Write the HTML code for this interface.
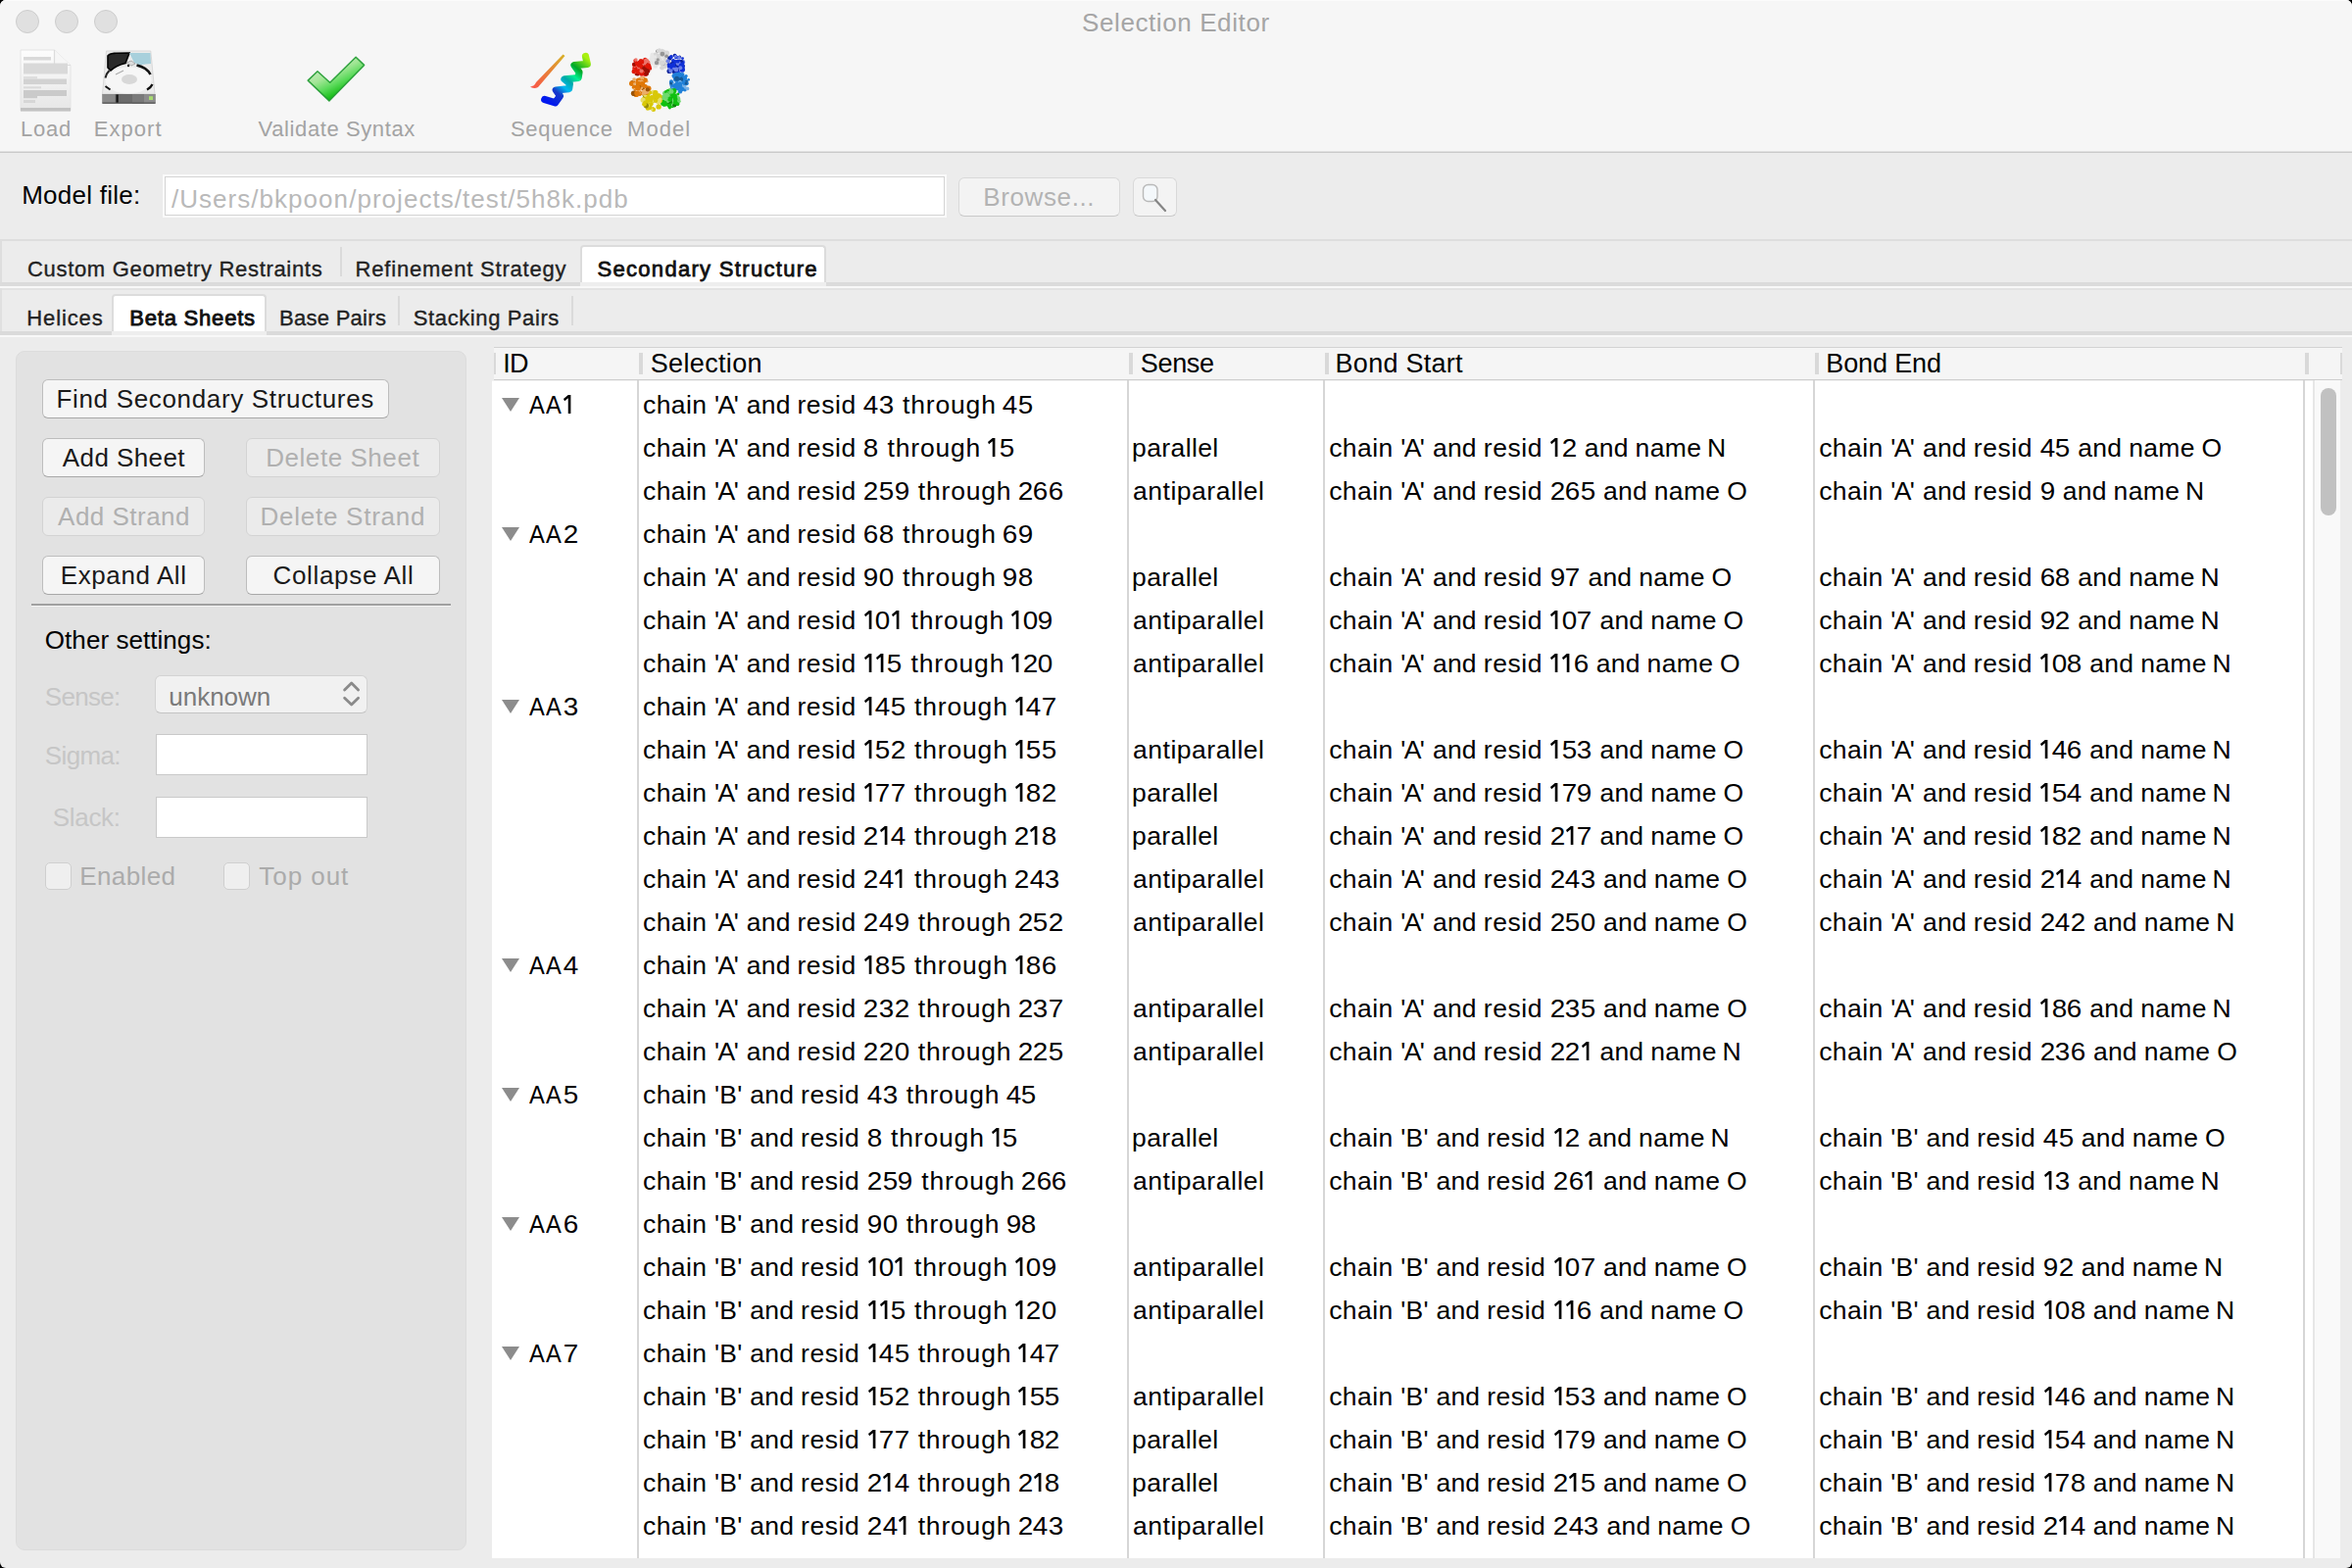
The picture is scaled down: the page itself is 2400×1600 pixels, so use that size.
<!DOCTYPE html><html><head><meta charset="utf-8"><style>
html,body{margin:0;padding:0;width:2400px;height:1600px;overflow:hidden;background:#000;}
body{font-family:"Liberation Sans",sans-serif;}
.win{position:absolute;left:0;top:0;width:2400px;height:1600px;background:#ececec;border-radius:6px 6px 6px 6px;overflow:hidden;}
.t{position:absolute;white-space:pre;line-height:1.1172;}
</style></head><body><div class="win">
<div style="position:absolute;left:0px;top:0px;width:2400px;height:154px;background:#f6f6f6;"></div>
<div style="position:absolute;left:0px;top:0px;width:2400px;height:1px;background:#fbfbfb;"></div>
<div style="position:absolute;left:0px;top:154px;width:2400px;height:1px;background:#e2e2e2;"></div>
<div style="position:absolute;left:0px;top:155px;width:2400px;height:1px;background:#c9c9c9;"></div>
<div style="position:absolute;left:16px;top:10px;width:24px;height:24px;box-sizing:border-box;border-radius:50%;background:#e0e0e0;border:1px solid #cdcdcd;"></div>
<div style="position:absolute;left:56px;top:10px;width:24px;height:24px;box-sizing:border-box;border-radius:50%;background:#e0e0e0;border:1px solid #cdcdcd;"></div>
<div style="position:absolute;left:96px;top:10px;width:24px;height:24px;box-sizing:border-box;border-radius:50%;background:#e0e0e0;border:1px solid #cdcdcd;"></div>
<div class="t" style="left:1104.0px;top:8.8px;font-size:26px;color:#a5a5a5;font-weight:400;letter-spacing:0.6px;">Selection Editor</div>
<div class="t" style="left:21.0px;top:120.1px;font-size:22px;color:#a3a3a3;font-weight:400;letter-spacing:0.8px;">Load</div>
<div class="t" style="left:95.8px;top:120.1px;font-size:22px;color:#a3a3a3;font-weight:400;letter-spacing:1.04px;">Export</div>
<div class="t" style="left:263.6px;top:120.1px;font-size:22px;color:#a3a3a3;font-weight:400;letter-spacing:0.6px;">Validate Syntax</div>
<div class="t" style="left:521.0px;top:120.1px;font-size:22px;color:#a3a3a3;font-weight:400;letter-spacing:0.686px;">Sequence</div>
<div class="t" style="left:640.0px;top:120.1px;font-size:22px;color:#a3a3a3;font-weight:400;letter-spacing:1.075px;">Model</div>
<svg style="position:absolute;left:14px;top:46px" width="66" height="72" viewBox="14 46 66 72">
<defs><linearGradient id="pg" x1="0" y1="0" x2="0" y2="1"><stop offset="0" stop-color="#fdfdfd"/><stop offset="1" stop-color="#e6e6e6"/></linearGradient></defs>
<path d="M21 51 H55.5 L72 66.5 V113 H21 Z" fill="url(#pg)" stroke="#e4e4e4" stroke-width="1"/>
<path d="M55.5 51 V66.5 H72" fill="#f6f6f6" stroke="#dcdcdc" stroke-width="1.2"/>
<g fill="#d9d9d9">
<rect x="24" y="58" width="28" height="3.5"/>
<rect x="24" y="64.5" width="45" height="11"/>
<rect x="24" y="78" width="14" height="2.5" fill="#dedede"/>
<rect x="24" y="80.5" width="44" height="5.5" fill="#d2d2d2"/>
<rect x="24" y="88.3" width="18" height="2" fill="#dadada"/>
<rect x="24" y="92" width="44" height="6" fill="#cacaca"/>
<rect x="24" y="98" width="14" height="2.2" fill="#cacaca"/>
<rect x="24" y="102" width="12" height="3" fill="#d6d6d6"/>
</g>
<rect x="21" y="110" width="51" height="3.5" fill="#c2c2c2"/>
</svg>
<svg style="position:absolute;left:98px;top:46px" width="66" height="68" viewBox="98 46 66 68">
<path d="M108.5 52 H153.8 L158 96 H104.5 Z" fill="#ebebeb" stroke="#d2d2d2" stroke-width="0.8"/>
<path d="M110 57 C112 54 118 54 132 54 L128 64.5 C122 66 116 69 113 72 L110 69 Z" fill="#2a2a2a" stroke="#000" stroke-width="1.6"/>
<path d="M132 54 H153.5 L154 65 C150 65 146 66 143 66.5 L137 64 Z" fill="#a8d0dc"/>
<ellipse cx="131" cy="82" rx="23.5" ry="13.5" fill="#f6f6f6"/>
<path d="M139.5 66.5 C146 68 151 71 153.5 76" fill="none" stroke="#111" stroke-width="2.6"/>
<path d="M111.5 72 C109.5 74 108 77 107.5 79.5" fill="none" stroke="#222" stroke-width="2"/>
<path d="M107.5 88 L112.5 91.5" fill="none" stroke="#111" stroke-width="2"/>
<path d="M150 91.5 C152.5 90 154.5 88.5 155.5 86" fill="none" stroke="#111" stroke-width="2.2"/>
<ellipse cx="132" cy="81" rx="8" ry="5" fill="#d8d8d8"/>
<path d="M129 64 L134 62 L138 65 L134 67 Z" fill="#ddd" stroke="#888" stroke-width="0.6"/>
<circle cx="131" cy="67" r="1.2" fill="#111"/>
<path d="M118 76 L126 72" stroke="#aaa" stroke-width="1.2"/>
<rect x="104.5" y="96" width="54" height="9.5" fill="#6c6c6c"/>
<rect x="104.5" y="96" width="13" height="9.5" fill="#8a8a8a"/>
<rect x="135" y="96" width="12" height="9.5" fill="#7a7a7a"/>
<rect x="147" y="96" width="11.5" height="9.5" fill="#8c8c8c"/>
<rect x="118.5" y="96.5" width="2.2" height="8.5" fill="#111"/>
<rect x="152" y="98.2" width="4" height="3.8" fill="#a8dc70"/>
<rect x="104.5" y="104.5" width="54" height="1.2" fill="#555"/>
</svg>
<svg style="position:absolute;left:311px;top:55px" width="64" height="52" viewBox="0 0 64 52">
<defs><linearGradient id="cg" x1="0.22" y1="0.12" x2="0.72" y2="0.88"><stop offset="0" stop-color="#d4eccc"/><stop offset="0.38" stop-color="#a2e696"/><stop offset="0.62" stop-color="#5ada5a"/><stop offset="0.82" stop-color="#22c222"/><stop offset="1" stop-color="#069806"/></linearGradient></defs>
<path d="M3.2 27.1 L13 17.7 L25.7 29.2 L52.1 3.3 L60.6 11.4 L24.9 47.9 Z" fill="url(#cg)" stroke="#1f9a30" stroke-opacity="0.9" stroke-width="1.5" stroke-linejoin="round"/>
</svg>
<svg style="position:absolute;left:536px;top:50px" width="70" height="64" viewBox="536 50 70 64">
<defs><linearGradient id="og" gradientUnits="userSpaceOnUse" x1="545" y1="90" x2="576" y2="57"><stop offset="0" stop-color="#f85848"/><stop offset="0.5" stop-color="#e88038"/><stop offset="1" stop-color="#d8b028"/></linearGradient>
<linearGradient id="hg" gradientUnits="userSpaceOnUse" x1="560" y1="104" x2="597" y2="58"><stop offset="0" stop-color="#0018f0"/><stop offset="0.22" stop-color="#1838c8"/><stop offset="0.36" stop-color="#00b8f0"/><stop offset="0.5" stop-color="#00a8a8"/><stop offset="0.62" stop-color="#00f090"/><stop offset="0.76" stop-color="#00a828"/><stop offset="1" stop-color="#a8f010"/></linearGradient></defs>
<path d="M541 88.5 C543 90 546 90.5 549 89 L576.5 57 L574.5 55.5 L547 84 C546 86 545 88 541 88.5 Z" fill="url(#og)"/>
<path d="M555.7 101.5 L566.5 104.8 L571.5 97.8 L567.3 92 L580.6 90.7 L581.4 85.3 L576 80.8 L590.1 79.5 L591 73.7 L586 66.7 L599.3 65.4 L597.5 57.5" stroke="url(#hg)" stroke-width="7.2" fill="none" stroke-linecap="round" stroke-linejoin="round"/>
</svg>
<svg style="position:absolute;left:638px;top:46px" width="72" height="70" viewBox="638 46 72 70"><circle cx="653.5" cy="70.9" r="1.4" fill="rgb(236, 116, 106)"/><circle cx="650.0" cy="67.6" r="2.1" fill="rgb(224, 24, 8)"/><circle cx="659.7" cy="69.8" r="1.4" fill="rgb(224, 24, 8)"/><circle cx="647.2" cy="72.4" r="1.7" fill="rgb(224, 24, 8)"/><circle cx="648.2" cy="62.0" r="1.9" fill="rgb(224, 24, 8)"/><circle cx="655.7" cy="68.4" r="1.8" fill="rgb(236, 116, 106)"/><circle cx="655.9" cy="70.3" r="2.6" fill="rgb(224, 24, 8)"/><circle cx="657.3" cy="74.5" r="1.9" fill="rgb(236, 116, 106)"/><circle cx="653.3" cy="68.2" r="1.6" fill="rgb(224, 24, 8)"/><circle cx="652.4" cy="63.9" r="2.2" fill="rgb(224, 24, 8)"/><circle cx="650.7" cy="69.8" r="2.4" fill="rgb(236, 116, 106)"/><circle cx="654.8" cy="75.0" r="2.7" fill="rgb(224, 24, 8)"/><circle cx="654.1" cy="64.7" r="1.5" fill="rgb(156, 16, 5)"/><circle cx="647.8" cy="72.4" r="2.1" fill="rgb(224, 24, 8)"/><circle cx="661.5" cy="70.3" r="2.2" fill="rgb(236, 116, 106)"/><circle cx="657.6" cy="65.6" r="2.3" fill="rgb(236, 116, 106)"/><circle cx="649.8" cy="66.0" r="2.8" fill="rgb(236, 116, 106)"/><circle cx="647.6" cy="69.8" r="2.4" fill="rgb(224, 24, 8)"/><circle cx="648.9" cy="61.1" r="1.8" fill="rgb(236, 116, 106)"/><circle cx="649.2" cy="73.3" r="2.0" fill="rgb(224, 24, 8)"/><circle cx="655.6" cy="70.4" r="2.5" fill="rgb(224, 24, 8)"/><circle cx="657.1" cy="71.2" r="2.7" fill="rgb(224, 24, 8)"/><circle cx="659.3" cy="71.2" r="2.7" fill="rgb(224, 24, 8)"/><circle cx="658.2" cy="60.8" r="2.0" fill="rgb(224, 24, 8)"/><circle cx="649.1" cy="75.4" r="1.5" fill="rgb(156, 16, 5)"/><circle cx="656.1" cy="71.7" r="2.1" fill="rgb(224, 24, 8)"/><circle cx="651.4" cy="66.6" r="2.0" fill="rgb(224, 24, 8)"/><circle cx="650.3" cy="73.3" r="2.4" fill="rgb(156, 16, 5)"/><circle cx="647.9" cy="67.9" r="1.4" fill="rgb(236, 116, 106)"/><circle cx="661.0" cy="63.9" r="2.6" fill="rgb(236, 116, 106)"/><circle cx="650.7" cy="71.7" r="2.3" fill="rgb(224, 24, 8)"/><circle cx="655.9" cy="69.1" r="1.6" fill="rgb(224, 24, 8)"/><circle cx="654.0" cy="69.6" r="1.5" fill="rgb(224, 24, 8)"/><circle cx="658.4" cy="71.4" r="2.7" fill="rgb(224, 24, 8)"/><circle cx="652.7" cy="67.0" r="1.9" fill="rgb(224, 24, 8)"/><circle cx="653.2" cy="70.2" r="2.9" fill="rgb(236, 116, 106)"/><circle cx="649.0" cy="69.8" r="1.5" fill="rgb(224, 24, 8)"/><circle cx="652.5" cy="71.7" r="1.6" fill="rgb(236, 116, 106)"/><circle cx="663.7" cy="69.9" r="1.5" fill="rgb(224, 24, 8)"/><circle cx="653.9" cy="68.4" r="2.9" fill="rgb(224, 24, 8)"/><circle cx="659.4" cy="63.0" r="1.9" fill="rgb(224, 24, 8)"/><circle cx="658.5" cy="75.5" r="2.5" fill="rgb(224, 24, 8)"/><circle cx="653.0" cy="71.5" r="2.9" fill="rgb(236, 116, 106)"/><circle cx="659.5" cy="62.1" r="2.5" fill="rgb(236, 116, 106)"/><circle cx="655.5" cy="74.5" r="1.3" fill="rgb(224, 24, 8)"/><circle cx="658.4" cy="69.3" r="2.4" fill="rgb(224, 24, 8)"/><circle cx="659.8" cy="67.1" r="2.9" fill="rgb(156, 16, 5)"/><circle cx="659.1" cy="67.3" r="1.7" fill="rgb(224, 24, 8)"/><circle cx="655.6" cy="71.6" r="2.7" fill="rgb(236, 116, 106)"/><circle cx="657.7" cy="63.8" r="2.6" fill="rgb(236, 116, 106)"/><circle cx="660.7" cy="72.2" r="2.6" fill="rgb(156, 16, 5)"/><circle cx="654.6" cy="62.9" r="2.6" fill="rgb(224, 24, 8)"/><circle cx="650.6" cy="75.7" r="1.9" fill="rgb(156, 16, 5)"/><circle cx="647.2" cy="73.9" r="1.6" fill="rgb(236, 116, 106)"/><circle cx="656.4" cy="70.4" r="2.6" fill="rgb(156, 16, 5)"/><circle cx="659.6" cy="75.2" r="2.4" fill="rgb(156, 16, 5)"/><circle cx="650.9" cy="73.6" r="1.3" fill="rgb(224, 24, 8)"/><circle cx="661.5" cy="67.3" r="2.8" fill="rgb(224, 24, 8)"/><circle cx="646.7" cy="72.1" r="1.6" fill="rgb(236, 116, 106)"/><circle cx="654.6" cy="72.6" r="2.2" fill="rgb(224, 24, 8)"/><circle cx="654.3" cy="73.8" r="2.8" fill="rgb(224, 24, 8)"/><circle cx="651.3" cy="73.0" r="2.7" fill="rgb(224, 24, 8)"/><circle cx="646.7" cy="72.9" r="2.2" fill="rgb(224, 24, 8)"/><circle cx="654.0" cy="68.5" r="1.6" fill="rgb(224, 24, 8)"/><circle cx="662.7" cy="68.8" r="2.1" fill="rgb(224, 24, 8)"/><circle cx="653.6" cy="62.4" r="2.1" fill="rgb(224, 24, 8)"/><circle cx="647.1" cy="65.9" r="2.2" fill="rgb(224, 24, 8)"/><circle cx="654.6" cy="72.5" r="2.1" fill="rgb(236, 116, 106)"/><circle cx="647.3" cy="65.6" r="2.0" fill="rgb(156, 16, 5)"/><circle cx="650.1" cy="64.8" r="2.4" fill="rgb(224, 24, 8)"/><circle cx="667.6" cy="62.3" r="2.8" fill="rgb(215, 215, 215)"/><circle cx="670.7" cy="52.3" r="1.7" fill="rgb(150, 150, 150)"/><circle cx="664.9" cy="57.2" r="1.5" fill="rgb(231, 231, 231)"/><circle cx="677.3" cy="64.2" r="1.7" fill="rgb(215, 215, 215)"/><circle cx="679.8" cy="63.7" r="2.7" fill="rgb(231, 231, 231)"/><circle cx="677.6" cy="66.7" r="1.5" fill="rgb(231, 231, 231)"/><circle cx="680.3" cy="54.3" r="2.8" fill="rgb(215, 215, 215)"/><circle cx="668.8" cy="63.9" r="2.6" fill="rgb(150, 150, 150)"/><circle cx="676.2" cy="65.0" r="1.8" fill="rgb(215, 215, 215)"/><circle cx="674.8" cy="64.5" r="1.3" fill="rgb(231, 231, 231)"/><circle cx="668.4" cy="58.7" r="1.8" fill="rgb(215, 215, 215)"/><circle cx="669.2" cy="56.3" r="2.9" fill="rgb(215, 215, 215)"/><circle cx="675.6" cy="51.5" r="1.7" fill="rgb(215, 215, 215)"/><circle cx="681.1" cy="62.5" r="1.5" fill="rgb(215, 215, 215)"/><circle cx="665.5" cy="64.7" r="1.7" fill="rgb(231, 231, 231)"/><circle cx="678.7" cy="67.7" r="2.4" fill="rgb(215, 215, 215)"/><circle cx="674.5" cy="61.2" r="2.0" fill="rgb(231, 231, 231)"/><circle cx="681.6" cy="64.5" r="2.6" fill="rgb(231, 231, 231)"/><circle cx="680.8" cy="64.8" r="2.7" fill="rgb(215, 215, 215)"/><circle cx="669.1" cy="61.8" r="2.8" fill="rgb(215, 215, 215)"/><circle cx="673.1" cy="62.8" r="1.7" fill="rgb(215, 215, 215)"/><circle cx="675.4" cy="62.2" r="1.6" fill="rgb(215, 215, 215)"/><circle cx="671.8" cy="64.3" r="1.8" fill="rgb(231, 231, 231)"/><circle cx="670.6" cy="60.5" r="1.3" fill="rgb(215, 215, 215)"/><circle cx="673.4" cy="61.0" r="2.2" fill="rgb(231, 231, 231)"/><circle cx="675.5" cy="65.7" r="1.5" fill="rgb(150, 150, 150)"/><circle cx="675.6" cy="55.7" r="2.6" fill="rgb(215, 215, 215)"/><circle cx="668.8" cy="64.2" r="2.9" fill="rgb(231, 231, 231)"/><circle cx="668.8" cy="67.5" r="2.3" fill="rgb(231, 231, 231)"/><circle cx="669.7" cy="63.1" r="1.5" fill="rgb(215, 215, 215)"/><circle cx="680.4" cy="63.8" r="1.6" fill="rgb(215, 215, 215)"/><circle cx="680.7" cy="64.8" r="2.4" fill="rgb(231, 231, 231)"/><circle cx="672.7" cy="64.0" r="2.0" fill="rgb(215, 215, 215)"/><circle cx="676.4" cy="65.0" r="2.8" fill="rgb(215, 215, 215)"/><circle cx="679.5" cy="59.4" r="2.8" fill="rgb(215, 215, 215)"/><circle cx="671.7" cy="64.8" r="1.9" fill="rgb(215, 215, 215)"/><circle cx="667.6" cy="61.4" r="2.1" fill="rgb(215, 215, 215)"/><circle cx="677.1" cy="60.6" r="1.9" fill="rgb(215, 215, 215)"/><circle cx="674.0" cy="60.7" r="1.7" fill="rgb(215, 215, 215)"/><circle cx="668.2" cy="57.4" r="2.4" fill="rgb(231, 231, 231)"/><circle cx="671.6" cy="52.0" r="1.8" fill="rgb(215, 215, 215)"/><circle cx="675.9" cy="60.3" r="2.3" fill="rgb(231, 231, 231)"/><circle cx="681.5" cy="62.8" r="2.3" fill="rgb(150, 150, 150)"/><circle cx="672.6" cy="52.3" r="2.1" fill="rgb(215, 215, 215)"/><circle cx="665.0" cy="60.3" r="2.6" fill="rgb(231, 231, 231)"/><circle cx="665.8" cy="56.1" r="2.4" fill="rgb(231, 231, 231)"/><circle cx="673.5" cy="61.3" r="1.9" fill="rgb(215, 215, 215)"/><circle cx="680.0" cy="65.6" r="2.3" fill="rgb(215, 215, 215)"/><circle cx="668.3" cy="55.3" r="1.3" fill="rgb(215, 215, 215)"/><circle cx="675.7" cy="53.1" r="2.2" fill="rgb(215, 215, 215)"/><circle cx="672.6" cy="59.3" r="1.7" fill="rgb(231, 231, 231)"/><circle cx="676.8" cy="62.2" r="1.6" fill="rgb(231, 231, 231)"/><circle cx="672.8" cy="51.2" r="1.9" fill="rgb(215, 215, 215)"/><circle cx="666.2" cy="61.5" r="2.3" fill="rgb(231, 231, 231)"/><circle cx="672.4" cy="59.3" r="1.7" fill="rgb(215, 215, 215)"/><circle cx="673.2" cy="56.4" r="1.3" fill="rgb(215, 215, 215)"/><circle cx="676.9" cy="61.9" r="2.4" fill="rgb(231, 231, 231)"/><circle cx="671.6" cy="56.9" r="2.0" fill="rgb(215, 215, 215)"/><circle cx="671.3" cy="60.9" r="1.6" fill="rgb(150, 150, 150)"/><circle cx="682.4" cy="59.3" r="2.0" fill="rgb(215, 215, 215)"/><circle cx="677.3" cy="52.1" r="1.7" fill="rgb(215, 215, 215)"/><circle cx="675.7" cy="69.3" r="2.2" fill="rgb(215, 215, 215)"/><circle cx="677.2" cy="65.2" r="1.5" fill="rgb(150, 150, 150)"/><circle cx="675.9" cy="55.1" r="2.4" fill="rgb(150, 150, 150)"/><circle cx="674.4" cy="69.2" r="1.3" fill="rgb(215, 215, 215)"/><circle cx="679.2" cy="60.6" r="1.8" fill="rgb(215, 215, 215)"/><circle cx="676.3" cy="64.0" r="2.6" fill="rgb(215, 215, 215)"/><circle cx="681.2" cy="60.6" r="1.5" fill="rgb(231, 231, 231)"/><circle cx="680.1" cy="57.2" r="1.8" fill="rgb(150, 150, 150)"/><circle cx="670.0" cy="64.1" r="2.2" fill="rgb(150, 150, 150)"/><circle cx="686.1" cy="69.9" r="1.4" fill="rgb(16, 48, 216)"/><circle cx="696.2" cy="70.9" r="2.8" fill="rgb(16, 48, 216)"/><circle cx="689.5" cy="69.7" r="1.6" fill="rgb(16, 48, 216)"/><circle cx="683.1" cy="72.5" r="2.6" fill="rgb(11, 33, 151)"/><circle cx="683.4" cy="59.4" r="2.2" fill="rgb(11, 33, 151)"/><circle cx="689.3" cy="64.8" r="2.0" fill="rgb(111, 130, 231)"/><circle cx="689.6" cy="58.9" r="1.4" fill="rgb(16, 48, 216)"/><circle cx="691.5" cy="64.9" r="1.8" fill="rgb(16, 48, 216)"/><circle cx="687.2" cy="73.2" r="1.7" fill="rgb(11, 33, 151)"/><circle cx="687.2" cy="62.5" r="1.9" fill="rgb(16, 48, 216)"/><circle cx="690.8" cy="68.2" r="2.7" fill="rgb(16, 48, 216)"/><circle cx="686.2" cy="66.0" r="2.9" fill="rgb(11, 33, 151)"/><circle cx="687.2" cy="66.6" r="1.4" fill="rgb(16, 48, 216)"/><circle cx="688.5" cy="67.4" r="1.7" fill="rgb(16, 48, 216)"/><circle cx="681.6" cy="62.2" r="2.0" fill="rgb(111, 130, 231)"/><circle cx="684.3" cy="69.0" r="1.8" fill="rgb(16, 48, 216)"/><circle cx="693.1" cy="67.4" r="1.5" fill="rgb(11, 33, 151)"/><circle cx="682.6" cy="65.8" r="1.6" fill="rgb(111, 130, 231)"/><circle cx="689.0" cy="69.5" r="2.0" fill="rgb(16, 48, 216)"/><circle cx="697.6" cy="63.5" r="1.3" fill="rgb(111, 130, 231)"/><circle cx="696.8" cy="67.4" r="2.1" fill="rgb(11, 33, 151)"/><circle cx="689.5" cy="65.9" r="2.8" fill="rgb(16, 48, 216)"/><circle cx="693.4" cy="58.3" r="1.7" fill="rgb(11, 33, 151)"/><circle cx="691.5" cy="67.5" r="2.4" fill="rgb(16, 48, 216)"/><circle cx="696.6" cy="63.2" r="2.5" fill="rgb(111, 130, 231)"/><circle cx="683.5" cy="67.6" r="2.6" fill="rgb(16, 48, 216)"/><circle cx="690.5" cy="74.8" r="1.8" fill="rgb(111, 130, 231)"/><circle cx="692.0" cy="68.5" r="2.4" fill="rgb(111, 130, 231)"/><circle cx="690.6" cy="66.9" r="2.2" fill="rgb(16, 48, 216)"/><circle cx="687.0" cy="68.1" r="1.3" fill="rgb(111, 130, 231)"/><circle cx="687.7" cy="71.1" r="2.3" fill="rgb(11, 33, 151)"/><circle cx="693.7" cy="62.1" r="1.7" fill="rgb(16, 48, 216)"/><circle cx="696.7" cy="64.1" r="1.3" fill="rgb(16, 48, 216)"/><circle cx="682.3" cy="66.0" r="1.7" fill="rgb(16, 48, 216)"/><circle cx="685.0" cy="58.1" r="1.4" fill="rgb(16, 48, 216)"/><circle cx="686.8" cy="70.3" r="1.6" fill="rgb(111, 130, 231)"/><circle cx="691.7" cy="58.5" r="1.6" fill="rgb(16, 48, 216)"/><circle cx="693.6" cy="65.1" r="1.7" fill="rgb(111, 130, 231)"/><circle cx="690.9" cy="73.6" r="2.8" fill="rgb(16, 48, 216)"/><circle cx="686.6" cy="66.0" r="2.0" fill="rgb(16, 48, 216)"/><circle cx="684.9" cy="58.0" r="1.9" fill="rgb(16, 48, 216)"/><circle cx="691.7" cy="75.0" r="1.4" fill="rgb(16, 48, 216)"/><circle cx="694.1" cy="67.7" r="2.7" fill="rgb(11, 33, 151)"/><circle cx="688.5" cy="56.5" r="1.8" fill="rgb(11, 33, 151)"/><circle cx="693.1" cy="74.2" r="1.4" fill="rgb(111, 130, 231)"/><circle cx="687.0" cy="61.8" r="1.8" fill="rgb(16, 48, 216)"/><circle cx="689.6" cy="66.0" r="1.9" fill="rgb(16, 48, 216)"/><circle cx="691.6" cy="65.3" r="1.6" fill="rgb(11, 33, 151)"/><circle cx="684.4" cy="72.4" r="2.0" fill="rgb(111, 130, 231)"/><circle cx="694.9" cy="67.6" r="2.8" fill="rgb(16, 48, 216)"/><circle cx="691.1" cy="70.3" r="1.3" fill="rgb(11, 33, 151)"/><circle cx="682.5" cy="70.3" r="1.4" fill="rgb(111, 130, 231)"/><circle cx="690.8" cy="66.2" r="1.7" fill="rgb(11, 33, 151)"/><circle cx="689.3" cy="57.1" r="1.7" fill="rgb(16, 48, 216)"/><circle cx="696.0" cy="64.1" r="2.4" fill="rgb(16, 48, 216)"/><circle cx="687.9" cy="69.4" r="2.5" fill="rgb(16, 48, 216)"/><circle cx="695.5" cy="62.4" r="1.3" fill="rgb(11, 33, 151)"/><circle cx="690.1" cy="71.5" r="2.8" fill="rgb(11, 33, 151)"/><circle cx="686.8" cy="68.3" r="2.1" fill="rgb(16, 48, 216)"/><circle cx="692.1" cy="64.6" r="2.5" fill="rgb(111, 130, 231)"/><circle cx="693.0" cy="58.8" r="1.8" fill="rgb(111, 130, 231)"/><circle cx="687.5" cy="70.1" r="1.4" fill="rgb(111, 130, 231)"/><circle cx="692.0" cy="73.3" r="1.4" fill="rgb(16, 48, 216)"/><circle cx="695.6" cy="67.2" r="2.9" fill="rgb(16, 48, 216)"/><circle cx="696.5" cy="59.6" r="1.4" fill="rgb(16, 48, 216)"/><circle cx="694.3" cy="69.2" r="2.0" fill="rgb(111, 130, 231)"/><circle cx="690.0" cy="71.0" r="2.4" fill="rgb(111, 130, 231)"/><circle cx="689.4" cy="57.4" r="1.5" fill="rgb(111, 130, 231)"/><circle cx="691.7" cy="62.5" r="1.9" fill="rgb(16, 48, 216)"/><circle cx="689.3" cy="62.8" r="1.7" fill="rgb(16, 48, 216)"/><circle cx="698.9" cy="91.8" r="1.8" fill="rgb(32, 128, 216)"/><circle cx="686.4" cy="90.3" r="1.7" fill="rgb(32, 128, 216)"/><circle cx="696.4" cy="78.0" r="1.5" fill="rgb(22, 89, 151)"/><circle cx="685.7" cy="85.9" r="2.8" fill="rgb(121, 178, 231)"/><circle cx="697.8" cy="85.6" r="1.6" fill="rgb(32, 128, 216)"/><circle cx="700.3" cy="83.5" r="1.9" fill="rgb(22, 89, 151)"/><circle cx="697.5" cy="80.6" r="2.5" fill="rgb(32, 128, 216)"/><circle cx="695.8" cy="83.9" r="2.3" fill="rgb(32, 128, 216)"/><circle cx="694.9" cy="89.2" r="1.6" fill="rgb(32, 128, 216)"/><circle cx="693.7" cy="91.2" r="1.6" fill="rgb(121, 178, 231)"/><circle cx="698.2" cy="84.9" r="1.6" fill="rgb(121, 178, 231)"/><circle cx="692.7" cy="87.5" r="2.2" fill="rgb(121, 178, 231)"/><circle cx="695.7" cy="85.3" r="2.2" fill="rgb(32, 128, 216)"/><circle cx="692.8" cy="83.2" r="2.4" fill="rgb(32, 128, 216)"/><circle cx="690.6" cy="86.7" r="2.8" fill="rgb(32, 128, 216)"/><circle cx="691.5" cy="90.5" r="2.0" fill="rgb(32, 128, 216)"/><circle cx="700.1" cy="77.5" r="1.6" fill="rgb(32, 128, 216)"/><circle cx="693.5" cy="81.5" r="2.7" fill="rgb(32, 128, 216)"/><circle cx="686.6" cy="88.4" r="2.7" fill="rgb(32, 128, 216)"/><circle cx="691.3" cy="85.2" r="2.2" fill="rgb(32, 128, 216)"/><circle cx="688.3" cy="77.7" r="2.3" fill="rgb(32, 128, 216)"/><circle cx="689.8" cy="88.9" r="1.8" fill="rgb(32, 128, 216)"/><circle cx="685.0" cy="83.4" r="2.1" fill="rgb(32, 128, 216)"/><circle cx="697.0" cy="75.9" r="1.5" fill="rgb(32, 128, 216)"/><circle cx="702.6" cy="81.3" r="1.4" fill="rgb(32, 128, 216)"/><circle cx="698.3" cy="82.4" r="2.3" fill="rgb(22, 89, 151)"/><circle cx="695.1" cy="82.2" r="1.7" fill="rgb(121, 178, 231)"/><circle cx="686.9" cy="89.4" r="1.6" fill="rgb(121, 178, 231)"/><circle cx="694.9" cy="89.5" r="1.9" fill="rgb(32, 128, 216)"/><circle cx="696.5" cy="87.1" r="2.7" fill="rgb(121, 178, 231)"/><circle cx="700.0" cy="86.2" r="1.4" fill="rgb(121, 178, 231)"/><circle cx="695.0" cy="82.8" r="2.2" fill="rgb(32, 128, 216)"/><circle cx="691.0" cy="81.6" r="2.2" fill="rgb(32, 128, 216)"/><circle cx="687.6" cy="87.8" r="2.0" fill="rgb(32, 128, 216)"/><circle cx="700.6" cy="85.6" r="1.7" fill="rgb(32, 128, 216)"/><circle cx="694.6" cy="76.6" r="1.6" fill="rgb(32, 128, 216)"/><circle cx="691.9" cy="84.9" r="2.0" fill="rgb(32, 128, 216)"/><circle cx="698.4" cy="87.5" r="1.4" fill="rgb(32, 128, 216)"/><circle cx="692.8" cy="83.4" r="2.5" fill="rgb(121, 178, 231)"/><circle cx="692.7" cy="84.5" r="1.9" fill="rgb(32, 128, 216)"/><circle cx="696.1" cy="83.9" r="2.9" fill="rgb(121, 178, 231)"/><circle cx="693.0" cy="76.4" r="2.9" fill="rgb(32, 128, 216)"/><circle cx="684.7" cy="85.1" r="1.6" fill="rgb(22, 89, 151)"/><circle cx="696.1" cy="75.8" r="1.9" fill="rgb(32, 128, 216)"/><circle cx="694.0" cy="82.0" r="1.7" fill="rgb(22, 89, 151)"/><circle cx="694.9" cy="82.4" r="2.8" fill="rgb(32, 128, 216)"/><circle cx="694.9" cy="88.2" r="1.8" fill="rgb(32, 128, 216)"/><circle cx="696.7" cy="85.3" r="2.8" fill="rgb(32, 128, 216)"/><circle cx="690.1" cy="76.7" r="2.6" fill="rgb(32, 128, 216)"/><circle cx="698.5" cy="88.6" r="1.9" fill="rgb(121, 178, 231)"/><circle cx="698.3" cy="80.1" r="2.7" fill="rgb(32, 128, 216)"/><circle cx="701.4" cy="90.4" r="1.9" fill="rgb(121, 178, 231)"/><circle cx="695.0" cy="81.0" r="2.2" fill="rgb(22, 89, 151)"/><circle cx="688.9" cy="90.7" r="1.6" fill="rgb(32, 128, 216)"/><circle cx="693.9" cy="83.5" r="1.7" fill="rgb(121, 178, 231)"/><circle cx="687.9" cy="77.4" r="2.4" fill="rgb(32, 128, 216)"/><circle cx="693.9" cy="84.7" r="1.5" fill="rgb(32, 128, 216)"/><circle cx="690.0" cy="81.1" r="2.7" fill="rgb(32, 128, 216)"/><circle cx="696.2" cy="87.1" r="1.3" fill="rgb(121, 178, 231)"/><circle cx="698.5" cy="84.7" r="1.9" fill="rgb(32, 128, 216)"/><circle cx="694.9" cy="91.0" r="1.6" fill="rgb(32, 128, 216)"/><circle cx="689.9" cy="80.6" r="2.8" fill="rgb(32, 128, 216)"/><circle cx="694.0" cy="87.1" r="2.3" fill="rgb(32, 128, 216)"/><circle cx="699.4" cy="78.8" r="1.7" fill="rgb(32, 128, 216)"/><circle cx="700.9" cy="85.1" r="1.9" fill="rgb(32, 128, 216)"/><circle cx="690.6" cy="80.3" r="2.5" fill="rgb(22, 89, 151)"/><circle cx="694.0" cy="93.4" r="2.2" fill="rgb(32, 128, 216)"/><circle cx="691.0" cy="86.5" r="2.5" fill="rgb(32, 128, 216)"/><circle cx="700.1" cy="85.1" r="1.5" fill="rgb(22, 89, 151)"/><circle cx="696.0" cy="91.0" r="2.3" fill="rgb(32, 128, 216)"/><circle cx="685.1" cy="98.1" r="1.8" fill="rgb(16, 192, 16)"/><circle cx="692.3" cy="103.3" r="2.4" fill="rgb(111, 217, 111)"/><circle cx="692.4" cy="101.0" r="2.0" fill="rgb(111, 217, 111)"/><circle cx="683.7" cy="95.3" r="1.5" fill="rgb(16, 192, 16)"/><circle cx="684.1" cy="101.7" r="2.5" fill="rgb(16, 192, 16)"/><circle cx="681.1" cy="92.8" r="1.7" fill="rgb(111, 217, 111)"/><circle cx="679.0" cy="98.9" r="2.1" fill="rgb(111, 217, 111)"/><circle cx="683.3" cy="107.6" r="1.6" fill="rgb(11, 134, 11)"/><circle cx="684.4" cy="100.4" r="1.7" fill="rgb(16, 192, 16)"/><circle cx="683.6" cy="91.6" r="1.8" fill="rgb(111, 217, 111)"/><circle cx="687.2" cy="97.7" r="2.8" fill="rgb(16, 192, 16)"/><circle cx="679.0" cy="95.3" r="2.9" fill="rgb(111, 217, 111)"/><circle cx="675.7" cy="102.3" r="2.7" fill="rgb(111, 217, 111)"/><circle cx="677.0" cy="103.6" r="1.8" fill="rgb(16, 192, 16)"/><circle cx="685.6" cy="107.3" r="2.8" fill="rgb(16, 192, 16)"/><circle cx="684.5" cy="101.3" r="2.8" fill="rgb(16, 192, 16)"/><circle cx="682.6" cy="102.7" r="1.4" fill="rgb(16, 192, 16)"/><circle cx="681.6" cy="94.2" r="2.5" fill="rgb(111, 217, 111)"/><circle cx="690.0" cy="103.3" r="2.6" fill="rgb(16, 192, 16)"/><circle cx="687.7" cy="92.8" r="2.7" fill="rgb(16, 192, 16)"/><circle cx="691.8" cy="96.0" r="1.6" fill="rgb(16, 192, 16)"/><circle cx="684.7" cy="101.3" r="2.6" fill="rgb(111, 217, 111)"/><circle cx="678.5" cy="94.5" r="1.8" fill="rgb(111, 217, 111)"/><circle cx="685.5" cy="101.8" r="1.6" fill="rgb(111, 217, 111)"/><circle cx="681.8" cy="105.4" r="1.7" fill="rgb(16, 192, 16)"/><circle cx="682.5" cy="108.1" r="1.8" fill="rgb(16, 192, 16)"/><circle cx="689.7" cy="99.4" r="2.3" fill="rgb(111, 217, 111)"/><circle cx="689.0" cy="101.7" r="2.5" fill="rgb(16, 192, 16)"/><circle cx="679.8" cy="106.8" r="1.6" fill="rgb(16, 192, 16)"/><circle cx="685.1" cy="99.3" r="1.6" fill="rgb(111, 217, 111)"/><circle cx="687.1" cy="100.7" r="2.9" fill="rgb(111, 217, 111)"/><circle cx="689.8" cy="100.9" r="2.6" fill="rgb(16, 192, 16)"/><circle cx="686.3" cy="106.0" r="2.6" fill="rgb(16, 192, 16)"/><circle cx="683.4" cy="109.8" r="1.6" fill="rgb(16, 192, 16)"/><circle cx="682.2" cy="95.2" r="2.3" fill="rgb(16, 192, 16)"/><circle cx="691.0" cy="104.6" r="2.6" fill="rgb(111, 217, 111)"/><circle cx="680.8" cy="97.4" r="1.9" fill="rgb(16, 192, 16)"/><circle cx="685.3" cy="99.6" r="1.3" fill="rgb(11, 134, 11)"/><circle cx="685.0" cy="104.3" r="2.1" fill="rgb(11, 134, 11)"/><circle cx="677.7" cy="106.7" r="2.0" fill="rgb(16, 192, 16)"/><circle cx="676.4" cy="99.2" r="2.3" fill="rgb(111, 217, 111)"/><circle cx="681.5" cy="104.2" r="2.6" fill="rgb(16, 192, 16)"/><circle cx="680.0" cy="94.1" r="2.0" fill="rgb(16, 192, 16)"/><circle cx="685.0" cy="94.3" r="2.0" fill="rgb(16, 192, 16)"/><circle cx="686.6" cy="98.4" r="1.8" fill="rgb(16, 192, 16)"/><circle cx="681.6" cy="92.6" r="1.5" fill="rgb(16, 192, 16)"/><circle cx="684.1" cy="105.0" r="1.6" fill="rgb(16, 192, 16)"/><circle cx="682.6" cy="103.3" r="2.5" fill="rgb(11, 134, 11)"/><circle cx="691.4" cy="106.2" r="1.9" fill="rgb(16, 192, 16)"/><circle cx="692.0" cy="99.9" r="2.0" fill="rgb(111, 217, 111)"/><circle cx="686.3" cy="107.2" r="1.6" fill="rgb(16, 192, 16)"/><circle cx="683.3" cy="101.3" r="2.6" fill="rgb(16, 192, 16)"/><circle cx="682.0" cy="95.2" r="2.0" fill="rgb(111, 217, 111)"/><circle cx="688.2" cy="105.9" r="2.5" fill="rgb(16, 192, 16)"/><circle cx="688.4" cy="97.8" r="2.5" fill="rgb(16, 192, 16)"/><circle cx="681.0" cy="102.3" r="2.7" fill="rgb(111, 217, 111)"/><circle cx="685.1" cy="93.4" r="2.4" fill="rgb(111, 217, 111)"/><circle cx="680.6" cy="96.5" r="2.3" fill="rgb(16, 192, 16)"/><circle cx="688.2" cy="103.7" r="2.4" fill="rgb(111, 217, 111)"/><circle cx="681.5" cy="98.1" r="2.0" fill="rgb(16, 192, 16)"/><circle cx="680.3" cy="97.2" r="2.8" fill="rgb(111, 217, 111)"/><circle cx="686.9" cy="107.1" r="1.9" fill="rgb(111, 217, 111)"/><circle cx="674.7" cy="101.3" r="2.2" fill="rgb(16, 192, 16)"/><circle cx="688.2" cy="107.5" r="2.1" fill="rgb(11, 134, 11)"/><circle cx="689.2" cy="104.5" r="2.4" fill="rgb(16, 192, 16)"/><circle cx="677.1" cy="100.2" r="2.1" fill="rgb(111, 217, 111)"/><circle cx="676.3" cy="105.6" r="2.4" fill="rgb(16, 192, 16)"/><circle cx="677.9" cy="105.6" r="2.9" fill="rgb(16, 192, 16)"/><circle cx="683.2" cy="101.7" r="1.9" fill="rgb(16, 192, 16)"/><circle cx="689.1" cy="101.1" r="2.4" fill="rgb(16, 192, 16)"/><circle cx="663.2" cy="105.5" r="2.5" fill="rgb(216, 200, 8)"/><circle cx="671.0" cy="100.3" r="2.6" fill="rgb(216, 200, 8)"/><circle cx="662.9" cy="104.5" r="2.5" fill="rgb(216, 200, 8)"/><circle cx="667.9" cy="96.1" r="2.2" fill="rgb(216, 200, 8)"/><circle cx="666.8" cy="111.7" r="2.3" fill="rgb(216, 200, 8)"/><circle cx="668.8" cy="95.0" r="1.8" fill="rgb(216, 200, 8)"/><circle cx="663.3" cy="101.8" r="1.9" fill="rgb(231, 222, 106)"/><circle cx="667.6" cy="99.5" r="1.7" fill="rgb(216, 200, 8)"/><circle cx="662.8" cy="103.8" r="2.5" fill="rgb(216, 200, 8)"/><circle cx="664.7" cy="106.0" r="2.1" fill="rgb(216, 200, 8)"/><circle cx="659.2" cy="105.5" r="1.9" fill="rgb(231, 222, 106)"/><circle cx="673.1" cy="98.8" r="2.6" fill="rgb(216, 200, 8)"/><circle cx="672.0" cy="98.0" r="2.6" fill="rgb(216, 200, 8)"/><circle cx="665.1" cy="102.1" r="2.8" fill="rgb(216, 200, 8)"/><circle cx="663.4" cy="99.5" r="1.5" fill="rgb(216, 200, 8)"/><circle cx="666.2" cy="110.4" r="1.5" fill="rgb(216, 200, 8)"/><circle cx="672.0" cy="97.9" r="2.7" fill="rgb(216, 200, 8)"/><circle cx="659.2" cy="97.5" r="2.7" fill="rgb(231, 222, 106)"/><circle cx="667.4" cy="94.3" r="2.4" fill="rgb(216, 200, 8)"/><circle cx="657.8" cy="101.0" r="2.7" fill="rgb(216, 200, 8)"/><circle cx="661.9" cy="101.2" r="1.5" fill="rgb(216, 200, 8)"/><circle cx="664.1" cy="102.6" r="1.5" fill="rgb(216, 200, 8)"/><circle cx="659.6" cy="102.8" r="2.7" fill="rgb(216, 200, 8)"/><circle cx="673.8" cy="102.8" r="2.2" fill="rgb(216, 200, 8)"/><circle cx="661.1" cy="95.3" r="2.0" fill="rgb(216, 200, 8)"/><circle cx="666.9" cy="102.1" r="2.3" fill="rgb(231, 222, 106)"/><circle cx="672.0" cy="103.7" r="2.8" fill="rgb(231, 222, 106)"/><circle cx="660.9" cy="110.7" r="2.1" fill="rgb(216, 200, 8)"/><circle cx="666.1" cy="102.0" r="2.3" fill="rgb(231, 222, 106)"/><circle cx="660.9" cy="109.8" r="2.1" fill="rgb(216, 200, 8)"/><circle cx="657.6" cy="101.2" r="2.0" fill="rgb(216, 200, 8)"/><circle cx="659.8" cy="105.4" r="1.8" fill="rgb(231, 222, 106)"/><circle cx="667.8" cy="98.1" r="1.7" fill="rgb(216, 200, 8)"/><circle cx="656.1" cy="102.1" r="2.6" fill="rgb(231, 222, 106)"/><circle cx="663.3" cy="106.2" r="2.2" fill="rgb(216, 200, 8)"/><circle cx="660.1" cy="96.5" r="2.5" fill="rgb(216, 200, 8)"/><circle cx="670.1" cy="98.4" r="1.8" fill="rgb(216, 200, 8)"/><circle cx="668.4" cy="102.6" r="2.3" fill="rgb(151, 140, 5)"/><circle cx="661.0" cy="95.8" r="2.3" fill="rgb(151, 140, 5)"/><circle cx="660.3" cy="97.9" r="2.3" fill="rgb(231, 222, 106)"/><circle cx="664.0" cy="99.6" r="2.0" fill="rgb(231, 222, 106)"/><circle cx="665.6" cy="100.6" r="1.4" fill="rgb(216, 200, 8)"/><circle cx="666.8" cy="93.7" r="1.9" fill="rgb(231, 222, 106)"/><circle cx="668.9" cy="95.3" r="1.7" fill="rgb(216, 200, 8)"/><circle cx="663.7" cy="107.4" r="2.0" fill="rgb(216, 200, 8)"/><circle cx="659.7" cy="95.5" r="2.2" fill="rgb(216, 200, 8)"/><circle cx="667.5" cy="103.0" r="2.2" fill="rgb(231, 222, 106)"/><circle cx="670.1" cy="99.9" r="1.9" fill="rgb(216, 200, 8)"/><circle cx="657.8" cy="97.5" r="2.1" fill="rgb(151, 140, 5)"/><circle cx="663.8" cy="103.5" r="1.6" fill="rgb(231, 222, 106)"/><circle cx="665.7" cy="102.9" r="2.4" fill="rgb(216, 200, 8)"/><circle cx="672.1" cy="108.9" r="2.7" fill="rgb(216, 200, 8)"/><circle cx="665.8" cy="102.9" r="1.7" fill="rgb(231, 222, 106)"/><circle cx="665.1" cy="99.6" r="2.5" fill="rgb(216, 200, 8)"/><circle cx="663.5" cy="94.2" r="1.4" fill="rgb(231, 222, 106)"/><circle cx="660.2" cy="97.1" r="2.8" fill="rgb(216, 200, 8)"/><circle cx="665.2" cy="111.8" r="1.3" fill="rgb(231, 222, 106)"/><circle cx="672.4" cy="103.1" r="1.4" fill="rgb(231, 222, 106)"/><circle cx="662.5" cy="109.6" r="2.7" fill="rgb(216, 200, 8)"/><circle cx="664.1" cy="102.6" r="2.2" fill="rgb(216, 200, 8)"/><circle cx="658.7" cy="105.2" r="2.6" fill="rgb(216, 200, 8)"/><circle cx="660.8" cy="107.8" r="2.0" fill="rgb(231, 222, 106)"/><circle cx="659.4" cy="107.8" r="2.6" fill="rgb(151, 140, 5)"/><circle cx="661.7" cy="100.9" r="2.9" fill="rgb(216, 200, 8)"/><circle cx="663.0" cy="94.5" r="2.3" fill="rgb(216, 200, 8)"/><circle cx="673.7" cy="101.3" r="1.8" fill="rgb(231, 222, 106)"/><circle cx="657.5" cy="106.3" r="2.4" fill="rgb(216, 200, 8)"/><circle cx="658.3" cy="97.3" r="1.8" fill="rgb(231, 222, 106)"/><circle cx="669.1" cy="102.5" r="2.2" fill="rgb(216, 200, 8)"/><circle cx="668.9" cy="94.5" r="2.6" fill="rgb(216, 200, 8)"/><circle cx="656.2" cy="80.2" r="1.7" fill="rgb(224, 120, 8)"/><circle cx="657.8" cy="81.6" r="2.8" fill="rgb(236, 174, 106)"/><circle cx="651.9" cy="89.6" r="2.6" fill="rgb(224, 120, 8)"/><circle cx="655.3" cy="95.6" r="1.7" fill="rgb(156, 84, 5)"/><circle cx="647.2" cy="83.7" r="1.6" fill="rgb(224, 120, 8)"/><circle cx="652.7" cy="96.0" r="2.0" fill="rgb(236, 174, 106)"/><circle cx="659.9" cy="92.5" r="1.7" fill="rgb(236, 174, 106)"/><circle cx="645.2" cy="84.0" r="2.1" fill="rgb(156, 84, 5)"/><circle cx="646.4" cy="89.2" r="1.6" fill="rgb(224, 120, 8)"/><circle cx="656.0" cy="94.9" r="2.2" fill="rgb(224, 120, 8)"/><circle cx="648.0" cy="91.6" r="1.4" fill="rgb(224, 120, 8)"/><circle cx="657.7" cy="88.1" r="2.3" fill="rgb(224, 120, 8)"/><circle cx="653.5" cy="85.7" r="1.9" fill="rgb(224, 120, 8)"/><circle cx="652.3" cy="88.1" r="2.9" fill="rgb(224, 120, 8)"/><circle cx="656.7" cy="83.9" r="1.7" fill="rgb(224, 120, 8)"/><circle cx="653.9" cy="83.1" r="2.5" fill="rgb(156, 84, 5)"/><circle cx="656.8" cy="79.8" r="1.4" fill="rgb(224, 120, 8)"/><circle cx="653.8" cy="90.9" r="1.4" fill="rgb(224, 120, 8)"/><circle cx="644.8" cy="85.2" r="2.8" fill="rgb(224, 120, 8)"/><circle cx="654.1" cy="87.5" r="1.9" fill="rgb(224, 120, 8)"/><circle cx="659.6" cy="94.5" r="2.2" fill="rgb(224, 120, 8)"/><circle cx="647.1" cy="81.1" r="1.9" fill="rgb(236, 174, 106)"/><circle cx="650.4" cy="89.0" r="2.9" fill="rgb(156, 84, 5)"/><circle cx="653.1" cy="89.2" r="1.9" fill="rgb(224, 120, 8)"/><circle cx="660.2" cy="83.1" r="1.4" fill="rgb(236, 174, 106)"/><circle cx="654.6" cy="80.9" r="2.9" fill="rgb(236, 174, 106)"/><circle cx="655.2" cy="89.0" r="2.8" fill="rgb(236, 174, 106)"/><circle cx="651.1" cy="84.5" r="2.5" fill="rgb(224, 120, 8)"/><circle cx="656.3" cy="90.9" r="1.5" fill="rgb(224, 120, 8)"/><circle cx="650.2" cy="88.5" r="1.5" fill="rgb(224, 120, 8)"/><circle cx="652.7" cy="87.8" r="1.6" fill="rgb(236, 174, 106)"/><circle cx="661.7" cy="90.2" r="2.8" fill="rgb(224, 120, 8)"/><circle cx="658.8" cy="81.7" r="2.0" fill="rgb(224, 120, 8)"/><circle cx="660.3" cy="93.4" r="2.3" fill="rgb(236, 174, 106)"/><circle cx="648.6" cy="89.5" r="2.1" fill="rgb(236, 174, 106)"/><circle cx="651.2" cy="86.4" r="1.4" fill="rgb(224, 120, 8)"/><circle cx="651.5" cy="82.1" r="2.7" fill="rgb(224, 120, 8)"/><circle cx="652.4" cy="93.3" r="1.7" fill="rgb(224, 120, 8)"/><circle cx="655.3" cy="84.5" r="2.1" fill="rgb(224, 120, 8)"/><circle cx="649.2" cy="96.2" r="2.9" fill="rgb(224, 120, 8)"/><circle cx="661.1" cy="91.3" r="1.6" fill="rgb(236, 174, 106)"/><circle cx="649.0" cy="88.8" r="1.6" fill="rgb(224, 120, 8)"/><circle cx="646.7" cy="95.3" r="2.8" fill="rgb(156, 84, 5)"/><circle cx="656.2" cy="90.5" r="1.4" fill="rgb(156, 84, 5)"/><circle cx="652.3" cy="84.2" r="1.3" fill="rgb(156, 84, 5)"/><circle cx="654.5" cy="84.0" r="1.3" fill="rgb(224, 120, 8)"/><circle cx="655.9" cy="82.9" r="2.0" fill="rgb(224, 120, 8)"/><circle cx="655.7" cy="86.5" r="1.5" fill="rgb(224, 120, 8)"/><circle cx="656.3" cy="95.4" r="1.6" fill="rgb(236, 174, 106)"/><circle cx="654.4" cy="89.0" r="2.1" fill="rgb(236, 174, 106)"/><circle cx="652.4" cy="91.3" r="2.4" fill="rgb(236, 174, 106)"/><circle cx="655.4" cy="82.2" r="1.4" fill="rgb(224, 120, 8)"/><circle cx="652.3" cy="83.2" r="1.4" fill="rgb(236, 174, 106)"/><circle cx="654.5" cy="84.1" r="2.7" fill="rgb(236, 174, 106)"/><circle cx="652.4" cy="88.2" r="2.1" fill="rgb(156, 84, 5)"/><circle cx="655.5" cy="85.5" r="2.6" fill="rgb(224, 120, 8)"/><circle cx="651.1" cy="90.2" r="2.3" fill="rgb(224, 120, 8)"/><circle cx="658.9" cy="88.4" r="2.1" fill="rgb(224, 120, 8)"/><circle cx="658.3" cy="93.4" r="2.7" fill="rgb(236, 174, 106)"/><circle cx="649.7" cy="95.0" r="2.5" fill="rgb(224, 120, 8)"/><circle cx="660.9" cy="91.4" r="2.1" fill="rgb(156, 84, 5)"/><circle cx="646.8" cy="87.7" r="1.3" fill="rgb(224, 120, 8)"/><circle cx="656.2" cy="87.5" r="1.5" fill="rgb(224, 120, 8)"/><circle cx="652.9" cy="96.4" r="1.5" fill="rgb(224, 120, 8)"/><circle cx="651.9" cy="85.3" r="2.3" fill="rgb(224, 120, 8)"/><circle cx="647.5" cy="85.4" r="1.5" fill="rgb(236, 174, 106)"/><circle cx="658.0" cy="82.7" r="1.5" fill="rgb(224, 120, 8)"/><circle cx="647.1" cy="88.4" r="1.5" fill="rgb(224, 120, 8)"/><circle cx="650.9" cy="89.5" r="2.7" fill="rgb(224, 120, 8)"/><circle cx="656.8" cy="93.3" r="1.6" fill="rgb(236, 174, 106)"/></svg>
<div class="t" style="left:22.2px;top:184.5px;font-size:26px;color:#000;font-weight:400;letter-spacing:0.26px;">Model file:</div>
<div style="position:absolute;left:166px;top:178px;width:800px;height:44px;box-sizing:border-box;background:#fff;border:2px solid #fafafa;box-shadow:inset 0 0 0 1px #d4d4d4;"></div>
<div class="t" style="left:174.9px;top:188.6px;font-size:26px;color:#b9b9b9;font-weight:400;letter-spacing:1.046px;">/Users/bkpoon/projects/test/5h8k.pdb</div>
<div style="position:absolute;left:977.5px;top:181px;width:165px;height:39.5px;box-sizing:border-box;background:#f3f3f3;border:1px solid #d9d9d9;border-bottom-color:#c9c9c9;border-radius:6px;"></div>
<div class="t" style="left:1003.3px;top:186.5px;font-size:26px;color:#b3b3b3;font-weight:400;letter-spacing:0.613px;">Browse...</div>
<div style="position:absolute;left:1155.5px;top:181px;width:45px;height:39.5px;box-sizing:border-box;background:#f3f3f3;border:1px solid #d9d9d9;border-bottom-color:#c9c9c9;border-radius:6px;"></div>
<svg style="position:absolute;left:1155px;top:181px" width="46" height="40" viewBox="1155 181 46 40">
<rect x="1166.5" y="188.5" width="14.5" height="17" rx="5" ry="5" fill="#f4f8fb" stroke="#b9b9b9" stroke-width="1.4"/>
<path d="M1179 204 L1189 215" stroke="#858585" stroke-width="2.2" stroke-linecap="round"/>
</svg>
<div style="position:absolute;left:0px;top:244px;width:2400px;height:2px;background:#dedede;"></div>
<div style="position:absolute;left:0px;top:244px;width:2px;height:46px;background:#dedede;"></div>
<div style="position:absolute;left:0px;top:288px;width:2400px;height:4px;background:#dbdbdb;"></div>
<div style="position:absolute;left:0px;top:292px;width:2400px;height:2px;background:#f8f8f8;"></div>
<div style="position:absolute;left:0px;top:294px;width:2400px;height:2px;background:#e3e3e3;"></div>
<div style="position:absolute;left:0px;top:294px;width:2px;height:44px;background:#e0e0e0;"></div>
<div style="position:absolute;left:592px;top:250px;width:251px;height:38px;box-sizing:border-box;background:#fff;border:2px solid #dcdcdc;border-bottom:none;border-radius:4px 4px 0 0;"></div>
<div style="position:absolute;left:592px;top:288px;width:251px;height:4px;background:#eeeeee;"></div>
<div class="t" style="left:28.0px;top:262.8px;font-size:22px;color:#222;font-weight:400;letter-spacing:0.68px;-webkit-text-stroke:0.35px #222;">Custom Geometry Restraints</div>
<div style="position:absolute;left:347px;top:252px;width:2px;height:30px;background:#dadada;"></div>
<div class="t" style="left:362.6px;top:262.8px;font-size:22px;color:#222;font-weight:400;letter-spacing:0.8px;-webkit-text-stroke:0.35px #222;">Refinement Strategy</div>
<div class="t" style="left:609.5px;top:262.8px;font-size:22px;color:#111;font-weight:400;letter-spacing:1.306px;-webkit-text-stroke:0.8px #111;">Secondary Structure</div>
<div style="position:absolute;left:0px;top:338px;width:2400px;height:4px;background:#dadada;"></div>
<div style="position:absolute;left:0px;top:342px;width:2400px;height:2px;background:#f8f8f8;"></div>
<div style="position:absolute;left:114px;top:300px;width:158px;height:38px;box-sizing:border-box;background:#fff;border:2px solid #dcdcdc;border-bottom:none;border-radius:4px 4px 0 0;"></div>
<div style="position:absolute;left:114px;top:338px;width:158px;height:4px;background:#eeeeee;"></div>
<div class="t" style="left:27.3px;top:312.8px;font-size:22px;color:#222;font-weight:400;letter-spacing:0.883px;-webkit-text-stroke:0.35px #222;">Helices</div>
<div class="t" style="left:132.3px;top:312.8px;font-size:22px;color:#111;font-weight:400;letter-spacing:0.79px;-webkit-text-stroke:0.9px #111;">Beta Sheets</div>
<div class="t" style="left:285.0px;top:312.8px;font-size:22px;color:#222;font-weight:400;letter-spacing:0.278px;-webkit-text-stroke:0.35px #222;">Base Pairs</div>
<div style="position:absolute;left:406px;top:302px;width:2px;height:30px;background:#dadada;"></div>
<div class="t" style="left:421.8px;top:312.8px;font-size:22px;color:#222;font-weight:400;letter-spacing:0.608px;-webkit-text-stroke:0.35px #222;">Stacking Pairs</div>
<div style="position:absolute;left:583px;top:302px;width:2px;height:30px;background:#dadada;"></div>
<div style="position:absolute;left:16px;top:358px;width:460px;height:1224px;box-sizing:border-box;background:#e2e2e2;border:1px solid #dcdcdc;border-radius:9px;"></div>
<div style="position:absolute;left:43px;top:387px;width:354px;height:40px;box-sizing:border-box;background:#f5f5f5;border:1px solid #bdbdbd;border-bottom-color:#a8a8a8;border-radius:6px;"></div>
<div class="t" style="left:57.5px;top:392.5px;font-size:26px;color:#1a1a1a;font-weight:400;letter-spacing:0.667px;">Find Secondary Structures</div>
<div style="position:absolute;left:43px;top:447px;width:166px;height:40px;box-sizing:border-box;background:#f5f5f5;border:1px solid #bdbdbd;border-bottom-color:#a8a8a8;border-radius:6px;"></div>
<div class="t" style="left:63.8px;top:452.5px;font-size:26px;color:#1a1a1a;font-weight:400;letter-spacing:0.412px;">Add Sheet</div>
<div style="position:absolute;left:251px;top:447px;width:198px;height:40px;box-sizing:border-box;background:#ebebeb;border:1px solid #d3d3d3;border-radius:6px;"></div>
<div class="t" style="left:271.2px;top:452.5px;font-size:26px;color:#b0b0b0;font-weight:400;letter-spacing:0.555px;">Delete Sheet</div>
<div style="position:absolute;left:43px;top:507px;width:166px;height:40px;box-sizing:border-box;background:#ebebeb;border:1px solid #d3d3d3;border-radius:6px;"></div>
<div class="t" style="left:59.1px;top:512.5px;font-size:26px;color:#b0b0b0;font-weight:400;letter-spacing:0.478px;">Add Strand</div>
<div style="position:absolute;left:251px;top:507px;width:198px;height:40px;box-sizing:border-box;background:#ebebeb;border:1px solid #d3d3d3;border-radius:6px;"></div>
<div class="t" style="left:265.4px;top:512.5px;font-size:26px;color:#b0b0b0;font-weight:400;letter-spacing:0.758px;">Delete Strand</div>
<div style="position:absolute;left:43px;top:567px;width:166px;height:40px;box-sizing:border-box;background:#f5f5f5;border:1px solid #bdbdbd;border-bottom-color:#a8a8a8;border-radius:6px;"></div>
<div class="t" style="left:61.8px;top:572.5px;font-size:26px;color:#1a1a1a;font-weight:400;letter-spacing:0.589px;">Expand All</div>
<div style="position:absolute;left:251px;top:567px;width:198px;height:40px;box-sizing:border-box;background:#f5f5f5;border:1px solid #bdbdbd;border-bottom-color:#a8a8a8;border-radius:6px;"></div>
<div class="t" style="left:278.5px;top:572.5px;font-size:26px;color:#1a1a1a;font-weight:400;letter-spacing:0.673px;">Collapse All</div>
<div style="position:absolute;left:32px;top:616px;width:428px;height:2px;background:#a0a0a0;"></div>
<div style="position:absolute;left:32px;top:618px;width:428px;height:1px;background:#f4f4f4;"></div>
<div class="t" style="left:45.8px;top:639.0px;font-size:26px;color:#000;font-weight:400;letter-spacing:0.057px;">Other settings:</div>
<div class="t" style="left:45.8px;top:696.8px;font-size:26px;color:#c6c6c6;font-weight:400;letter-spacing:-0.72px;">Sense:</div>
<div style="position:absolute;left:157.5px;top:688.5px;width:217px;height:39px;box-sizing:border-box;background:#f1f1f1;border:1px solid #d3d3d3;border-bottom-color:#c4c4c4;border-radius:6px;"></div>
<div class="t" style="left:172.3px;top:696.8px;font-size:26px;color:#7a7a7a;font-weight:400;letter-spacing:-0.017px;">unknown</div>
<svg style="position:absolute;left:340px;top:690px" width="34" height="36" viewBox="340 690 34 36">
<path d="M351.6 704 L358.7 697 L365.6 704" fill="none" stroke="#8a8a8a" stroke-width="2.8" stroke-linecap="round" stroke-linejoin="round"/>
<path d="M351.6 712.3 L358.7 719 L365.6 712.3" fill="none" stroke="#8a8a8a" stroke-width="2.8" stroke-linecap="round" stroke-linejoin="round"/>
</svg>
<div class="t" style="left:45.8px;top:756.8px;font-size:26px;color:#c6c6c6;font-weight:400;letter-spacing:-0.64px;">Sigma:</div>
<div style="position:absolute;left:159px;top:749px;width:216px;height:42px;box-sizing:border-box;background:#fff;border:1px solid #c9c9c9;"></div>
<div class="t" style="left:53.8px;top:820.3px;font-size:26px;color:#c6c6c6;font-weight:400;letter-spacing:-0.32px;">Slack:</div>
<div style="position:absolute;left:159px;top:813px;width:216px;height:42px;box-sizing:border-box;background:#fff;border:1px solid #c9c9c9;"></div>
<div style="position:absolute;left:46px;top:880px;width:27px;height:28px;box-sizing:border-box;background:#efefef;border:1px solid #cfcfcf;border-radius:5px;"></div>
<div class="t" style="left:81.3px;top:880.3px;font-size:26px;color:#ababab;font-weight:400;letter-spacing:0.367px;">Enabled</div>
<div style="position:absolute;left:228px;top:880px;width:27px;height:28px;box-sizing:border-box;background:#efefef;border:1px solid #cfcfcf;border-radius:5px;"></div>
<div class="t" style="left:264.3px;top:880.3px;font-size:26px;color:#ababab;font-weight:400;letter-spacing:0.95px;">Top out</div>
<div style="position:absolute;left:504px;top:353.5px;width:1886px;height:1.5px;background:#d3d3d3;"></div>
<div style="position:absolute;left:504px;top:355px;width:1886px;height:32px;background:#f5f5f5;"></div>
<div style="position:absolute;left:504px;top:386.5px;width:1886px;height:1.5px;background:#cdcdcd;"></div>
<div style="position:absolute;left:502px;top:388px;width:1859px;height:1202px;background:#fff;"></div>
<div style="position:absolute;left:502px;top:388px;width:1859px;height:1px;background:#f2f2f2;"></div>
<div style="position:absolute;left:2361px;top:388px;width:27px;height:1202px;background:#f9f9f9;"></div>
<div style="position:absolute;left:504px;top:360px;width:2px;height:22px;background:#d9d9d9;"></div>
<div style="position:absolute;left:652px;top:360px;width:4px;height:22px;background:#d9d9d9;"></div>
<div style="position:absolute;left:1152px;top:360px;width:4px;height:22px;background:#d9d9d9;"></div>
<div style="position:absolute;left:1352px;top:360px;width:4px;height:22px;background:#d9d9d9;"></div>
<div style="position:absolute;left:1852px;top:360px;width:4px;height:22px;background:#d9d9d9;"></div>
<div style="position:absolute;left:2352px;top:360px;width:4px;height:22px;background:#d9d9d9;"></div>
<div style="position:absolute;left:2388px;top:360px;width:2px;height:22px;background:#d9d9d9;"></div>
<div style="position:absolute;left:649.5px;top:388px;width:2px;height:1202px;background:#d6d6d6;"></div>
<div style="position:absolute;left:1149.5px;top:388px;width:2px;height:1202px;background:#d6d6d6;"></div>
<div style="position:absolute;left:1349.5px;top:388px;width:2px;height:1202px;background:#d6d6d6;"></div>
<div style="position:absolute;left:1849.5px;top:388px;width:2px;height:1202px;background:#d6d6d6;"></div>
<div style="position:absolute;left:2349.5px;top:388px;width:2px;height:1202px;background:#d6d6d6;"></div>
<div style="position:absolute;left:2360px;top:388px;width:2px;height:1202px;background:#e6e6e6;"></div>
<div style="position:absolute;left:2368px;top:396px;width:16px;height:130px;background:#c1c1c1;border-radius:8px;"></div>
<div class="t" style="left:513.3px;top:355.6px;font-size:27px;color:#000;font-weight:400;letter-spacing:-0.9px;">ID</div>
<div class="t" style="left:663.7px;top:355.6px;font-size:27px;color:#000;font-weight:400;letter-spacing:0.35px;">Selection</div>
<div class="t" style="left:1163.8px;top:355.6px;font-size:27px;color:#000;font-weight:400;letter-spacing:-0.325px;">Sense</div>
<div class="t" style="left:1362.6px;top:355.6px;font-size:27px;color:#000;font-weight:400;letter-spacing:0.267px;">Bond Start</div>
<div class="t" style="left:1863.3px;top:355.6px;font-size:27px;color:#000;font-weight:400;letter-spacing:-0.143px;">Bond End</div>
<svg style="position:absolute;left:511px;top:405.0px" width="20" height="16"><path d="M1 1 L19 1 L10 15 Z" fill="#8c8c8c"/></svg>
<div class="t" style="left:540.3px;top:399.1px;font-size:26px;color:#000;font-weight:400;letter-spacing:0px;transform:scaleX(0.91);transform-origin:0.5px 0;">A</div>
<div class="t" style="left:557.3px;top:399.1px;font-size:26px;color:#000;font-weight:400;letter-spacing:0px;transform:scaleX(0.91);transform-origin:0.5px 0;">A</div>
<svg style="position:absolute;left:573.80px;top:401.60px" width="11" height="21" viewBox="-1 -20 11 21"><path d="M4.75 -19.1 H7.4 V0 H4.75 V-15.7 L1.1 -12.8 L0 -14.9 Z" fill="#000"/></svg><div class="t" style="left:656.0px;top:399.1px;font-size:26.5px;color:#000;font-weight:400;letter-spacing:0.425px;">chain</div>
<div class="t" style="left:729.0px;top:399.1px;font-size:26.5px;color:#000;font-weight:400;letter-spacing:-1.55px;">'A'</div>
<div class="t" style="left:761.7px;top:399.1px;font-size:26.5px;color:#000;font-weight:400;letter-spacing:0.25px;">and</div>
<div class="t" style="left:813.5px;top:399.1px;font-size:26.5px;color:#000;font-weight:400;letter-spacing:0.55px;">resid</div>
<div class="t" style="left:881.4px;top:399.1px;font-size:26.5px;color:#000;font-weight:400;letter-spacing:0px;transform:scaleX(1.05);transform-origin:7.4px 0;">4</div>
<div class="t" style="left:897.0px;top:399.1px;font-size:26.5px;color:#000;font-weight:400;letter-spacing:0px;transform:scaleX(1.05);transform-origin:7.4px 0;">3</div>
<div class="t" style="left:921.1px;top:399.1px;font-size:26.5px;color:#000;font-weight:400;letter-spacing:0.817px;">through</div>
<div class="t" style="left:1023.1px;top:399.1px;font-size:26.5px;color:#000;font-weight:400;letter-spacing:0px;transform:scaleX(1.05);transform-origin:7.4px 0;">4</div>
<div class="t" style="left:1038.8px;top:399.1px;font-size:26.5px;color:#000;font-weight:400;letter-spacing:0px;transform:scaleX(1.05);transform-origin:7.4px 0;">5</div>
<div class="t" style="left:656.0px;top:443.1px;font-size:26.5px;color:#000;font-weight:400;letter-spacing:0.425px;">chain</div>
<div class="t" style="left:729.0px;top:443.1px;font-size:26.5px;color:#000;font-weight:400;letter-spacing:-1.55px;">'A'</div>
<div class="t" style="left:761.7px;top:443.1px;font-size:26.5px;color:#000;font-weight:400;letter-spacing:0.25px;">and</div>
<div class="t" style="left:813.5px;top:443.1px;font-size:26.5px;color:#000;font-weight:400;letter-spacing:0.55px;">resid</div>
<div class="t" style="left:881.4px;top:443.1px;font-size:26.5px;color:#000;font-weight:400;letter-spacing:0px;transform:scaleX(1.05);transform-origin:7.4px 0;">8</div>
<div class="t" style="left:905.5px;top:443.1px;font-size:26.5px;color:#000;font-weight:400;letter-spacing:0.817px;">through</div>
<svg style="position:absolute;left:1007.25px;top:446.10px" width="11" height="21" viewBox="-1 -20 11 21"><path d="M4.75 -19.1 H7.4 V0 H4.75 V-15.7 L1.1 -12.8 L0 -14.9 Z" fill="#000"/></svg><div class="t" style="left:1019.5px;top:443.1px;font-size:26.5px;color:#000;font-weight:400;letter-spacing:0px;transform:scaleX(1.05);transform-origin:7.4px 0;">5</div>
<div class="t" style="left:1155.0px;top:443.1px;font-size:26.5px;color:#000;font-weight:400;letter-spacing:0.4px;">parallel</div>
<div class="t" style="left:1356.2px;top:443.1px;font-size:26.5px;color:#000;font-weight:400;letter-spacing:0.425px;">chain</div>
<div class="t" style="left:1429.2px;top:443.1px;font-size:26.5px;color:#000;font-weight:400;letter-spacing:-1.55px;">'A'</div>
<div class="t" style="left:1461.9px;top:443.1px;font-size:26.5px;color:#000;font-weight:400;letter-spacing:0.25px;">and</div>
<div class="t" style="left:1513.8px;top:443.1px;font-size:26.5px;color:#000;font-weight:400;letter-spacing:0.55px;">resid</div>
<svg style="position:absolute;left:1581.35px;top:446.10px" width="11" height="21" viewBox="-1 -20 11 21"><path d="M4.75 -19.1 H7.4 V0 H4.75 V-15.7 L1.1 -12.8 L0 -14.9 Z" fill="#000"/></svg><div class="t" style="left:1593.7px;top:443.1px;font-size:26.5px;color:#000;font-weight:400;letter-spacing:0px;transform:scaleX(1.05);transform-origin:7.4px 0;">2</div>
<div class="t" style="left:1616.8px;top:443.1px;font-size:26.5px;color:#000;font-weight:400;letter-spacing:0.25px;">and</div>
<div class="t" style="left:1668.6px;top:443.1px;font-size:26.5px;color:#000;font-weight:400;letter-spacing:0.333px;">name</div>
<div class="t" style="left:1742.0px;top:443.1px;font-size:26.5px;color:#000;font-weight:400;letter-spacing:0px;">N</div>
<div class="t" style="left:1856.2px;top:443.1px;font-size:26.5px;color:#000;font-weight:400;letter-spacing:0.425px;">chain</div>
<div class="t" style="left:1929.2px;top:443.1px;font-size:26.5px;color:#000;font-weight:400;letter-spacing:-1.55px;">'A'</div>
<div class="t" style="left:1961.9px;top:443.1px;font-size:26.5px;color:#000;font-weight:400;letter-spacing:0.25px;">and</div>
<div class="t" style="left:2013.8px;top:443.1px;font-size:26.5px;color:#000;font-weight:400;letter-spacing:0.55px;">resid</div>
<div class="t" style="left:2081.7px;top:443.1px;font-size:26.5px;color:#000;font-weight:400;letter-spacing:0px;transform:scaleX(1.05);transform-origin:7.4px 0;">4</div>
<div class="t" style="left:2097.2px;top:443.1px;font-size:26.5px;color:#000;font-weight:400;letter-spacing:0px;transform:scaleX(1.05);transform-origin:7.4px 0;">5</div>
<div class="t" style="left:2120.3px;top:443.1px;font-size:26.5px;color:#000;font-weight:400;letter-spacing:0.25px;">and</div>
<div class="t" style="left:2172.2px;top:443.1px;font-size:26.5px;color:#000;font-weight:400;letter-spacing:0.333px;">name</div>
<div class="t" style="left:2246.6px;top:443.1px;font-size:26.5px;color:#000;font-weight:400;letter-spacing:0px;">O</div>
<div class="t" style="left:656.0px;top:487.1px;font-size:26.5px;color:#000;font-weight:400;letter-spacing:0.425px;">chain</div>
<div class="t" style="left:729.0px;top:487.1px;font-size:26.5px;color:#000;font-weight:400;letter-spacing:-1.55px;">'A'</div>
<div class="t" style="left:761.7px;top:487.1px;font-size:26.5px;color:#000;font-weight:400;letter-spacing:0.25px;">and</div>
<div class="t" style="left:813.5px;top:487.1px;font-size:26.5px;color:#000;font-weight:400;letter-spacing:0.55px;">resid</div>
<div class="t" style="left:881.4px;top:487.1px;font-size:26.5px;color:#000;font-weight:400;letter-spacing:0px;transform:scaleX(1.05);transform-origin:7.4px 0;">2</div>
<div class="t" style="left:897.0px;top:487.1px;font-size:26.5px;color:#000;font-weight:400;letter-spacing:0px;transform:scaleX(1.05);transform-origin:7.4px 0;">5</div>
<div class="t" style="left:912.6px;top:487.1px;font-size:26.5px;color:#000;font-weight:400;letter-spacing:0px;transform:scaleX(1.05);transform-origin:7.4px 0;">9</div>
<div class="t" style="left:936.8px;top:487.1px;font-size:26.5px;color:#000;font-weight:400;letter-spacing:0.817px;">through</div>
<div class="t" style="left:1038.8px;top:487.1px;font-size:26.5px;color:#000;font-weight:400;letter-spacing:0px;transform:scaleX(1.05);transform-origin:7.4px 0;">2</div>
<div class="t" style="left:1054.3px;top:487.1px;font-size:26.5px;color:#000;font-weight:400;letter-spacing:0px;transform:scaleX(1.05);transform-origin:7.4px 0;">6</div>
<div class="t" style="left:1069.9px;top:487.1px;font-size:26.5px;color:#000;font-weight:400;letter-spacing:0px;transform:scaleX(1.05);transform-origin:7.4px 0;">6</div>
<div class="t" style="left:1156.0px;top:487.1px;font-size:26.5px;color:#000;font-weight:400;letter-spacing:0.527px;">antiparallel</div>
<div class="t" style="left:1356.2px;top:487.1px;font-size:26.5px;color:#000;font-weight:400;letter-spacing:0.425px;">chain</div>
<div class="t" style="left:1429.2px;top:487.1px;font-size:26.5px;color:#000;font-weight:400;letter-spacing:-1.55px;">'A'</div>
<div class="t" style="left:1461.9px;top:487.1px;font-size:26.5px;color:#000;font-weight:400;letter-spacing:0.25px;">and</div>
<div class="t" style="left:1513.8px;top:487.1px;font-size:26.5px;color:#000;font-weight:400;letter-spacing:0.55px;">resid</div>
<div class="t" style="left:1581.6px;top:487.1px;font-size:26.5px;color:#000;font-weight:400;letter-spacing:0px;transform:scaleX(1.05);transform-origin:7.4px 0;">2</div>
<div class="t" style="left:1597.2px;top:487.1px;font-size:26.5px;color:#000;font-weight:400;letter-spacing:0px;transform:scaleX(1.05);transform-origin:7.4px 0;">6</div>
<div class="t" style="left:1612.8px;top:487.1px;font-size:26.5px;color:#000;font-weight:400;letter-spacing:0px;transform:scaleX(1.05);transform-origin:7.4px 0;">5</div>
<div class="t" style="left:1636.0px;top:487.1px;font-size:26.5px;color:#000;font-weight:400;letter-spacing:0.25px;">and</div>
<div class="t" style="left:1687.8px;top:487.1px;font-size:26.5px;color:#000;font-weight:400;letter-spacing:0.333px;">name</div>
<div class="t" style="left:1762.2px;top:487.1px;font-size:26.5px;color:#000;font-weight:400;letter-spacing:0px;">O</div>
<div class="t" style="left:1856.2px;top:487.1px;font-size:26.5px;color:#000;font-weight:400;letter-spacing:0.425px;">chain</div>
<div class="t" style="left:1929.2px;top:487.1px;font-size:26.5px;color:#000;font-weight:400;letter-spacing:-1.55px;">'A'</div>
<div class="t" style="left:1961.9px;top:487.1px;font-size:26.5px;color:#000;font-weight:400;letter-spacing:0.25px;">and</div>
<div class="t" style="left:2013.8px;top:487.1px;font-size:26.5px;color:#000;font-weight:400;letter-spacing:0.55px;">resid</div>
<div class="t" style="left:2081.7px;top:487.1px;font-size:26.5px;color:#000;font-weight:400;letter-spacing:0px;transform:scaleX(1.05);transform-origin:7.4px 0;">9</div>
<div class="t" style="left:2104.8px;top:487.1px;font-size:26.5px;color:#000;font-weight:400;letter-spacing:0.25px;">and</div>
<div class="t" style="left:2156.6px;top:487.1px;font-size:26.5px;color:#000;font-weight:400;letter-spacing:0.333px;">name</div>
<div class="t" style="left:2230.0px;top:487.1px;font-size:26.5px;color:#000;font-weight:400;letter-spacing:0px;">N</div>
<svg style="position:absolute;left:511px;top:537.0px" width="20" height="16"><path d="M1 1 L19 1 L10 15 Z" fill="#8c8c8c"/></svg>
<div class="t" style="left:540.3px;top:531.1px;font-size:26px;color:#000;font-weight:400;letter-spacing:0px;transform:scaleX(0.91);transform-origin:0.5px 0;">A</div>
<div class="t" style="left:557.3px;top:531.1px;font-size:26px;color:#000;font-weight:400;letter-spacing:0px;transform:scaleX(0.91);transform-origin:0.5px 0;">A</div>
<div class="t" style="left:575.1px;top:530.6px;font-size:26.5px;color:#000;font-weight:400;letter-spacing:0px;transform:scaleX(1.05);transform-origin:7.4px 0;">2</div>
<div class="t" style="left:656.0px;top:531.1px;font-size:26.5px;color:#000;font-weight:400;letter-spacing:0.425px;">chain</div>
<div class="t" style="left:729.0px;top:531.1px;font-size:26.5px;color:#000;font-weight:400;letter-spacing:-1.55px;">'A'</div>
<div class="t" style="left:761.7px;top:531.1px;font-size:26.5px;color:#000;font-weight:400;letter-spacing:0.25px;">and</div>
<div class="t" style="left:813.5px;top:531.1px;font-size:26.5px;color:#000;font-weight:400;letter-spacing:0.55px;">resid</div>
<div class="t" style="left:881.4px;top:531.1px;font-size:26.5px;color:#000;font-weight:400;letter-spacing:0px;transform:scaleX(1.05);transform-origin:7.4px 0;">6</div>
<div class="t" style="left:897.0px;top:531.1px;font-size:26.5px;color:#000;font-weight:400;letter-spacing:0px;transform:scaleX(1.05);transform-origin:7.4px 0;">8</div>
<div class="t" style="left:921.1px;top:531.1px;font-size:26.5px;color:#000;font-weight:400;letter-spacing:0.817px;">through</div>
<div class="t" style="left:1023.1px;top:531.1px;font-size:26.5px;color:#000;font-weight:400;letter-spacing:0px;transform:scaleX(1.05);transform-origin:7.4px 0;">6</div>
<div class="t" style="left:1038.8px;top:531.1px;font-size:26.5px;color:#000;font-weight:400;letter-spacing:0px;transform:scaleX(1.05);transform-origin:7.4px 0;">9</div>
<div class="t" style="left:656.0px;top:575.1px;font-size:26.5px;color:#000;font-weight:400;letter-spacing:0.425px;">chain</div>
<div class="t" style="left:729.0px;top:575.1px;font-size:26.5px;color:#000;font-weight:400;letter-spacing:-1.55px;">'A'</div>
<div class="t" style="left:761.7px;top:575.1px;font-size:26.5px;color:#000;font-weight:400;letter-spacing:0.25px;">and</div>
<div class="t" style="left:813.5px;top:575.1px;font-size:26.5px;color:#000;font-weight:400;letter-spacing:0.55px;">resid</div>
<div class="t" style="left:881.4px;top:575.1px;font-size:26.5px;color:#000;font-weight:400;letter-spacing:0px;transform:scaleX(1.05);transform-origin:7.4px 0;">9</div>
<div class="t" style="left:897.0px;top:575.1px;font-size:26.5px;color:#000;font-weight:400;letter-spacing:0px;transform:scaleX(1.05);transform-origin:7.4px 0;">0</div>
<div class="t" style="left:921.1px;top:575.1px;font-size:26.5px;color:#000;font-weight:400;letter-spacing:0.817px;">through</div>
<div class="t" style="left:1023.1px;top:575.1px;font-size:26.5px;color:#000;font-weight:400;letter-spacing:0px;transform:scaleX(1.05);transform-origin:7.4px 0;">9</div>
<div class="t" style="left:1038.8px;top:575.1px;font-size:26.5px;color:#000;font-weight:400;letter-spacing:0px;transform:scaleX(1.05);transform-origin:7.4px 0;">8</div>
<div class="t" style="left:1155.0px;top:575.1px;font-size:26.5px;color:#000;font-weight:400;letter-spacing:0.4px;">parallel</div>
<div class="t" style="left:1356.2px;top:575.1px;font-size:26.5px;color:#000;font-weight:400;letter-spacing:0.425px;">chain</div>
<div class="t" style="left:1429.2px;top:575.1px;font-size:26.5px;color:#000;font-weight:400;letter-spacing:-1.55px;">'A'</div>
<div class="t" style="left:1461.9px;top:575.1px;font-size:26.5px;color:#000;font-weight:400;letter-spacing:0.25px;">and</div>
<div class="t" style="left:1513.8px;top:575.1px;font-size:26.5px;color:#000;font-weight:400;letter-spacing:0.55px;">resid</div>
<div class="t" style="left:1581.6px;top:575.1px;font-size:26.5px;color:#000;font-weight:400;letter-spacing:0px;transform:scaleX(1.05);transform-origin:7.4px 0;">9</div>
<div class="t" style="left:1597.2px;top:575.1px;font-size:26.5px;color:#000;font-weight:400;letter-spacing:0px;transform:scaleX(1.05);transform-origin:7.4px 0;">7</div>
<div class="t" style="left:1620.4px;top:575.1px;font-size:26.5px;color:#000;font-weight:400;letter-spacing:0.25px;">and</div>
<div class="t" style="left:1672.2px;top:575.1px;font-size:26.5px;color:#000;font-weight:400;letter-spacing:0.333px;">name</div>
<div class="t" style="left:1746.6px;top:575.1px;font-size:26.5px;color:#000;font-weight:400;letter-spacing:0px;">O</div>
<div class="t" style="left:1856.2px;top:575.1px;font-size:26.5px;color:#000;font-weight:400;letter-spacing:0.425px;">chain</div>
<div class="t" style="left:1929.2px;top:575.1px;font-size:26.5px;color:#000;font-weight:400;letter-spacing:-1.55px;">'A'</div>
<div class="t" style="left:1961.9px;top:575.1px;font-size:26.5px;color:#000;font-weight:400;letter-spacing:0.25px;">and</div>
<div class="t" style="left:2013.8px;top:575.1px;font-size:26.5px;color:#000;font-weight:400;letter-spacing:0.55px;">resid</div>
<div class="t" style="left:2081.7px;top:575.1px;font-size:26.5px;color:#000;font-weight:400;letter-spacing:0px;transform:scaleX(1.05);transform-origin:7.4px 0;">6</div>
<div class="t" style="left:2097.2px;top:575.1px;font-size:26.5px;color:#000;font-weight:400;letter-spacing:0px;transform:scaleX(1.05);transform-origin:7.4px 0;">8</div>
<div class="t" style="left:2120.3px;top:575.1px;font-size:26.5px;color:#000;font-weight:400;letter-spacing:0.25px;">and</div>
<div class="t" style="left:2172.2px;top:575.1px;font-size:26.5px;color:#000;font-weight:400;letter-spacing:0.333px;">name</div>
<div class="t" style="left:2245.6px;top:575.1px;font-size:26.5px;color:#000;font-weight:400;letter-spacing:0px;">N</div>
<div class="t" style="left:656.0px;top:619.1px;font-size:26.5px;color:#000;font-weight:400;letter-spacing:0.425px;">chain</div>
<div class="t" style="left:729.0px;top:619.1px;font-size:26.5px;color:#000;font-weight:400;letter-spacing:-1.55px;">'A'</div>
<div class="t" style="left:761.7px;top:619.1px;font-size:26.5px;color:#000;font-weight:400;letter-spacing:0.25px;">and</div>
<div class="t" style="left:813.5px;top:619.1px;font-size:26.5px;color:#000;font-weight:400;letter-spacing:0.55px;">resid</div>
<svg style="position:absolute;left:881.15px;top:622.10px" width="11" height="21" viewBox="-1 -20 11 21"><path d="M4.75 -19.1 H7.4 V0 H4.75 V-15.7 L1.1 -12.8 L0 -14.9 Z" fill="#000"/></svg><div class="t" style="left:893.4px;top:619.1px;font-size:26.5px;color:#000;font-weight:400;letter-spacing:0px;transform:scaleX(1.05);transform-origin:7.4px 0;">0</div>
<svg style="position:absolute;left:908.75px;top:622.10px" width="11" height="21" viewBox="-1 -20 11 21"><path d="M4.75 -19.1 H7.4 V0 H4.75 V-15.7 L1.1 -12.8 L0 -14.9 Z" fill="#000"/></svg><div class="t" style="left:929.5px;top:619.1px;font-size:26.5px;color:#000;font-weight:400;letter-spacing:0.817px;">through</div>
<svg style="position:absolute;left:1031.25px;top:622.10px" width="11" height="21" viewBox="-1 -20 11 21"><path d="M4.75 -19.1 H7.4 V0 H4.75 V-15.7 L1.1 -12.8 L0 -14.9 Z" fill="#000"/></svg><div class="t" style="left:1043.5px;top:619.1px;font-size:26.5px;color:#000;font-weight:400;letter-spacing:0px;transform:scaleX(1.05);transform-origin:7.4px 0;">0</div>
<div class="t" style="left:1059.1px;top:619.1px;font-size:26.5px;color:#000;font-weight:400;letter-spacing:0px;transform:scaleX(1.05);transform-origin:7.4px 0;">9</div>
<div class="t" style="left:1156.0px;top:619.1px;font-size:26.5px;color:#000;font-weight:400;letter-spacing:0.527px;">antiparallel</div>
<div class="t" style="left:1356.2px;top:619.1px;font-size:26.5px;color:#000;font-weight:400;letter-spacing:0.425px;">chain</div>
<div class="t" style="left:1429.2px;top:619.1px;font-size:26.5px;color:#000;font-weight:400;letter-spacing:-1.55px;">'A'</div>
<div class="t" style="left:1461.9px;top:619.1px;font-size:26.5px;color:#000;font-weight:400;letter-spacing:0.25px;">and</div>
<div class="t" style="left:1513.8px;top:619.1px;font-size:26.5px;color:#000;font-weight:400;letter-spacing:0.55px;">resid</div>
<svg style="position:absolute;left:1581.35px;top:622.10px" width="11" height="21" viewBox="-1 -20 11 21"><path d="M4.75 -19.1 H7.4 V0 H4.75 V-15.7 L1.1 -12.8 L0 -14.9 Z" fill="#000"/></svg><div class="t" style="left:1593.7px;top:619.1px;font-size:26.5px;color:#000;font-weight:400;letter-spacing:0px;transform:scaleX(1.05);transform-origin:7.4px 0;">0</div>
<div class="t" style="left:1609.2px;top:619.1px;font-size:26.5px;color:#000;font-weight:400;letter-spacing:0px;transform:scaleX(1.05);transform-origin:7.4px 0;">7</div>
<div class="t" style="left:1632.4px;top:619.1px;font-size:26.5px;color:#000;font-weight:400;letter-spacing:0.25px;">and</div>
<div class="t" style="left:1684.2px;top:619.1px;font-size:26.5px;color:#000;font-weight:400;letter-spacing:0.333px;">name</div>
<div class="t" style="left:1758.6px;top:619.1px;font-size:26.5px;color:#000;font-weight:400;letter-spacing:0px;">O</div>
<div class="t" style="left:1856.2px;top:619.1px;font-size:26.5px;color:#000;font-weight:400;letter-spacing:0.425px;">chain</div>
<div class="t" style="left:1929.2px;top:619.1px;font-size:26.5px;color:#000;font-weight:400;letter-spacing:-1.55px;">'A'</div>
<div class="t" style="left:1961.9px;top:619.1px;font-size:26.5px;color:#000;font-weight:400;letter-spacing:0.25px;">and</div>
<div class="t" style="left:2013.8px;top:619.1px;font-size:26.5px;color:#000;font-weight:400;letter-spacing:0.55px;">resid</div>
<div class="t" style="left:2081.7px;top:619.1px;font-size:26.5px;color:#000;font-weight:400;letter-spacing:0px;transform:scaleX(1.05);transform-origin:7.4px 0;">9</div>
<div class="t" style="left:2097.2px;top:619.1px;font-size:26.5px;color:#000;font-weight:400;letter-spacing:0px;transform:scaleX(1.05);transform-origin:7.4px 0;">2</div>
<div class="t" style="left:2120.3px;top:619.1px;font-size:26.5px;color:#000;font-weight:400;letter-spacing:0.25px;">and</div>
<div class="t" style="left:2172.2px;top:619.1px;font-size:26.5px;color:#000;font-weight:400;letter-spacing:0.333px;">name</div>
<div class="t" style="left:2245.6px;top:619.1px;font-size:26.5px;color:#000;font-weight:400;letter-spacing:0px;">N</div>
<div class="t" style="left:656.0px;top:663.1px;font-size:26.5px;color:#000;font-weight:400;letter-spacing:0.425px;">chain</div>
<div class="t" style="left:729.0px;top:663.1px;font-size:26.5px;color:#000;font-weight:400;letter-spacing:-1.55px;">'A'</div>
<div class="t" style="left:761.7px;top:663.1px;font-size:26.5px;color:#000;font-weight:400;letter-spacing:0.25px;">and</div>
<div class="t" style="left:813.5px;top:663.1px;font-size:26.5px;color:#000;font-weight:400;letter-spacing:0.55px;">resid</div>
<svg style="position:absolute;left:881.15px;top:666.10px" width="11" height="21" viewBox="-1 -20 11 21"><path d="M4.75 -19.1 H7.4 V0 H4.75 V-15.7 L1.1 -12.8 L0 -14.9 Z" fill="#000"/></svg><svg style="position:absolute;left:893.15px;top:666.10px" width="11" height="21" viewBox="-1 -20 11 21"><path d="M4.75 -19.1 H7.4 V0 H4.75 V-15.7 L1.1 -12.8 L0 -14.9 Z" fill="#000"/></svg><div class="t" style="left:905.4px;top:663.1px;font-size:26.5px;color:#000;font-weight:400;letter-spacing:0px;transform:scaleX(1.05);transform-origin:7.4px 0;">5</div>
<div class="t" style="left:929.6px;top:663.1px;font-size:26.5px;color:#000;font-weight:400;letter-spacing:0.817px;">through</div>
<svg style="position:absolute;left:1031.25px;top:666.10px" width="11" height="21" viewBox="-1 -20 11 21"><path d="M4.75 -19.1 H7.4 V0 H4.75 V-15.7 L1.1 -12.8 L0 -14.9 Z" fill="#000"/></svg><div class="t" style="left:1043.5px;top:663.1px;font-size:26.5px;color:#000;font-weight:400;letter-spacing:0px;transform:scaleX(1.05);transform-origin:7.4px 0;">2</div>
<div class="t" style="left:1059.1px;top:663.1px;font-size:26.5px;color:#000;font-weight:400;letter-spacing:0px;transform:scaleX(1.05);transform-origin:7.4px 0;">0</div>
<div class="t" style="left:1156.0px;top:663.1px;font-size:26.5px;color:#000;font-weight:400;letter-spacing:0.527px;">antiparallel</div>
<div class="t" style="left:1356.2px;top:663.1px;font-size:26.5px;color:#000;font-weight:400;letter-spacing:0.425px;">chain</div>
<div class="t" style="left:1429.2px;top:663.1px;font-size:26.5px;color:#000;font-weight:400;letter-spacing:-1.55px;">'A'</div>
<div class="t" style="left:1461.9px;top:663.1px;font-size:26.5px;color:#000;font-weight:400;letter-spacing:0.25px;">and</div>
<div class="t" style="left:1513.8px;top:663.1px;font-size:26.5px;color:#000;font-weight:400;letter-spacing:0.55px;">resid</div>
<svg style="position:absolute;left:1581.35px;top:666.10px" width="11" height="21" viewBox="-1 -20 11 21"><path d="M4.75 -19.1 H7.4 V0 H4.75 V-15.7 L1.1 -12.8 L0 -14.9 Z" fill="#000"/></svg><svg style="position:absolute;left:1593.35px;top:666.10px" width="11" height="21" viewBox="-1 -20 11 21"><path d="M4.75 -19.1 H7.4 V0 H4.75 V-15.7 L1.1 -12.8 L0 -14.9 Z" fill="#000"/></svg><div class="t" style="left:1605.7px;top:663.1px;font-size:26.5px;color:#000;font-weight:400;letter-spacing:0px;transform:scaleX(1.05);transform-origin:7.4px 0;">6</div>
<div class="t" style="left:1628.8px;top:663.1px;font-size:26.5px;color:#000;font-weight:400;letter-spacing:0.25px;">and</div>
<div class="t" style="left:1680.6px;top:663.1px;font-size:26.5px;color:#000;font-weight:400;letter-spacing:0.333px;">name</div>
<div class="t" style="left:1755.0px;top:663.1px;font-size:26.5px;color:#000;font-weight:400;letter-spacing:0px;">O</div>
<div class="t" style="left:1856.2px;top:663.1px;font-size:26.5px;color:#000;font-weight:400;letter-spacing:0.425px;">chain</div>
<div class="t" style="left:1929.2px;top:663.1px;font-size:26.5px;color:#000;font-weight:400;letter-spacing:-1.55px;">'A'</div>
<div class="t" style="left:1961.9px;top:663.1px;font-size:26.5px;color:#000;font-weight:400;letter-spacing:0.25px;">and</div>
<div class="t" style="left:2013.8px;top:663.1px;font-size:26.5px;color:#000;font-weight:400;letter-spacing:0.55px;">resid</div>
<svg style="position:absolute;left:2081.35px;top:666.10px" width="11" height="21" viewBox="-1 -20 11 21"><path d="M4.75 -19.1 H7.4 V0 H4.75 V-15.7 L1.1 -12.8 L0 -14.9 Z" fill="#000"/></svg><div class="t" style="left:2093.7px;top:663.1px;font-size:26.5px;color:#000;font-weight:400;letter-spacing:0px;transform:scaleX(1.05);transform-origin:7.4px 0;">0</div>
<div class="t" style="left:2109.2px;top:663.1px;font-size:26.5px;color:#000;font-weight:400;letter-spacing:0px;transform:scaleX(1.05);transform-origin:7.4px 0;">8</div>
<div class="t" style="left:2132.3px;top:663.1px;font-size:26.5px;color:#000;font-weight:400;letter-spacing:0.25px;">and</div>
<div class="t" style="left:2184.2px;top:663.1px;font-size:26.5px;color:#000;font-weight:400;letter-spacing:0.333px;">name</div>
<div class="t" style="left:2257.6px;top:663.1px;font-size:26.5px;color:#000;font-weight:400;letter-spacing:0px;">N</div>
<svg style="position:absolute;left:511px;top:713.0px" width="20" height="16"><path d="M1 1 L19 1 L10 15 Z" fill="#8c8c8c"/></svg>
<div class="t" style="left:540.3px;top:707.1px;font-size:26px;color:#000;font-weight:400;letter-spacing:0px;transform:scaleX(0.91);transform-origin:0.5px 0;">A</div>
<div class="t" style="left:557.3px;top:707.1px;font-size:26px;color:#000;font-weight:400;letter-spacing:0px;transform:scaleX(0.91);transform-origin:0.5px 0;">A</div>
<div class="t" style="left:575.1px;top:706.6px;font-size:26.5px;color:#000;font-weight:400;letter-spacing:0px;transform:scaleX(1.05);transform-origin:7.4px 0;">3</div>
<div class="t" style="left:656.0px;top:707.1px;font-size:26.5px;color:#000;font-weight:400;letter-spacing:0.425px;">chain</div>
<div class="t" style="left:729.0px;top:707.1px;font-size:26.5px;color:#000;font-weight:400;letter-spacing:-1.55px;">'A'</div>
<div class="t" style="left:761.7px;top:707.1px;font-size:26.5px;color:#000;font-weight:400;letter-spacing:0.25px;">and</div>
<div class="t" style="left:813.5px;top:707.1px;font-size:26.5px;color:#000;font-weight:400;letter-spacing:0.55px;">resid</div>
<svg style="position:absolute;left:881.15px;top:710.10px" width="11" height="21" viewBox="-1 -20 11 21"><path d="M4.75 -19.1 H7.4 V0 H4.75 V-15.7 L1.1 -12.8 L0 -14.9 Z" fill="#000"/></svg><div class="t" style="left:893.4px;top:707.1px;font-size:26.5px;color:#000;font-weight:400;letter-spacing:0px;transform:scaleX(1.05);transform-origin:7.4px 0;">4</div>
<div class="t" style="left:909.0px;top:707.1px;font-size:26.5px;color:#000;font-weight:400;letter-spacing:0px;transform:scaleX(1.05);transform-origin:7.4px 0;">5</div>
<div class="t" style="left:933.1px;top:707.1px;font-size:26.5px;color:#000;font-weight:400;letter-spacing:0.817px;">through</div>
<svg style="position:absolute;left:1034.85px;top:710.10px" width="11" height="21" viewBox="-1 -20 11 21"><path d="M4.75 -19.1 H7.4 V0 H4.75 V-15.7 L1.1 -12.8 L0 -14.9 Z" fill="#000"/></svg><div class="t" style="left:1047.1px;top:707.1px;font-size:26.5px;color:#000;font-weight:400;letter-spacing:0px;transform:scaleX(1.05);transform-origin:7.4px 0;">4</div>
<div class="t" style="left:1062.7px;top:707.1px;font-size:26.5px;color:#000;font-weight:400;letter-spacing:0px;transform:scaleX(1.05);transform-origin:7.4px 0;">7</div>
<div class="t" style="left:656.0px;top:751.1px;font-size:26.5px;color:#000;font-weight:400;letter-spacing:0.425px;">chain</div>
<div class="t" style="left:729.0px;top:751.1px;font-size:26.5px;color:#000;font-weight:400;letter-spacing:-1.55px;">'A'</div>
<div class="t" style="left:761.7px;top:751.1px;font-size:26.5px;color:#000;font-weight:400;letter-spacing:0.25px;">and</div>
<div class="t" style="left:813.5px;top:751.1px;font-size:26.5px;color:#000;font-weight:400;letter-spacing:0.55px;">resid</div>
<svg style="position:absolute;left:881.15px;top:754.10px" width="11" height="21" viewBox="-1 -20 11 21"><path d="M4.75 -19.1 H7.4 V0 H4.75 V-15.7 L1.1 -12.8 L0 -14.9 Z" fill="#000"/></svg><div class="t" style="left:893.4px;top:751.1px;font-size:26.5px;color:#000;font-weight:400;letter-spacing:0px;transform:scaleX(1.05);transform-origin:7.4px 0;">5</div>
<div class="t" style="left:909.0px;top:751.1px;font-size:26.5px;color:#000;font-weight:400;letter-spacing:0px;transform:scaleX(1.05);transform-origin:7.4px 0;">2</div>
<div class="t" style="left:933.1px;top:751.1px;font-size:26.5px;color:#000;font-weight:400;letter-spacing:0.817px;">through</div>
<svg style="position:absolute;left:1034.85px;top:754.10px" width="11" height="21" viewBox="-1 -20 11 21"><path d="M4.75 -19.1 H7.4 V0 H4.75 V-15.7 L1.1 -12.8 L0 -14.9 Z" fill="#000"/></svg><div class="t" style="left:1047.1px;top:751.1px;font-size:26.5px;color:#000;font-weight:400;letter-spacing:0px;transform:scaleX(1.05);transform-origin:7.4px 0;">5</div>
<div class="t" style="left:1062.7px;top:751.1px;font-size:26.5px;color:#000;font-weight:400;letter-spacing:0px;transform:scaleX(1.05);transform-origin:7.4px 0;">5</div>
<div class="t" style="left:1156.0px;top:751.1px;font-size:26.5px;color:#000;font-weight:400;letter-spacing:0.527px;">antiparallel</div>
<div class="t" style="left:1356.2px;top:751.1px;font-size:26.5px;color:#000;font-weight:400;letter-spacing:0.425px;">chain</div>
<div class="t" style="left:1429.2px;top:751.1px;font-size:26.5px;color:#000;font-weight:400;letter-spacing:-1.55px;">'A'</div>
<div class="t" style="left:1461.9px;top:751.1px;font-size:26.5px;color:#000;font-weight:400;letter-spacing:0.25px;">and</div>
<div class="t" style="left:1513.8px;top:751.1px;font-size:26.5px;color:#000;font-weight:400;letter-spacing:0.55px;">resid</div>
<svg style="position:absolute;left:1581.35px;top:754.10px" width="11" height="21" viewBox="-1 -20 11 21"><path d="M4.75 -19.1 H7.4 V0 H4.75 V-15.7 L1.1 -12.8 L0 -14.9 Z" fill="#000"/></svg><div class="t" style="left:1593.7px;top:751.1px;font-size:26.5px;color:#000;font-weight:400;letter-spacing:0px;transform:scaleX(1.05);transform-origin:7.4px 0;">5</div>
<div class="t" style="left:1609.2px;top:751.1px;font-size:26.5px;color:#000;font-weight:400;letter-spacing:0px;transform:scaleX(1.05);transform-origin:7.4px 0;">3</div>
<div class="t" style="left:1632.4px;top:751.1px;font-size:26.5px;color:#000;font-weight:400;letter-spacing:0.25px;">and</div>
<div class="t" style="left:1684.2px;top:751.1px;font-size:26.5px;color:#000;font-weight:400;letter-spacing:0.333px;">name</div>
<div class="t" style="left:1758.6px;top:751.1px;font-size:26.5px;color:#000;font-weight:400;letter-spacing:0px;">O</div>
<div class="t" style="left:1856.2px;top:751.1px;font-size:26.5px;color:#000;font-weight:400;letter-spacing:0.425px;">chain</div>
<div class="t" style="left:1929.2px;top:751.1px;font-size:26.5px;color:#000;font-weight:400;letter-spacing:-1.55px;">'A'</div>
<div class="t" style="left:1961.9px;top:751.1px;font-size:26.5px;color:#000;font-weight:400;letter-spacing:0.25px;">and</div>
<div class="t" style="left:2013.8px;top:751.1px;font-size:26.5px;color:#000;font-weight:400;letter-spacing:0.55px;">resid</div>
<svg style="position:absolute;left:2081.35px;top:754.10px" width="11" height="21" viewBox="-1 -20 11 21"><path d="M4.75 -19.1 H7.4 V0 H4.75 V-15.7 L1.1 -12.8 L0 -14.9 Z" fill="#000"/></svg><div class="t" style="left:2093.7px;top:751.1px;font-size:26.5px;color:#000;font-weight:400;letter-spacing:0px;transform:scaleX(1.05);transform-origin:7.4px 0;">4</div>
<div class="t" style="left:2109.2px;top:751.1px;font-size:26.5px;color:#000;font-weight:400;letter-spacing:0px;transform:scaleX(1.05);transform-origin:7.4px 0;">6</div>
<div class="t" style="left:2132.3px;top:751.1px;font-size:26.5px;color:#000;font-weight:400;letter-spacing:0.25px;">and</div>
<div class="t" style="left:2184.2px;top:751.1px;font-size:26.5px;color:#000;font-weight:400;letter-spacing:0.333px;">name</div>
<div class="t" style="left:2257.6px;top:751.1px;font-size:26.5px;color:#000;font-weight:400;letter-spacing:0px;">N</div>
<div class="t" style="left:656.0px;top:795.1px;font-size:26.5px;color:#000;font-weight:400;letter-spacing:0.425px;">chain</div>
<div class="t" style="left:729.0px;top:795.1px;font-size:26.5px;color:#000;font-weight:400;letter-spacing:-1.55px;">'A'</div>
<div class="t" style="left:761.7px;top:795.1px;font-size:26.5px;color:#000;font-weight:400;letter-spacing:0.25px;">and</div>
<div class="t" style="left:813.5px;top:795.1px;font-size:26.5px;color:#000;font-weight:400;letter-spacing:0.55px;">resid</div>
<svg style="position:absolute;left:881.15px;top:798.10px" width="11" height="21" viewBox="-1 -20 11 21"><path d="M4.75 -19.1 H7.4 V0 H4.75 V-15.7 L1.1 -12.8 L0 -14.9 Z" fill="#000"/></svg><div class="t" style="left:893.4px;top:795.1px;font-size:26.5px;color:#000;font-weight:400;letter-spacing:0px;transform:scaleX(1.05);transform-origin:7.4px 0;">7</div>
<div class="t" style="left:909.0px;top:795.1px;font-size:26.5px;color:#000;font-weight:400;letter-spacing:0px;transform:scaleX(1.05);transform-origin:7.4px 0;">7</div>
<div class="t" style="left:933.1px;top:795.1px;font-size:26.5px;color:#000;font-weight:400;letter-spacing:0.817px;">through</div>
<svg style="position:absolute;left:1034.85px;top:798.10px" width="11" height="21" viewBox="-1 -20 11 21"><path d="M4.75 -19.1 H7.4 V0 H4.75 V-15.7 L1.1 -12.8 L0 -14.9 Z" fill="#000"/></svg><div class="t" style="left:1047.1px;top:795.1px;font-size:26.5px;color:#000;font-weight:400;letter-spacing:0px;transform:scaleX(1.05);transform-origin:7.4px 0;">8</div>
<div class="t" style="left:1062.7px;top:795.1px;font-size:26.5px;color:#000;font-weight:400;letter-spacing:0px;transform:scaleX(1.05);transform-origin:7.4px 0;">2</div>
<div class="t" style="left:1155.0px;top:795.1px;font-size:26.5px;color:#000;font-weight:400;letter-spacing:0.4px;">parallel</div>
<div class="t" style="left:1356.2px;top:795.1px;font-size:26.5px;color:#000;font-weight:400;letter-spacing:0.425px;">chain</div>
<div class="t" style="left:1429.2px;top:795.1px;font-size:26.5px;color:#000;font-weight:400;letter-spacing:-1.55px;">'A'</div>
<div class="t" style="left:1461.9px;top:795.1px;font-size:26.5px;color:#000;font-weight:400;letter-spacing:0.25px;">and</div>
<div class="t" style="left:1513.8px;top:795.1px;font-size:26.5px;color:#000;font-weight:400;letter-spacing:0.55px;">resid</div>
<svg style="position:absolute;left:1581.35px;top:798.10px" width="11" height="21" viewBox="-1 -20 11 21"><path d="M4.75 -19.1 H7.4 V0 H4.75 V-15.7 L1.1 -12.8 L0 -14.9 Z" fill="#000"/></svg><div class="t" style="left:1593.7px;top:795.1px;font-size:26.5px;color:#000;font-weight:400;letter-spacing:0px;transform:scaleX(1.05);transform-origin:7.4px 0;">7</div>
<div class="t" style="left:1609.2px;top:795.1px;font-size:26.5px;color:#000;font-weight:400;letter-spacing:0px;transform:scaleX(1.05);transform-origin:7.4px 0;">9</div>
<div class="t" style="left:1632.4px;top:795.1px;font-size:26.5px;color:#000;font-weight:400;letter-spacing:0.25px;">and</div>
<div class="t" style="left:1684.2px;top:795.1px;font-size:26.5px;color:#000;font-weight:400;letter-spacing:0.333px;">name</div>
<div class="t" style="left:1758.6px;top:795.1px;font-size:26.5px;color:#000;font-weight:400;letter-spacing:0px;">O</div>
<div class="t" style="left:1856.2px;top:795.1px;font-size:26.5px;color:#000;font-weight:400;letter-spacing:0.425px;">chain</div>
<div class="t" style="left:1929.2px;top:795.1px;font-size:26.5px;color:#000;font-weight:400;letter-spacing:-1.55px;">'A'</div>
<div class="t" style="left:1961.9px;top:795.1px;font-size:26.5px;color:#000;font-weight:400;letter-spacing:0.25px;">and</div>
<div class="t" style="left:2013.8px;top:795.1px;font-size:26.5px;color:#000;font-weight:400;letter-spacing:0.55px;">resid</div>
<svg style="position:absolute;left:2081.35px;top:798.10px" width="11" height="21" viewBox="-1 -20 11 21"><path d="M4.75 -19.1 H7.4 V0 H4.75 V-15.7 L1.1 -12.8 L0 -14.9 Z" fill="#000"/></svg><div class="t" style="left:2093.7px;top:795.1px;font-size:26.5px;color:#000;font-weight:400;letter-spacing:0px;transform:scaleX(1.05);transform-origin:7.4px 0;">5</div>
<div class="t" style="left:2109.2px;top:795.1px;font-size:26.5px;color:#000;font-weight:400;letter-spacing:0px;transform:scaleX(1.05);transform-origin:7.4px 0;">4</div>
<div class="t" style="left:2132.3px;top:795.1px;font-size:26.5px;color:#000;font-weight:400;letter-spacing:0.25px;">and</div>
<div class="t" style="left:2184.2px;top:795.1px;font-size:26.5px;color:#000;font-weight:400;letter-spacing:0.333px;">name</div>
<div class="t" style="left:2257.6px;top:795.1px;font-size:26.5px;color:#000;font-weight:400;letter-spacing:0px;">N</div>
<div class="t" style="left:656.0px;top:839.1px;font-size:26.5px;color:#000;font-weight:400;letter-spacing:0.425px;">chain</div>
<div class="t" style="left:729.0px;top:839.1px;font-size:26.5px;color:#000;font-weight:400;letter-spacing:-1.55px;">'A'</div>
<div class="t" style="left:761.7px;top:839.1px;font-size:26.5px;color:#000;font-weight:400;letter-spacing:0.25px;">and</div>
<div class="t" style="left:813.5px;top:839.1px;font-size:26.5px;color:#000;font-weight:400;letter-spacing:0.55px;">resid</div>
<div class="t" style="left:881.4px;top:839.1px;font-size:26.5px;color:#000;font-weight:400;letter-spacing:0px;transform:scaleX(1.05);transform-origin:7.4px 0;">2</div>
<svg style="position:absolute;left:896.75px;top:842.10px" width="11" height="21" viewBox="-1 -20 11 21"><path d="M4.75 -19.1 H7.4 V0 H4.75 V-15.7 L1.1 -12.8 L0 -14.9 Z" fill="#000"/></svg><div class="t" style="left:909.0px;top:839.1px;font-size:26.5px;color:#000;font-weight:400;letter-spacing:0px;transform:scaleX(1.05);transform-origin:7.4px 0;">4</div>
<div class="t" style="left:933.1px;top:839.1px;font-size:26.5px;color:#000;font-weight:400;letter-spacing:0.817px;">through</div>
<div class="t" style="left:1035.1px;top:839.1px;font-size:26.5px;color:#000;font-weight:400;letter-spacing:0px;transform:scaleX(1.05);transform-origin:7.4px 0;">2</div>
<svg style="position:absolute;left:1050.45px;top:842.10px" width="11" height="21" viewBox="-1 -20 11 21"><path d="M4.75 -19.1 H7.4 V0 H4.75 V-15.7 L1.1 -12.8 L0 -14.9 Z" fill="#000"/></svg><div class="t" style="left:1062.7px;top:839.1px;font-size:26.5px;color:#000;font-weight:400;letter-spacing:0px;transform:scaleX(1.05);transform-origin:7.4px 0;">8</div>
<div class="t" style="left:1155.0px;top:839.1px;font-size:26.5px;color:#000;font-weight:400;letter-spacing:0.4px;">parallel</div>
<div class="t" style="left:1356.2px;top:839.1px;font-size:26.5px;color:#000;font-weight:400;letter-spacing:0.425px;">chain</div>
<div class="t" style="left:1429.2px;top:839.1px;font-size:26.5px;color:#000;font-weight:400;letter-spacing:-1.55px;">'A'</div>
<div class="t" style="left:1461.9px;top:839.1px;font-size:26.5px;color:#000;font-weight:400;letter-spacing:0.25px;">and</div>
<div class="t" style="left:1513.8px;top:839.1px;font-size:26.5px;color:#000;font-weight:400;letter-spacing:0.55px;">resid</div>
<div class="t" style="left:1581.6px;top:839.1px;font-size:26.5px;color:#000;font-weight:400;letter-spacing:0px;transform:scaleX(1.05);transform-origin:7.4px 0;">2</div>
<svg style="position:absolute;left:1596.95px;top:842.10px" width="11" height="21" viewBox="-1 -20 11 21"><path d="M4.75 -19.1 H7.4 V0 H4.75 V-15.7 L1.1 -12.8 L0 -14.9 Z" fill="#000"/></svg><div class="t" style="left:1609.2px;top:839.1px;font-size:26.5px;color:#000;font-weight:400;letter-spacing:0px;transform:scaleX(1.05);transform-origin:7.4px 0;">7</div>
<div class="t" style="left:1632.4px;top:839.1px;font-size:26.5px;color:#000;font-weight:400;letter-spacing:0.25px;">and</div>
<div class="t" style="left:1684.2px;top:839.1px;font-size:26.5px;color:#000;font-weight:400;letter-spacing:0.333px;">name</div>
<div class="t" style="left:1758.6px;top:839.1px;font-size:26.5px;color:#000;font-weight:400;letter-spacing:0px;">O</div>
<div class="t" style="left:1856.2px;top:839.1px;font-size:26.5px;color:#000;font-weight:400;letter-spacing:0.425px;">chain</div>
<div class="t" style="left:1929.2px;top:839.1px;font-size:26.5px;color:#000;font-weight:400;letter-spacing:-1.55px;">'A'</div>
<div class="t" style="left:1961.9px;top:839.1px;font-size:26.5px;color:#000;font-weight:400;letter-spacing:0.25px;">and</div>
<div class="t" style="left:2013.8px;top:839.1px;font-size:26.5px;color:#000;font-weight:400;letter-spacing:0.55px;">resid</div>
<svg style="position:absolute;left:2081.35px;top:842.10px" width="11" height="21" viewBox="-1 -20 11 21"><path d="M4.75 -19.1 H7.4 V0 H4.75 V-15.7 L1.1 -12.8 L0 -14.9 Z" fill="#000"/></svg><div class="t" style="left:2093.7px;top:839.1px;font-size:26.5px;color:#000;font-weight:400;letter-spacing:0px;transform:scaleX(1.05);transform-origin:7.4px 0;">8</div>
<div class="t" style="left:2109.2px;top:839.1px;font-size:26.5px;color:#000;font-weight:400;letter-spacing:0px;transform:scaleX(1.05);transform-origin:7.4px 0;">2</div>
<div class="t" style="left:2132.3px;top:839.1px;font-size:26.5px;color:#000;font-weight:400;letter-spacing:0.25px;">and</div>
<div class="t" style="left:2184.2px;top:839.1px;font-size:26.5px;color:#000;font-weight:400;letter-spacing:0.333px;">name</div>
<div class="t" style="left:2257.6px;top:839.1px;font-size:26.5px;color:#000;font-weight:400;letter-spacing:0px;">N</div>
<div class="t" style="left:656.0px;top:883.1px;font-size:26.5px;color:#000;font-weight:400;letter-spacing:0.425px;">chain</div>
<div class="t" style="left:729.0px;top:883.1px;font-size:26.5px;color:#000;font-weight:400;letter-spacing:-1.55px;">'A'</div>
<div class="t" style="left:761.7px;top:883.1px;font-size:26.5px;color:#000;font-weight:400;letter-spacing:0.25px;">and</div>
<div class="t" style="left:813.5px;top:883.1px;font-size:26.5px;color:#000;font-weight:400;letter-spacing:0.55px;">resid</div>
<div class="t" style="left:881.4px;top:883.1px;font-size:26.5px;color:#000;font-weight:400;letter-spacing:0px;transform:scaleX(1.05);transform-origin:7.4px 0;">2</div>
<div class="t" style="left:897.0px;top:883.1px;font-size:26.5px;color:#000;font-weight:400;letter-spacing:0px;transform:scaleX(1.05);transform-origin:7.4px 0;">4</div>
<svg style="position:absolute;left:912.35px;top:886.10px" width="11" height="21" viewBox="-1 -20 11 21"><path d="M4.75 -19.1 H7.4 V0 H4.75 V-15.7 L1.1 -12.8 L0 -14.9 Z" fill="#000"/></svg><div class="t" style="left:933.1px;top:883.1px;font-size:26.5px;color:#000;font-weight:400;letter-spacing:0.817px;">through</div>
<div class="t" style="left:1035.1px;top:883.1px;font-size:26.5px;color:#000;font-weight:400;letter-spacing:0px;transform:scaleX(1.05);transform-origin:7.4px 0;">2</div>
<div class="t" style="left:1050.7px;top:883.1px;font-size:26.5px;color:#000;font-weight:400;letter-spacing:0px;transform:scaleX(1.05);transform-origin:7.4px 0;">4</div>
<div class="t" style="left:1066.3px;top:883.1px;font-size:26.5px;color:#000;font-weight:400;letter-spacing:0px;transform:scaleX(1.05);transform-origin:7.4px 0;">3</div>
<div class="t" style="left:1156.0px;top:883.1px;font-size:26.5px;color:#000;font-weight:400;letter-spacing:0.527px;">antiparallel</div>
<div class="t" style="left:1356.2px;top:883.1px;font-size:26.5px;color:#000;font-weight:400;letter-spacing:0.425px;">chain</div>
<div class="t" style="left:1429.2px;top:883.1px;font-size:26.5px;color:#000;font-weight:400;letter-spacing:-1.55px;">'A'</div>
<div class="t" style="left:1461.9px;top:883.1px;font-size:26.5px;color:#000;font-weight:400;letter-spacing:0.25px;">and</div>
<div class="t" style="left:1513.8px;top:883.1px;font-size:26.5px;color:#000;font-weight:400;letter-spacing:0.55px;">resid</div>
<div class="t" style="left:1581.6px;top:883.1px;font-size:26.5px;color:#000;font-weight:400;letter-spacing:0px;transform:scaleX(1.05);transform-origin:7.4px 0;">2</div>
<div class="t" style="left:1597.2px;top:883.1px;font-size:26.5px;color:#000;font-weight:400;letter-spacing:0px;transform:scaleX(1.05);transform-origin:7.4px 0;">4</div>
<div class="t" style="left:1612.8px;top:883.1px;font-size:26.5px;color:#000;font-weight:400;letter-spacing:0px;transform:scaleX(1.05);transform-origin:7.4px 0;">3</div>
<div class="t" style="left:1636.0px;top:883.1px;font-size:26.5px;color:#000;font-weight:400;letter-spacing:0.25px;">and</div>
<div class="t" style="left:1687.8px;top:883.1px;font-size:26.5px;color:#000;font-weight:400;letter-spacing:0.333px;">name</div>
<div class="t" style="left:1762.2px;top:883.1px;font-size:26.5px;color:#000;font-weight:400;letter-spacing:0px;">O</div>
<div class="t" style="left:1856.2px;top:883.1px;font-size:26.5px;color:#000;font-weight:400;letter-spacing:0.425px;">chain</div>
<div class="t" style="left:1929.2px;top:883.1px;font-size:26.5px;color:#000;font-weight:400;letter-spacing:-1.55px;">'A'</div>
<div class="t" style="left:1961.9px;top:883.1px;font-size:26.5px;color:#000;font-weight:400;letter-spacing:0.25px;">and</div>
<div class="t" style="left:2013.8px;top:883.1px;font-size:26.5px;color:#000;font-weight:400;letter-spacing:0.55px;">resid</div>
<div class="t" style="left:2081.7px;top:883.1px;font-size:26.5px;color:#000;font-weight:400;letter-spacing:0px;transform:scaleX(1.05);transform-origin:7.4px 0;">2</div>
<svg style="position:absolute;left:2096.95px;top:886.10px" width="11" height="21" viewBox="-1 -20 11 21"><path d="M4.75 -19.1 H7.4 V0 H4.75 V-15.7 L1.1 -12.8 L0 -14.9 Z" fill="#000"/></svg><div class="t" style="left:2109.2px;top:883.1px;font-size:26.5px;color:#000;font-weight:400;letter-spacing:0px;transform:scaleX(1.05);transform-origin:7.4px 0;">4</div>
<div class="t" style="left:2132.3px;top:883.1px;font-size:26.5px;color:#000;font-weight:400;letter-spacing:0.25px;">and</div>
<div class="t" style="left:2184.2px;top:883.1px;font-size:26.5px;color:#000;font-weight:400;letter-spacing:0.333px;">name</div>
<div class="t" style="left:2257.6px;top:883.1px;font-size:26.5px;color:#000;font-weight:400;letter-spacing:0px;">N</div>
<div class="t" style="left:656.0px;top:927.1px;font-size:26.5px;color:#000;font-weight:400;letter-spacing:0.425px;">chain</div>
<div class="t" style="left:729.0px;top:927.1px;font-size:26.5px;color:#000;font-weight:400;letter-spacing:-1.55px;">'A'</div>
<div class="t" style="left:761.7px;top:927.1px;font-size:26.5px;color:#000;font-weight:400;letter-spacing:0.25px;">and</div>
<div class="t" style="left:813.5px;top:927.1px;font-size:26.5px;color:#000;font-weight:400;letter-spacing:0.55px;">resid</div>
<div class="t" style="left:881.4px;top:927.1px;font-size:26.5px;color:#000;font-weight:400;letter-spacing:0px;transform:scaleX(1.05);transform-origin:7.4px 0;">2</div>
<div class="t" style="left:897.0px;top:927.1px;font-size:26.5px;color:#000;font-weight:400;letter-spacing:0px;transform:scaleX(1.05);transform-origin:7.4px 0;">4</div>
<div class="t" style="left:912.6px;top:927.1px;font-size:26.5px;color:#000;font-weight:400;letter-spacing:0px;transform:scaleX(1.05);transform-origin:7.4px 0;">9</div>
<div class="t" style="left:936.8px;top:927.1px;font-size:26.5px;color:#000;font-weight:400;letter-spacing:0.817px;">through</div>
<div class="t" style="left:1038.8px;top:927.1px;font-size:26.5px;color:#000;font-weight:400;letter-spacing:0px;transform:scaleX(1.05);transform-origin:7.4px 0;">2</div>
<div class="t" style="left:1054.3px;top:927.1px;font-size:26.5px;color:#000;font-weight:400;letter-spacing:0px;transform:scaleX(1.05);transform-origin:7.4px 0;">5</div>
<div class="t" style="left:1069.9px;top:927.1px;font-size:26.5px;color:#000;font-weight:400;letter-spacing:0px;transform:scaleX(1.05);transform-origin:7.4px 0;">2</div>
<div class="t" style="left:1156.0px;top:927.1px;font-size:26.5px;color:#000;font-weight:400;letter-spacing:0.527px;">antiparallel</div>
<div class="t" style="left:1356.2px;top:927.1px;font-size:26.5px;color:#000;font-weight:400;letter-spacing:0.425px;">chain</div>
<div class="t" style="left:1429.2px;top:927.1px;font-size:26.5px;color:#000;font-weight:400;letter-spacing:-1.55px;">'A'</div>
<div class="t" style="left:1461.9px;top:927.1px;font-size:26.5px;color:#000;font-weight:400;letter-spacing:0.25px;">and</div>
<div class="t" style="left:1513.8px;top:927.1px;font-size:26.5px;color:#000;font-weight:400;letter-spacing:0.55px;">resid</div>
<div class="t" style="left:1581.6px;top:927.1px;font-size:26.5px;color:#000;font-weight:400;letter-spacing:0px;transform:scaleX(1.05);transform-origin:7.4px 0;">2</div>
<div class="t" style="left:1597.2px;top:927.1px;font-size:26.5px;color:#000;font-weight:400;letter-spacing:0px;transform:scaleX(1.05);transform-origin:7.4px 0;">5</div>
<div class="t" style="left:1612.8px;top:927.1px;font-size:26.5px;color:#000;font-weight:400;letter-spacing:0px;transform:scaleX(1.05);transform-origin:7.4px 0;">0</div>
<div class="t" style="left:1636.0px;top:927.1px;font-size:26.5px;color:#000;font-weight:400;letter-spacing:0.25px;">and</div>
<div class="t" style="left:1687.8px;top:927.1px;font-size:26.5px;color:#000;font-weight:400;letter-spacing:0.333px;">name</div>
<div class="t" style="left:1762.2px;top:927.1px;font-size:26.5px;color:#000;font-weight:400;letter-spacing:0px;">O</div>
<div class="t" style="left:1856.2px;top:927.1px;font-size:26.5px;color:#000;font-weight:400;letter-spacing:0.425px;">chain</div>
<div class="t" style="left:1929.2px;top:927.1px;font-size:26.5px;color:#000;font-weight:400;letter-spacing:-1.55px;">'A'</div>
<div class="t" style="left:1961.9px;top:927.1px;font-size:26.5px;color:#000;font-weight:400;letter-spacing:0.25px;">and</div>
<div class="t" style="left:2013.8px;top:927.1px;font-size:26.5px;color:#000;font-weight:400;letter-spacing:0.55px;">resid</div>
<div class="t" style="left:2081.7px;top:927.1px;font-size:26.5px;color:#000;font-weight:400;letter-spacing:0px;transform:scaleX(1.05);transform-origin:7.4px 0;">2</div>
<div class="t" style="left:2097.2px;top:927.1px;font-size:26.5px;color:#000;font-weight:400;letter-spacing:0px;transform:scaleX(1.05);transform-origin:7.4px 0;">4</div>
<div class="t" style="left:2112.8px;top:927.1px;font-size:26.5px;color:#000;font-weight:400;letter-spacing:0px;transform:scaleX(1.05);transform-origin:7.4px 0;">2</div>
<div class="t" style="left:2135.9px;top:927.1px;font-size:26.5px;color:#000;font-weight:400;letter-spacing:0.25px;">and</div>
<div class="t" style="left:2187.8px;top:927.1px;font-size:26.5px;color:#000;font-weight:400;letter-spacing:0.333px;">name</div>
<div class="t" style="left:2261.2px;top:927.1px;font-size:26.5px;color:#000;font-weight:400;letter-spacing:0px;">N</div>
<svg style="position:absolute;left:511px;top:977.0px" width="20" height="16"><path d="M1 1 L19 1 L10 15 Z" fill="#8c8c8c"/></svg>
<div class="t" style="left:540.3px;top:971.1px;font-size:26px;color:#000;font-weight:400;letter-spacing:0px;transform:scaleX(0.91);transform-origin:0.5px 0;">A</div>
<div class="t" style="left:557.3px;top:971.1px;font-size:26px;color:#000;font-weight:400;letter-spacing:0px;transform:scaleX(0.91);transform-origin:0.5px 0;">A</div>
<div class="t" style="left:575.1px;top:970.6px;font-size:26.5px;color:#000;font-weight:400;letter-spacing:0px;transform:scaleX(1.05);transform-origin:7.4px 0;">4</div>
<div class="t" style="left:656.0px;top:971.1px;font-size:26.5px;color:#000;font-weight:400;letter-spacing:0.425px;">chain</div>
<div class="t" style="left:729.0px;top:971.1px;font-size:26.5px;color:#000;font-weight:400;letter-spacing:-1.55px;">'A'</div>
<div class="t" style="left:761.7px;top:971.1px;font-size:26.5px;color:#000;font-weight:400;letter-spacing:0.25px;">and</div>
<div class="t" style="left:813.5px;top:971.1px;font-size:26.5px;color:#000;font-weight:400;letter-spacing:0.55px;">resid</div>
<svg style="position:absolute;left:881.15px;top:974.10px" width="11" height="21" viewBox="-1 -20 11 21"><path d="M4.75 -19.1 H7.4 V0 H4.75 V-15.7 L1.1 -12.8 L0 -14.9 Z" fill="#000"/></svg><div class="t" style="left:893.4px;top:971.1px;font-size:26.5px;color:#000;font-weight:400;letter-spacing:0px;transform:scaleX(1.05);transform-origin:7.4px 0;">8</div>
<div class="t" style="left:909.0px;top:971.1px;font-size:26.5px;color:#000;font-weight:400;letter-spacing:0px;transform:scaleX(1.05);transform-origin:7.4px 0;">5</div>
<div class="t" style="left:933.1px;top:971.1px;font-size:26.5px;color:#000;font-weight:400;letter-spacing:0.817px;">through</div>
<svg style="position:absolute;left:1034.85px;top:974.10px" width="11" height="21" viewBox="-1 -20 11 21"><path d="M4.75 -19.1 H7.4 V0 H4.75 V-15.7 L1.1 -12.8 L0 -14.9 Z" fill="#000"/></svg><div class="t" style="left:1047.1px;top:971.1px;font-size:26.5px;color:#000;font-weight:400;letter-spacing:0px;transform:scaleX(1.05);transform-origin:7.4px 0;">8</div>
<div class="t" style="left:1062.7px;top:971.1px;font-size:26.5px;color:#000;font-weight:400;letter-spacing:0px;transform:scaleX(1.05);transform-origin:7.4px 0;">6</div>
<div class="t" style="left:656.0px;top:1015.1px;font-size:26.5px;color:#000;font-weight:400;letter-spacing:0.425px;">chain</div>
<div class="t" style="left:729.0px;top:1015.1px;font-size:26.5px;color:#000;font-weight:400;letter-spacing:-1.55px;">'A'</div>
<div class="t" style="left:761.7px;top:1015.1px;font-size:26.5px;color:#000;font-weight:400;letter-spacing:0.25px;">and</div>
<div class="t" style="left:813.5px;top:1015.1px;font-size:26.5px;color:#000;font-weight:400;letter-spacing:0.55px;">resid</div>
<div class="t" style="left:881.4px;top:1015.1px;font-size:26.5px;color:#000;font-weight:400;letter-spacing:0px;transform:scaleX(1.05);transform-origin:7.4px 0;">2</div>
<div class="t" style="left:897.0px;top:1015.1px;font-size:26.5px;color:#000;font-weight:400;letter-spacing:0px;transform:scaleX(1.05);transform-origin:7.4px 0;">3</div>
<div class="t" style="left:912.6px;top:1015.1px;font-size:26.5px;color:#000;font-weight:400;letter-spacing:0px;transform:scaleX(1.05);transform-origin:7.4px 0;">2</div>
<div class="t" style="left:936.8px;top:1015.1px;font-size:26.5px;color:#000;font-weight:400;letter-spacing:0.817px;">through</div>
<div class="t" style="left:1038.8px;top:1015.1px;font-size:26.5px;color:#000;font-weight:400;letter-spacing:0px;transform:scaleX(1.05);transform-origin:7.4px 0;">2</div>
<div class="t" style="left:1054.3px;top:1015.1px;font-size:26.5px;color:#000;font-weight:400;letter-spacing:0px;transform:scaleX(1.05);transform-origin:7.4px 0;">3</div>
<div class="t" style="left:1069.9px;top:1015.1px;font-size:26.5px;color:#000;font-weight:400;letter-spacing:0px;transform:scaleX(1.05);transform-origin:7.4px 0;">7</div>
<div class="t" style="left:1156.0px;top:1015.1px;font-size:26.5px;color:#000;font-weight:400;letter-spacing:0.527px;">antiparallel</div>
<div class="t" style="left:1356.2px;top:1015.1px;font-size:26.5px;color:#000;font-weight:400;letter-spacing:0.425px;">chain</div>
<div class="t" style="left:1429.2px;top:1015.1px;font-size:26.5px;color:#000;font-weight:400;letter-spacing:-1.55px;">'A'</div>
<div class="t" style="left:1461.9px;top:1015.1px;font-size:26.5px;color:#000;font-weight:400;letter-spacing:0.25px;">and</div>
<div class="t" style="left:1513.8px;top:1015.1px;font-size:26.5px;color:#000;font-weight:400;letter-spacing:0.55px;">resid</div>
<div class="t" style="left:1581.6px;top:1015.1px;font-size:26.5px;color:#000;font-weight:400;letter-spacing:0px;transform:scaleX(1.05);transform-origin:7.4px 0;">2</div>
<div class="t" style="left:1597.2px;top:1015.1px;font-size:26.5px;color:#000;font-weight:400;letter-spacing:0px;transform:scaleX(1.05);transform-origin:7.4px 0;">3</div>
<div class="t" style="left:1612.8px;top:1015.1px;font-size:26.5px;color:#000;font-weight:400;letter-spacing:0px;transform:scaleX(1.05);transform-origin:7.4px 0;">5</div>
<div class="t" style="left:1636.0px;top:1015.1px;font-size:26.5px;color:#000;font-weight:400;letter-spacing:0.25px;">and</div>
<div class="t" style="left:1687.8px;top:1015.1px;font-size:26.5px;color:#000;font-weight:400;letter-spacing:0.333px;">name</div>
<div class="t" style="left:1762.2px;top:1015.1px;font-size:26.5px;color:#000;font-weight:400;letter-spacing:0px;">O</div>
<div class="t" style="left:1856.2px;top:1015.1px;font-size:26.5px;color:#000;font-weight:400;letter-spacing:0.425px;">chain</div>
<div class="t" style="left:1929.2px;top:1015.1px;font-size:26.5px;color:#000;font-weight:400;letter-spacing:-1.55px;">'A'</div>
<div class="t" style="left:1961.9px;top:1015.1px;font-size:26.5px;color:#000;font-weight:400;letter-spacing:0.25px;">and</div>
<div class="t" style="left:2013.8px;top:1015.1px;font-size:26.5px;color:#000;font-weight:400;letter-spacing:0.55px;">resid</div>
<svg style="position:absolute;left:2081.35px;top:1018.10px" width="11" height="21" viewBox="-1 -20 11 21"><path d="M4.75 -19.1 H7.4 V0 H4.75 V-15.7 L1.1 -12.8 L0 -14.9 Z" fill="#000"/></svg><div class="t" style="left:2093.7px;top:1015.1px;font-size:26.5px;color:#000;font-weight:400;letter-spacing:0px;transform:scaleX(1.05);transform-origin:7.4px 0;">8</div>
<div class="t" style="left:2109.2px;top:1015.1px;font-size:26.5px;color:#000;font-weight:400;letter-spacing:0px;transform:scaleX(1.05);transform-origin:7.4px 0;">6</div>
<div class="t" style="left:2132.3px;top:1015.1px;font-size:26.5px;color:#000;font-weight:400;letter-spacing:0.25px;">and</div>
<div class="t" style="left:2184.2px;top:1015.1px;font-size:26.5px;color:#000;font-weight:400;letter-spacing:0.333px;">name</div>
<div class="t" style="left:2257.6px;top:1015.1px;font-size:26.5px;color:#000;font-weight:400;letter-spacing:0px;">N</div>
<div class="t" style="left:656.0px;top:1059.1px;font-size:26.5px;color:#000;font-weight:400;letter-spacing:0.425px;">chain</div>
<div class="t" style="left:729.0px;top:1059.1px;font-size:26.5px;color:#000;font-weight:400;letter-spacing:-1.55px;">'A'</div>
<div class="t" style="left:761.7px;top:1059.1px;font-size:26.5px;color:#000;font-weight:400;letter-spacing:0.25px;">and</div>
<div class="t" style="left:813.5px;top:1059.1px;font-size:26.5px;color:#000;font-weight:400;letter-spacing:0.55px;">resid</div>
<div class="t" style="left:881.4px;top:1059.1px;font-size:26.5px;color:#000;font-weight:400;letter-spacing:0px;transform:scaleX(1.05);transform-origin:7.4px 0;">2</div>
<div class="t" style="left:897.0px;top:1059.1px;font-size:26.5px;color:#000;font-weight:400;letter-spacing:0px;transform:scaleX(1.05);transform-origin:7.4px 0;">2</div>
<div class="t" style="left:912.6px;top:1059.1px;font-size:26.5px;color:#000;font-weight:400;letter-spacing:0px;transform:scaleX(1.05);transform-origin:7.4px 0;">0</div>
<div class="t" style="left:936.8px;top:1059.1px;font-size:26.5px;color:#000;font-weight:400;letter-spacing:0.817px;">through</div>
<div class="t" style="left:1038.8px;top:1059.1px;font-size:26.5px;color:#000;font-weight:400;letter-spacing:0px;transform:scaleX(1.05);transform-origin:7.4px 0;">2</div>
<div class="t" style="left:1054.3px;top:1059.1px;font-size:26.5px;color:#000;font-weight:400;letter-spacing:0px;transform:scaleX(1.05);transform-origin:7.4px 0;">2</div>
<div class="t" style="left:1069.9px;top:1059.1px;font-size:26.5px;color:#000;font-weight:400;letter-spacing:0px;transform:scaleX(1.05);transform-origin:7.4px 0;">5</div>
<div class="t" style="left:1156.0px;top:1059.1px;font-size:26.5px;color:#000;font-weight:400;letter-spacing:0.527px;">antiparallel</div>
<div class="t" style="left:1356.2px;top:1059.1px;font-size:26.5px;color:#000;font-weight:400;letter-spacing:0.425px;">chain</div>
<div class="t" style="left:1429.2px;top:1059.1px;font-size:26.5px;color:#000;font-weight:400;letter-spacing:-1.55px;">'A'</div>
<div class="t" style="left:1461.9px;top:1059.1px;font-size:26.5px;color:#000;font-weight:400;letter-spacing:0.25px;">and</div>
<div class="t" style="left:1513.8px;top:1059.1px;font-size:26.5px;color:#000;font-weight:400;letter-spacing:0.55px;">resid</div>
<div class="t" style="left:1581.6px;top:1059.1px;font-size:26.5px;color:#000;font-weight:400;letter-spacing:0px;transform:scaleX(1.05);transform-origin:7.4px 0;">2</div>
<div class="t" style="left:1597.2px;top:1059.1px;font-size:26.5px;color:#000;font-weight:400;letter-spacing:0px;transform:scaleX(1.05);transform-origin:7.4px 0;">2</div>
<svg style="position:absolute;left:1612.55px;top:1062.10px" width="11" height="21" viewBox="-1 -20 11 21"><path d="M4.75 -19.1 H7.4 V0 H4.75 V-15.7 L1.1 -12.8 L0 -14.9 Z" fill="#000"/></svg><div class="t" style="left:1632.4px;top:1059.1px;font-size:26.5px;color:#000;font-weight:400;letter-spacing:0.25px;">and</div>
<div class="t" style="left:1684.2px;top:1059.1px;font-size:26.5px;color:#000;font-weight:400;letter-spacing:0.333px;">name</div>
<div class="t" style="left:1757.6px;top:1059.1px;font-size:26.5px;color:#000;font-weight:400;letter-spacing:0px;">N</div>
<div class="t" style="left:1856.2px;top:1059.1px;font-size:26.5px;color:#000;font-weight:400;letter-spacing:0.425px;">chain</div>
<div class="t" style="left:1929.2px;top:1059.1px;font-size:26.5px;color:#000;font-weight:400;letter-spacing:-1.55px;">'A'</div>
<div class="t" style="left:1961.9px;top:1059.1px;font-size:26.5px;color:#000;font-weight:400;letter-spacing:0.25px;">and</div>
<div class="t" style="left:2013.8px;top:1059.1px;font-size:26.5px;color:#000;font-weight:400;letter-spacing:0.55px;">resid</div>
<div class="t" style="left:2081.7px;top:1059.1px;font-size:26.5px;color:#000;font-weight:400;letter-spacing:0px;transform:scaleX(1.05);transform-origin:7.4px 0;">2</div>
<div class="t" style="left:2097.2px;top:1059.1px;font-size:26.5px;color:#000;font-weight:400;letter-spacing:0px;transform:scaleX(1.05);transform-origin:7.4px 0;">3</div>
<div class="t" style="left:2112.8px;top:1059.1px;font-size:26.5px;color:#000;font-weight:400;letter-spacing:0px;transform:scaleX(1.05);transform-origin:7.4px 0;">6</div>
<div class="t" style="left:2135.9px;top:1059.1px;font-size:26.5px;color:#000;font-weight:400;letter-spacing:0.25px;">and</div>
<div class="t" style="left:2187.8px;top:1059.1px;font-size:26.5px;color:#000;font-weight:400;letter-spacing:0.333px;">name</div>
<div class="t" style="left:2262.2px;top:1059.1px;font-size:26.5px;color:#000;font-weight:400;letter-spacing:0px;">O</div>
<svg style="position:absolute;left:511px;top:1109.0px" width="20" height="16"><path d="M1 1 L19 1 L10 15 Z" fill="#8c8c8c"/></svg>
<div class="t" style="left:540.3px;top:1103.1px;font-size:26px;color:#000;font-weight:400;letter-spacing:0px;transform:scaleX(0.91);transform-origin:0.5px 0;">A</div>
<div class="t" style="left:557.3px;top:1103.1px;font-size:26px;color:#000;font-weight:400;letter-spacing:0px;transform:scaleX(0.91);transform-origin:0.5px 0;">A</div>
<div class="t" style="left:575.1px;top:1102.6px;font-size:26.5px;color:#000;font-weight:400;letter-spacing:0px;transform:scaleX(1.05);transform-origin:7.4px 0;">5</div>
<div class="t" style="left:656.0px;top:1103.1px;font-size:26.5px;color:#000;font-weight:400;letter-spacing:0.425px;">chain</div>
<div class="t" style="left:729.0px;top:1103.1px;font-size:26.5px;color:#000;font-weight:400;letter-spacing:0.25px;">'B'</div>
<div class="t" style="left:765.2px;top:1103.1px;font-size:26.5px;color:#000;font-weight:400;letter-spacing:0.25px;">and</div>
<div class="t" style="left:817.1px;top:1103.1px;font-size:26.5px;color:#000;font-weight:400;letter-spacing:0.55px;">resid</div>
<div class="t" style="left:885.0px;top:1103.1px;font-size:26.5px;color:#000;font-weight:400;letter-spacing:0px;transform:scaleX(1.05);transform-origin:7.4px 0;">4</div>
<div class="t" style="left:900.6px;top:1103.1px;font-size:26.5px;color:#000;font-weight:400;letter-spacing:0px;transform:scaleX(1.05);transform-origin:7.4px 0;">3</div>
<div class="t" style="left:924.7px;top:1103.1px;font-size:26.5px;color:#000;font-weight:400;letter-spacing:0.817px;">through</div>
<div class="t" style="left:1026.6px;top:1103.1px;font-size:26.5px;color:#000;font-weight:400;letter-spacing:0px;transform:scaleX(1.05);transform-origin:7.4px 0;">4</div>
<div class="t" style="left:1042.2px;top:1103.1px;font-size:26.5px;color:#000;font-weight:400;letter-spacing:0px;transform:scaleX(1.05);transform-origin:7.4px 0;">5</div>
<div class="t" style="left:656.0px;top:1147.1px;font-size:26.5px;color:#000;font-weight:400;letter-spacing:0.425px;">chain</div>
<div class="t" style="left:729.0px;top:1147.1px;font-size:26.5px;color:#000;font-weight:400;letter-spacing:0.25px;">'B'</div>
<div class="t" style="left:765.2px;top:1147.1px;font-size:26.5px;color:#000;font-weight:400;letter-spacing:0.25px;">and</div>
<div class="t" style="left:817.1px;top:1147.1px;font-size:26.5px;color:#000;font-weight:400;letter-spacing:0.55px;">resid</div>
<div class="t" style="left:885.0px;top:1147.1px;font-size:26.5px;color:#000;font-weight:400;letter-spacing:0px;transform:scaleX(1.05);transform-origin:7.4px 0;">8</div>
<div class="t" style="left:909.1px;top:1147.1px;font-size:26.5px;color:#000;font-weight:400;letter-spacing:0.817px;">through</div>
<svg style="position:absolute;left:1010.75px;top:1150.10px" width="11" height="21" viewBox="-1 -20 11 21"><path d="M4.75 -19.1 H7.4 V0 H4.75 V-15.7 L1.1 -12.8 L0 -14.9 Z" fill="#000"/></svg><div class="t" style="left:1023.0px;top:1147.1px;font-size:26.5px;color:#000;font-weight:400;letter-spacing:0px;transform:scaleX(1.05);transform-origin:7.4px 0;">5</div>
<div class="t" style="left:1155.0px;top:1147.1px;font-size:26.5px;color:#000;font-weight:400;letter-spacing:0.4px;">parallel</div>
<div class="t" style="left:1356.2px;top:1147.1px;font-size:26.5px;color:#000;font-weight:400;letter-spacing:0.425px;">chain</div>
<div class="t" style="left:1429.2px;top:1147.1px;font-size:26.5px;color:#000;font-weight:400;letter-spacing:0.25px;">'B'</div>
<div class="t" style="left:1465.4px;top:1147.1px;font-size:26.5px;color:#000;font-weight:400;letter-spacing:0.25px;">and</div>
<div class="t" style="left:1517.2px;top:1147.1px;font-size:26.5px;color:#000;font-weight:400;letter-spacing:0.55px;">resid</div>
<svg style="position:absolute;left:1584.85px;top:1150.10px" width="11" height="21" viewBox="-1 -20 11 21"><path d="M4.75 -19.1 H7.4 V0 H4.75 V-15.7 L1.1 -12.8 L0 -14.9 Z" fill="#000"/></svg><div class="t" style="left:1597.2px;top:1147.1px;font-size:26.5px;color:#000;font-weight:400;letter-spacing:0px;transform:scaleX(1.05);transform-origin:7.4px 0;">2</div>
<div class="t" style="left:1620.3px;top:1147.1px;font-size:26.5px;color:#000;font-weight:400;letter-spacing:0.25px;">and</div>
<div class="t" style="left:1672.1px;top:1147.1px;font-size:26.5px;color:#000;font-weight:400;letter-spacing:0.333px;">name</div>
<div class="t" style="left:1745.5px;top:1147.1px;font-size:26.5px;color:#000;font-weight:400;letter-spacing:0px;">N</div>
<div class="t" style="left:1856.2px;top:1147.1px;font-size:26.5px;color:#000;font-weight:400;letter-spacing:0.425px;">chain</div>
<div class="t" style="left:1929.2px;top:1147.1px;font-size:26.5px;color:#000;font-weight:400;letter-spacing:0.25px;">'B'</div>
<div class="t" style="left:1965.4px;top:1147.1px;font-size:26.5px;color:#000;font-weight:400;letter-spacing:0.25px;">and</div>
<div class="t" style="left:2017.2px;top:1147.1px;font-size:26.5px;color:#000;font-weight:400;letter-spacing:0.55px;">resid</div>
<div class="t" style="left:2085.2px;top:1147.1px;font-size:26.5px;color:#000;font-weight:400;letter-spacing:0px;transform:scaleX(1.05);transform-origin:7.4px 0;">4</div>
<div class="t" style="left:2100.8px;top:1147.1px;font-size:26.5px;color:#000;font-weight:400;letter-spacing:0px;transform:scaleX(1.05);transform-origin:7.4px 0;">5</div>
<div class="t" style="left:2123.8px;top:1147.1px;font-size:26.5px;color:#000;font-weight:400;letter-spacing:0.25px;">and</div>
<div class="t" style="left:2175.7px;top:1147.1px;font-size:26.5px;color:#000;font-weight:400;letter-spacing:0.333px;">name</div>
<div class="t" style="left:2250.1px;top:1147.1px;font-size:26.5px;color:#000;font-weight:400;letter-spacing:0px;">O</div>
<div class="t" style="left:656.0px;top:1191.1px;font-size:26.5px;color:#000;font-weight:400;letter-spacing:0.425px;">chain</div>
<div class="t" style="left:729.0px;top:1191.1px;font-size:26.5px;color:#000;font-weight:400;letter-spacing:0.25px;">'B'</div>
<div class="t" style="left:765.2px;top:1191.1px;font-size:26.5px;color:#000;font-weight:400;letter-spacing:0.25px;">and</div>
<div class="t" style="left:817.1px;top:1191.1px;font-size:26.5px;color:#000;font-weight:400;letter-spacing:0.55px;">resid</div>
<div class="t" style="left:885.0px;top:1191.1px;font-size:26.5px;color:#000;font-weight:400;letter-spacing:0px;transform:scaleX(1.05);transform-origin:7.4px 0;">2</div>
<div class="t" style="left:900.6px;top:1191.1px;font-size:26.5px;color:#000;font-weight:400;letter-spacing:0px;transform:scaleX(1.05);transform-origin:7.4px 0;">5</div>
<div class="t" style="left:916.2px;top:1191.1px;font-size:26.5px;color:#000;font-weight:400;letter-spacing:0px;transform:scaleX(1.05);transform-origin:7.4px 0;">9</div>
<div class="t" style="left:940.3px;top:1191.1px;font-size:26.5px;color:#000;font-weight:400;letter-spacing:0.817px;">through</div>
<div class="t" style="left:1042.2px;top:1191.1px;font-size:26.5px;color:#000;font-weight:400;letter-spacing:0px;transform:scaleX(1.05);transform-origin:7.4px 0;">2</div>
<div class="t" style="left:1057.8px;top:1191.1px;font-size:26.5px;color:#000;font-weight:400;letter-spacing:0px;transform:scaleX(1.05);transform-origin:7.4px 0;">6</div>
<div class="t" style="left:1073.4px;top:1191.1px;font-size:26.5px;color:#000;font-weight:400;letter-spacing:0px;transform:scaleX(1.05);transform-origin:7.4px 0;">6</div>
<div class="t" style="left:1156.0px;top:1191.1px;font-size:26.5px;color:#000;font-weight:400;letter-spacing:0.527px;">antiparallel</div>
<div class="t" style="left:1356.2px;top:1191.1px;font-size:26.5px;color:#000;font-weight:400;letter-spacing:0.425px;">chain</div>
<div class="t" style="left:1429.2px;top:1191.1px;font-size:26.5px;color:#000;font-weight:400;letter-spacing:0.25px;">'B'</div>
<div class="t" style="left:1465.4px;top:1191.1px;font-size:26.5px;color:#000;font-weight:400;letter-spacing:0.25px;">and</div>
<div class="t" style="left:1517.2px;top:1191.1px;font-size:26.5px;color:#000;font-weight:400;letter-spacing:0.55px;">resid</div>
<div class="t" style="left:1585.1px;top:1191.1px;font-size:26.5px;color:#000;font-weight:400;letter-spacing:0px;transform:scaleX(1.05);transform-origin:7.4px 0;">2</div>
<div class="t" style="left:1600.7px;top:1191.1px;font-size:26.5px;color:#000;font-weight:400;letter-spacing:0px;transform:scaleX(1.05);transform-origin:7.4px 0;">6</div>
<svg style="position:absolute;left:1616.05px;top:1194.10px" width="11" height="21" viewBox="-1 -20 11 21"><path d="M4.75 -19.1 H7.4 V0 H4.75 V-15.7 L1.1 -12.8 L0 -14.9 Z" fill="#000"/></svg><div class="t" style="left:1635.9px;top:1191.1px;font-size:26.5px;color:#000;font-weight:400;letter-spacing:0.25px;">and</div>
<div class="t" style="left:1687.7px;top:1191.1px;font-size:26.5px;color:#000;font-weight:400;letter-spacing:0.333px;">name</div>
<div class="t" style="left:1762.1px;top:1191.1px;font-size:26.5px;color:#000;font-weight:400;letter-spacing:0px;">O</div>
<div class="t" style="left:1856.2px;top:1191.1px;font-size:26.5px;color:#000;font-weight:400;letter-spacing:0.425px;">chain</div>
<div class="t" style="left:1929.2px;top:1191.1px;font-size:26.5px;color:#000;font-weight:400;letter-spacing:0.25px;">'B'</div>
<div class="t" style="left:1965.4px;top:1191.1px;font-size:26.5px;color:#000;font-weight:400;letter-spacing:0.25px;">and</div>
<div class="t" style="left:2017.2px;top:1191.1px;font-size:26.5px;color:#000;font-weight:400;letter-spacing:0.55px;">resid</div>
<svg style="position:absolute;left:2084.85px;top:1194.10px" width="11" height="21" viewBox="-1 -20 11 21"><path d="M4.75 -19.1 H7.4 V0 H4.75 V-15.7 L1.1 -12.8 L0 -14.9 Z" fill="#000"/></svg><div class="t" style="left:2097.2px;top:1191.1px;font-size:26.5px;color:#000;font-weight:400;letter-spacing:0px;transform:scaleX(1.05);transform-origin:7.4px 0;">3</div>
<div class="t" style="left:2120.2px;top:1191.1px;font-size:26.5px;color:#000;font-weight:400;letter-spacing:0.25px;">and</div>
<div class="t" style="left:2172.1px;top:1191.1px;font-size:26.5px;color:#000;font-weight:400;letter-spacing:0.333px;">name</div>
<div class="t" style="left:2245.5px;top:1191.1px;font-size:26.5px;color:#000;font-weight:400;letter-spacing:0px;">N</div>
<svg style="position:absolute;left:511px;top:1241.0px" width="20" height="16"><path d="M1 1 L19 1 L10 15 Z" fill="#8c8c8c"/></svg>
<div class="t" style="left:540.3px;top:1235.1px;font-size:26px;color:#000;font-weight:400;letter-spacing:0px;transform:scaleX(0.91);transform-origin:0.5px 0;">A</div>
<div class="t" style="left:557.3px;top:1235.1px;font-size:26px;color:#000;font-weight:400;letter-spacing:0px;transform:scaleX(0.91);transform-origin:0.5px 0;">A</div>
<div class="t" style="left:575.1px;top:1234.6px;font-size:26.5px;color:#000;font-weight:400;letter-spacing:0px;transform:scaleX(1.05);transform-origin:7.4px 0;">6</div>
<div class="t" style="left:656.0px;top:1235.1px;font-size:26.5px;color:#000;font-weight:400;letter-spacing:0.425px;">chain</div>
<div class="t" style="left:729.0px;top:1235.1px;font-size:26.5px;color:#000;font-weight:400;letter-spacing:0.25px;">'B'</div>
<div class="t" style="left:765.2px;top:1235.1px;font-size:26.5px;color:#000;font-weight:400;letter-spacing:0.25px;">and</div>
<div class="t" style="left:817.1px;top:1235.1px;font-size:26.5px;color:#000;font-weight:400;letter-spacing:0.55px;">resid</div>
<div class="t" style="left:885.0px;top:1235.1px;font-size:26.5px;color:#000;font-weight:400;letter-spacing:0px;transform:scaleX(1.05);transform-origin:7.4px 0;">9</div>
<div class="t" style="left:900.6px;top:1235.1px;font-size:26.5px;color:#000;font-weight:400;letter-spacing:0px;transform:scaleX(1.05);transform-origin:7.4px 0;">0</div>
<div class="t" style="left:924.7px;top:1235.1px;font-size:26.5px;color:#000;font-weight:400;letter-spacing:0.817px;">through</div>
<div class="t" style="left:1026.6px;top:1235.1px;font-size:26.5px;color:#000;font-weight:400;letter-spacing:0px;transform:scaleX(1.05);transform-origin:7.4px 0;">9</div>
<div class="t" style="left:1042.2px;top:1235.1px;font-size:26.5px;color:#000;font-weight:400;letter-spacing:0px;transform:scaleX(1.05);transform-origin:7.4px 0;">8</div>
<div class="t" style="left:656.0px;top:1279.1px;font-size:26.5px;color:#000;font-weight:400;letter-spacing:0.425px;">chain</div>
<div class="t" style="left:729.0px;top:1279.1px;font-size:26.5px;color:#000;font-weight:400;letter-spacing:0.25px;">'B'</div>
<div class="t" style="left:765.2px;top:1279.1px;font-size:26.5px;color:#000;font-weight:400;letter-spacing:0.25px;">and</div>
<div class="t" style="left:817.1px;top:1279.1px;font-size:26.5px;color:#000;font-weight:400;letter-spacing:0.55px;">resid</div>
<svg style="position:absolute;left:884.65px;top:1282.10px" width="11" height="21" viewBox="-1 -20 11 21"><path d="M4.75 -19.1 H7.4 V0 H4.75 V-15.7 L1.1 -12.8 L0 -14.9 Z" fill="#000"/></svg><div class="t" style="left:897.0px;top:1279.1px;font-size:26.5px;color:#000;font-weight:400;letter-spacing:0px;transform:scaleX(1.05);transform-origin:7.4px 0;">0</div>
<svg style="position:absolute;left:912.25px;top:1282.10px" width="11" height="21" viewBox="-1 -20 11 21"><path d="M4.75 -19.1 H7.4 V0 H4.75 V-15.7 L1.1 -12.8 L0 -14.9 Z" fill="#000"/></svg><div class="t" style="left:933.1px;top:1279.1px;font-size:26.5px;color:#000;font-weight:400;letter-spacing:0.817px;">through</div>
<svg style="position:absolute;left:1034.75px;top:1282.10px" width="11" height="21" viewBox="-1 -20 11 21"><path d="M4.75 -19.1 H7.4 V0 H4.75 V-15.7 L1.1 -12.8 L0 -14.9 Z" fill="#000"/></svg><div class="t" style="left:1047.0px;top:1279.1px;font-size:26.5px;color:#000;font-weight:400;letter-spacing:0px;transform:scaleX(1.05);transform-origin:7.4px 0;">0</div>
<div class="t" style="left:1062.6px;top:1279.1px;font-size:26.5px;color:#000;font-weight:400;letter-spacing:0px;transform:scaleX(1.05);transform-origin:7.4px 0;">9</div>
<div class="t" style="left:1156.0px;top:1279.1px;font-size:26.5px;color:#000;font-weight:400;letter-spacing:0.527px;">antiparallel</div>
<div class="t" style="left:1356.2px;top:1279.1px;font-size:26.5px;color:#000;font-weight:400;letter-spacing:0.425px;">chain</div>
<div class="t" style="left:1429.2px;top:1279.1px;font-size:26.5px;color:#000;font-weight:400;letter-spacing:0.25px;">'B'</div>
<div class="t" style="left:1465.4px;top:1279.1px;font-size:26.5px;color:#000;font-weight:400;letter-spacing:0.25px;">and</div>
<div class="t" style="left:1517.2px;top:1279.1px;font-size:26.5px;color:#000;font-weight:400;letter-spacing:0.55px;">resid</div>
<svg style="position:absolute;left:1584.85px;top:1282.10px" width="11" height="21" viewBox="-1 -20 11 21"><path d="M4.75 -19.1 H7.4 V0 H4.75 V-15.7 L1.1 -12.8 L0 -14.9 Z" fill="#000"/></svg><div class="t" style="left:1597.2px;top:1279.1px;font-size:26.5px;color:#000;font-weight:400;letter-spacing:0px;transform:scaleX(1.05);transform-origin:7.4px 0;">0</div>
<div class="t" style="left:1612.8px;top:1279.1px;font-size:26.5px;color:#000;font-weight:400;letter-spacing:0px;transform:scaleX(1.05);transform-origin:7.4px 0;">7</div>
<div class="t" style="left:1635.9px;top:1279.1px;font-size:26.5px;color:#000;font-weight:400;letter-spacing:0.25px;">and</div>
<div class="t" style="left:1687.7px;top:1279.1px;font-size:26.5px;color:#000;font-weight:400;letter-spacing:0.333px;">name</div>
<div class="t" style="left:1762.1px;top:1279.1px;font-size:26.5px;color:#000;font-weight:400;letter-spacing:0px;">O</div>
<div class="t" style="left:1856.2px;top:1279.1px;font-size:26.5px;color:#000;font-weight:400;letter-spacing:0.425px;">chain</div>
<div class="t" style="left:1929.2px;top:1279.1px;font-size:26.5px;color:#000;font-weight:400;letter-spacing:0.25px;">'B'</div>
<div class="t" style="left:1965.4px;top:1279.1px;font-size:26.5px;color:#000;font-weight:400;letter-spacing:0.25px;">and</div>
<div class="t" style="left:2017.2px;top:1279.1px;font-size:26.5px;color:#000;font-weight:400;letter-spacing:0.55px;">resid</div>
<div class="t" style="left:2085.2px;top:1279.1px;font-size:26.5px;color:#000;font-weight:400;letter-spacing:0px;transform:scaleX(1.05);transform-origin:7.4px 0;">9</div>
<div class="t" style="left:2100.8px;top:1279.1px;font-size:26.5px;color:#000;font-weight:400;letter-spacing:0px;transform:scaleX(1.05);transform-origin:7.4px 0;">2</div>
<div class="t" style="left:2123.8px;top:1279.1px;font-size:26.5px;color:#000;font-weight:400;letter-spacing:0.25px;">and</div>
<div class="t" style="left:2175.7px;top:1279.1px;font-size:26.5px;color:#000;font-weight:400;letter-spacing:0.333px;">name</div>
<div class="t" style="left:2249.1px;top:1279.1px;font-size:26.5px;color:#000;font-weight:400;letter-spacing:0px;">N</div>
<div class="t" style="left:656.0px;top:1323.1px;font-size:26.5px;color:#000;font-weight:400;letter-spacing:0.425px;">chain</div>
<div class="t" style="left:729.0px;top:1323.1px;font-size:26.5px;color:#000;font-weight:400;letter-spacing:0.25px;">'B'</div>
<div class="t" style="left:765.2px;top:1323.1px;font-size:26.5px;color:#000;font-weight:400;letter-spacing:0.25px;">and</div>
<div class="t" style="left:817.1px;top:1323.1px;font-size:26.5px;color:#000;font-weight:400;letter-spacing:0.55px;">resid</div>
<svg style="position:absolute;left:884.65px;top:1326.10px" width="11" height="21" viewBox="-1 -20 11 21"><path d="M4.75 -19.1 H7.4 V0 H4.75 V-15.7 L1.1 -12.8 L0 -14.9 Z" fill="#000"/></svg><svg style="position:absolute;left:896.65px;top:1326.10px" width="11" height="21" viewBox="-1 -20 11 21"><path d="M4.75 -19.1 H7.4 V0 H4.75 V-15.7 L1.1 -12.8 L0 -14.9 Z" fill="#000"/></svg><div class="t" style="left:909.0px;top:1323.1px;font-size:26.5px;color:#000;font-weight:400;letter-spacing:0px;transform:scaleX(1.05);transform-origin:7.4px 0;">5</div>
<div class="t" style="left:933.1px;top:1323.1px;font-size:26.5px;color:#000;font-weight:400;letter-spacing:0.817px;">through</div>
<svg style="position:absolute;left:1034.75px;top:1326.10px" width="11" height="21" viewBox="-1 -20 11 21"><path d="M4.75 -19.1 H7.4 V0 H4.75 V-15.7 L1.1 -12.8 L0 -14.9 Z" fill="#000"/></svg><div class="t" style="left:1047.1px;top:1323.1px;font-size:26.5px;color:#000;font-weight:400;letter-spacing:0px;transform:scaleX(1.05);transform-origin:7.4px 0;">2</div>
<div class="t" style="left:1062.7px;top:1323.1px;font-size:26.5px;color:#000;font-weight:400;letter-spacing:0px;transform:scaleX(1.05);transform-origin:7.4px 0;">0</div>
<div class="t" style="left:1156.0px;top:1323.1px;font-size:26.5px;color:#000;font-weight:400;letter-spacing:0.527px;">antiparallel</div>
<div class="t" style="left:1356.2px;top:1323.1px;font-size:26.5px;color:#000;font-weight:400;letter-spacing:0.425px;">chain</div>
<div class="t" style="left:1429.2px;top:1323.1px;font-size:26.5px;color:#000;font-weight:400;letter-spacing:0.25px;">'B'</div>
<div class="t" style="left:1465.4px;top:1323.1px;font-size:26.5px;color:#000;font-weight:400;letter-spacing:0.25px;">and</div>
<div class="t" style="left:1517.2px;top:1323.1px;font-size:26.5px;color:#000;font-weight:400;letter-spacing:0.55px;">resid</div>
<svg style="position:absolute;left:1584.85px;top:1326.10px" width="11" height="21" viewBox="-1 -20 11 21"><path d="M4.75 -19.1 H7.4 V0 H4.75 V-15.7 L1.1 -12.8 L0 -14.9 Z" fill="#000"/></svg><svg style="position:absolute;left:1596.85px;top:1326.10px" width="11" height="21" viewBox="-1 -20 11 21"><path d="M4.75 -19.1 H7.4 V0 H4.75 V-15.7 L1.1 -12.8 L0 -14.9 Z" fill="#000"/></svg><div class="t" style="left:1609.2px;top:1323.1px;font-size:26.5px;color:#000;font-weight:400;letter-spacing:0px;transform:scaleX(1.05);transform-origin:7.4px 0;">6</div>
<div class="t" style="left:1632.3px;top:1323.1px;font-size:26.5px;color:#000;font-weight:400;letter-spacing:0.25px;">and</div>
<div class="t" style="left:1684.1px;top:1323.1px;font-size:26.5px;color:#000;font-weight:400;letter-spacing:0.333px;">name</div>
<div class="t" style="left:1758.5px;top:1323.1px;font-size:26.5px;color:#000;font-weight:400;letter-spacing:0px;">O</div>
<div class="t" style="left:1856.2px;top:1323.1px;font-size:26.5px;color:#000;font-weight:400;letter-spacing:0.425px;">chain</div>
<div class="t" style="left:1929.2px;top:1323.1px;font-size:26.5px;color:#000;font-weight:400;letter-spacing:0.25px;">'B'</div>
<div class="t" style="left:1965.4px;top:1323.1px;font-size:26.5px;color:#000;font-weight:400;letter-spacing:0.25px;">and</div>
<div class="t" style="left:2017.2px;top:1323.1px;font-size:26.5px;color:#000;font-weight:400;letter-spacing:0.55px;">resid</div>
<svg style="position:absolute;left:2084.85px;top:1326.10px" width="11" height="21" viewBox="-1 -20 11 21"><path d="M4.75 -19.1 H7.4 V0 H4.75 V-15.7 L1.1 -12.8 L0 -14.9 Z" fill="#000"/></svg><div class="t" style="left:2097.2px;top:1323.1px;font-size:26.5px;color:#000;font-weight:400;letter-spacing:0px;transform:scaleX(1.05);transform-origin:7.4px 0;">0</div>
<div class="t" style="left:2112.8px;top:1323.1px;font-size:26.5px;color:#000;font-weight:400;letter-spacing:0px;transform:scaleX(1.05);transform-origin:7.4px 0;">8</div>
<div class="t" style="left:2135.8px;top:1323.1px;font-size:26.5px;color:#000;font-weight:400;letter-spacing:0.25px;">and</div>
<div class="t" style="left:2187.7px;top:1323.1px;font-size:26.5px;color:#000;font-weight:400;letter-spacing:0.333px;">name</div>
<div class="t" style="left:2261.1px;top:1323.1px;font-size:26.5px;color:#000;font-weight:400;letter-spacing:0px;">N</div>
<svg style="position:absolute;left:511px;top:1373.0px" width="20" height="16"><path d="M1 1 L19 1 L10 15 Z" fill="#8c8c8c"/></svg>
<div class="t" style="left:540.3px;top:1367.1px;font-size:26px;color:#000;font-weight:400;letter-spacing:0px;transform:scaleX(0.91);transform-origin:0.5px 0;">A</div>
<div class="t" style="left:557.3px;top:1367.1px;font-size:26px;color:#000;font-weight:400;letter-spacing:0px;transform:scaleX(0.91);transform-origin:0.5px 0;">A</div>
<div class="t" style="left:575.1px;top:1366.6px;font-size:26.5px;color:#000;font-weight:400;letter-spacing:0px;transform:scaleX(1.05);transform-origin:7.4px 0;">7</div>
<div class="t" style="left:656.0px;top:1367.1px;font-size:26.5px;color:#000;font-weight:400;letter-spacing:0.425px;">chain</div>
<div class="t" style="left:729.0px;top:1367.1px;font-size:26.5px;color:#000;font-weight:400;letter-spacing:0.25px;">'B'</div>
<div class="t" style="left:765.2px;top:1367.1px;font-size:26.5px;color:#000;font-weight:400;letter-spacing:0.25px;">and</div>
<div class="t" style="left:817.1px;top:1367.1px;font-size:26.5px;color:#000;font-weight:400;letter-spacing:0.55px;">resid</div>
<svg style="position:absolute;left:884.65px;top:1370.10px" width="11" height="21" viewBox="-1 -20 11 21"><path d="M4.75 -19.1 H7.4 V0 H4.75 V-15.7 L1.1 -12.8 L0 -14.9 Z" fill="#000"/></svg><div class="t" style="left:897.0px;top:1367.1px;font-size:26.5px;color:#000;font-weight:400;letter-spacing:0px;transform:scaleX(1.05);transform-origin:7.4px 0;">4</div>
<div class="t" style="left:912.6px;top:1367.1px;font-size:26.5px;color:#000;font-weight:400;letter-spacing:0px;transform:scaleX(1.05);transform-origin:7.4px 0;">5</div>
<div class="t" style="left:936.7px;top:1367.1px;font-size:26.5px;color:#000;font-weight:400;letter-spacing:0.817px;">through</div>
<svg style="position:absolute;left:1038.35px;top:1370.10px" width="11" height="21" viewBox="-1 -20 11 21"><path d="M4.75 -19.1 H7.4 V0 H4.75 V-15.7 L1.1 -12.8 L0 -14.9 Z" fill="#000"/></svg><div class="t" style="left:1050.7px;top:1367.1px;font-size:26.5px;color:#000;font-weight:400;letter-spacing:0px;transform:scaleX(1.05);transform-origin:7.4px 0;">4</div>
<div class="t" style="left:1066.2px;top:1367.1px;font-size:26.5px;color:#000;font-weight:400;letter-spacing:0px;transform:scaleX(1.05);transform-origin:7.4px 0;">7</div>
<div class="t" style="left:656.0px;top:1411.1px;font-size:26.5px;color:#000;font-weight:400;letter-spacing:0.425px;">chain</div>
<div class="t" style="left:729.0px;top:1411.1px;font-size:26.5px;color:#000;font-weight:400;letter-spacing:0.25px;">'B'</div>
<div class="t" style="left:765.2px;top:1411.1px;font-size:26.5px;color:#000;font-weight:400;letter-spacing:0.25px;">and</div>
<div class="t" style="left:817.1px;top:1411.1px;font-size:26.5px;color:#000;font-weight:400;letter-spacing:0.55px;">resid</div>
<svg style="position:absolute;left:884.65px;top:1414.10px" width="11" height="21" viewBox="-1 -20 11 21"><path d="M4.75 -19.1 H7.4 V0 H4.75 V-15.7 L1.1 -12.8 L0 -14.9 Z" fill="#000"/></svg><div class="t" style="left:897.0px;top:1411.1px;font-size:26.5px;color:#000;font-weight:400;letter-spacing:0px;transform:scaleX(1.05);transform-origin:7.4px 0;">5</div>
<div class="t" style="left:912.6px;top:1411.1px;font-size:26.5px;color:#000;font-weight:400;letter-spacing:0px;transform:scaleX(1.05);transform-origin:7.4px 0;">2</div>
<div class="t" style="left:936.7px;top:1411.1px;font-size:26.5px;color:#000;font-weight:400;letter-spacing:0.817px;">through</div>
<svg style="position:absolute;left:1038.35px;top:1414.10px" width="11" height="21" viewBox="-1 -20 11 21"><path d="M4.75 -19.1 H7.4 V0 H4.75 V-15.7 L1.1 -12.8 L0 -14.9 Z" fill="#000"/></svg><div class="t" style="left:1050.7px;top:1411.1px;font-size:26.5px;color:#000;font-weight:400;letter-spacing:0px;transform:scaleX(1.05);transform-origin:7.4px 0;">5</div>
<div class="t" style="left:1066.2px;top:1411.1px;font-size:26.5px;color:#000;font-weight:400;letter-spacing:0px;transform:scaleX(1.05);transform-origin:7.4px 0;">5</div>
<div class="t" style="left:1156.0px;top:1411.1px;font-size:26.5px;color:#000;font-weight:400;letter-spacing:0.527px;">antiparallel</div>
<div class="t" style="left:1356.2px;top:1411.1px;font-size:26.5px;color:#000;font-weight:400;letter-spacing:0.425px;">chain</div>
<div class="t" style="left:1429.2px;top:1411.1px;font-size:26.5px;color:#000;font-weight:400;letter-spacing:0.25px;">'B'</div>
<div class="t" style="left:1465.4px;top:1411.1px;font-size:26.5px;color:#000;font-weight:400;letter-spacing:0.25px;">and</div>
<div class="t" style="left:1517.2px;top:1411.1px;font-size:26.5px;color:#000;font-weight:400;letter-spacing:0.55px;">resid</div>
<svg style="position:absolute;left:1584.85px;top:1414.10px" width="11" height="21" viewBox="-1 -20 11 21"><path d="M4.75 -19.1 H7.4 V0 H4.75 V-15.7 L1.1 -12.8 L0 -14.9 Z" fill="#000"/></svg><div class="t" style="left:1597.2px;top:1411.1px;font-size:26.5px;color:#000;font-weight:400;letter-spacing:0px;transform:scaleX(1.05);transform-origin:7.4px 0;">5</div>
<div class="t" style="left:1612.8px;top:1411.1px;font-size:26.5px;color:#000;font-weight:400;letter-spacing:0px;transform:scaleX(1.05);transform-origin:7.4px 0;">3</div>
<div class="t" style="left:1635.9px;top:1411.1px;font-size:26.5px;color:#000;font-weight:400;letter-spacing:0.25px;">and</div>
<div class="t" style="left:1687.7px;top:1411.1px;font-size:26.5px;color:#000;font-weight:400;letter-spacing:0.333px;">name</div>
<div class="t" style="left:1762.1px;top:1411.1px;font-size:26.5px;color:#000;font-weight:400;letter-spacing:0px;">O</div>
<div class="t" style="left:1856.2px;top:1411.1px;font-size:26.5px;color:#000;font-weight:400;letter-spacing:0.425px;">chain</div>
<div class="t" style="left:1929.2px;top:1411.1px;font-size:26.5px;color:#000;font-weight:400;letter-spacing:0.25px;">'B'</div>
<div class="t" style="left:1965.4px;top:1411.1px;font-size:26.5px;color:#000;font-weight:400;letter-spacing:0.25px;">and</div>
<div class="t" style="left:2017.2px;top:1411.1px;font-size:26.5px;color:#000;font-weight:400;letter-spacing:0.55px;">resid</div>
<svg style="position:absolute;left:2084.85px;top:1414.10px" width="11" height="21" viewBox="-1 -20 11 21"><path d="M4.75 -19.1 H7.4 V0 H4.75 V-15.7 L1.1 -12.8 L0 -14.9 Z" fill="#000"/></svg><div class="t" style="left:2097.2px;top:1411.1px;font-size:26.5px;color:#000;font-weight:400;letter-spacing:0px;transform:scaleX(1.05);transform-origin:7.4px 0;">4</div>
<div class="t" style="left:2112.8px;top:1411.1px;font-size:26.5px;color:#000;font-weight:400;letter-spacing:0px;transform:scaleX(1.05);transform-origin:7.4px 0;">6</div>
<div class="t" style="left:2135.8px;top:1411.1px;font-size:26.5px;color:#000;font-weight:400;letter-spacing:0.25px;">and</div>
<div class="t" style="left:2187.7px;top:1411.1px;font-size:26.5px;color:#000;font-weight:400;letter-spacing:0.333px;">name</div>
<div class="t" style="left:2261.1px;top:1411.1px;font-size:26.5px;color:#000;font-weight:400;letter-spacing:0px;">N</div>
<div class="t" style="left:656.0px;top:1455.1px;font-size:26.5px;color:#000;font-weight:400;letter-spacing:0.425px;">chain</div>
<div class="t" style="left:729.0px;top:1455.1px;font-size:26.5px;color:#000;font-weight:400;letter-spacing:0.25px;">'B'</div>
<div class="t" style="left:765.2px;top:1455.1px;font-size:26.5px;color:#000;font-weight:400;letter-spacing:0.25px;">and</div>
<div class="t" style="left:817.1px;top:1455.1px;font-size:26.5px;color:#000;font-weight:400;letter-spacing:0.55px;">resid</div>
<svg style="position:absolute;left:884.65px;top:1458.10px" width="11" height="21" viewBox="-1 -20 11 21"><path d="M4.75 -19.1 H7.4 V0 H4.75 V-15.7 L1.1 -12.8 L0 -14.9 Z" fill="#000"/></svg><div class="t" style="left:897.0px;top:1455.1px;font-size:26.5px;color:#000;font-weight:400;letter-spacing:0px;transform:scaleX(1.05);transform-origin:7.4px 0;">7</div>
<div class="t" style="left:912.6px;top:1455.1px;font-size:26.5px;color:#000;font-weight:400;letter-spacing:0px;transform:scaleX(1.05);transform-origin:7.4px 0;">7</div>
<div class="t" style="left:936.7px;top:1455.1px;font-size:26.5px;color:#000;font-weight:400;letter-spacing:0.817px;">through</div>
<svg style="position:absolute;left:1038.35px;top:1458.10px" width="11" height="21" viewBox="-1 -20 11 21"><path d="M4.75 -19.1 H7.4 V0 H4.75 V-15.7 L1.1 -12.8 L0 -14.9 Z" fill="#000"/></svg><div class="t" style="left:1050.7px;top:1455.1px;font-size:26.5px;color:#000;font-weight:400;letter-spacing:0px;transform:scaleX(1.05);transform-origin:7.4px 0;">8</div>
<div class="t" style="left:1066.2px;top:1455.1px;font-size:26.5px;color:#000;font-weight:400;letter-spacing:0px;transform:scaleX(1.05);transform-origin:7.4px 0;">2</div>
<div class="t" style="left:1155.0px;top:1455.1px;font-size:26.5px;color:#000;font-weight:400;letter-spacing:0.4px;">parallel</div>
<div class="t" style="left:1356.2px;top:1455.1px;font-size:26.5px;color:#000;font-weight:400;letter-spacing:0.425px;">chain</div>
<div class="t" style="left:1429.2px;top:1455.1px;font-size:26.5px;color:#000;font-weight:400;letter-spacing:0.25px;">'B'</div>
<div class="t" style="left:1465.4px;top:1455.1px;font-size:26.5px;color:#000;font-weight:400;letter-spacing:0.25px;">and</div>
<div class="t" style="left:1517.2px;top:1455.1px;font-size:26.5px;color:#000;font-weight:400;letter-spacing:0.55px;">resid</div>
<svg style="position:absolute;left:1584.85px;top:1458.10px" width="11" height="21" viewBox="-1 -20 11 21"><path d="M4.75 -19.1 H7.4 V0 H4.75 V-15.7 L1.1 -12.8 L0 -14.9 Z" fill="#000"/></svg><div class="t" style="left:1597.2px;top:1455.1px;font-size:26.5px;color:#000;font-weight:400;letter-spacing:0px;transform:scaleX(1.05);transform-origin:7.4px 0;">7</div>
<div class="t" style="left:1612.8px;top:1455.1px;font-size:26.5px;color:#000;font-weight:400;letter-spacing:0px;transform:scaleX(1.05);transform-origin:7.4px 0;">9</div>
<div class="t" style="left:1635.9px;top:1455.1px;font-size:26.5px;color:#000;font-weight:400;letter-spacing:0.25px;">and</div>
<div class="t" style="left:1687.7px;top:1455.1px;font-size:26.5px;color:#000;font-weight:400;letter-spacing:0.333px;">name</div>
<div class="t" style="left:1762.1px;top:1455.1px;font-size:26.5px;color:#000;font-weight:400;letter-spacing:0px;">O</div>
<div class="t" style="left:1856.2px;top:1455.1px;font-size:26.5px;color:#000;font-weight:400;letter-spacing:0.425px;">chain</div>
<div class="t" style="left:1929.2px;top:1455.1px;font-size:26.5px;color:#000;font-weight:400;letter-spacing:0.25px;">'B'</div>
<div class="t" style="left:1965.4px;top:1455.1px;font-size:26.5px;color:#000;font-weight:400;letter-spacing:0.25px;">and</div>
<div class="t" style="left:2017.2px;top:1455.1px;font-size:26.5px;color:#000;font-weight:400;letter-spacing:0.55px;">resid</div>
<svg style="position:absolute;left:2084.85px;top:1458.10px" width="11" height="21" viewBox="-1 -20 11 21"><path d="M4.75 -19.1 H7.4 V0 H4.75 V-15.7 L1.1 -12.8 L0 -14.9 Z" fill="#000"/></svg><div class="t" style="left:2097.2px;top:1455.1px;font-size:26.5px;color:#000;font-weight:400;letter-spacing:0px;transform:scaleX(1.05);transform-origin:7.4px 0;">5</div>
<div class="t" style="left:2112.8px;top:1455.1px;font-size:26.5px;color:#000;font-weight:400;letter-spacing:0px;transform:scaleX(1.05);transform-origin:7.4px 0;">4</div>
<div class="t" style="left:2135.8px;top:1455.1px;font-size:26.5px;color:#000;font-weight:400;letter-spacing:0.25px;">and</div>
<div class="t" style="left:2187.7px;top:1455.1px;font-size:26.5px;color:#000;font-weight:400;letter-spacing:0.333px;">name</div>
<div class="t" style="left:2261.1px;top:1455.1px;font-size:26.5px;color:#000;font-weight:400;letter-spacing:0px;">N</div>
<div class="t" style="left:656.0px;top:1499.1px;font-size:26.5px;color:#000;font-weight:400;letter-spacing:0.425px;">chain</div>
<div class="t" style="left:729.0px;top:1499.1px;font-size:26.5px;color:#000;font-weight:400;letter-spacing:0.25px;">'B'</div>
<div class="t" style="left:765.2px;top:1499.1px;font-size:26.5px;color:#000;font-weight:400;letter-spacing:0.25px;">and</div>
<div class="t" style="left:817.1px;top:1499.1px;font-size:26.5px;color:#000;font-weight:400;letter-spacing:0.55px;">resid</div>
<div class="t" style="left:885.0px;top:1499.1px;font-size:26.5px;color:#000;font-weight:400;letter-spacing:0px;transform:scaleX(1.05);transform-origin:7.4px 0;">2</div>
<svg style="position:absolute;left:900.25px;top:1502.10px" width="11" height="21" viewBox="-1 -20 11 21"><path d="M4.75 -19.1 H7.4 V0 H4.75 V-15.7 L1.1 -12.8 L0 -14.9 Z" fill="#000"/></svg><div class="t" style="left:912.6px;top:1499.1px;font-size:26.5px;color:#000;font-weight:400;letter-spacing:0px;transform:scaleX(1.05);transform-origin:7.4px 0;">4</div>
<div class="t" style="left:936.7px;top:1499.1px;font-size:26.5px;color:#000;font-weight:400;letter-spacing:0.817px;">through</div>
<div class="t" style="left:1038.7px;top:1499.1px;font-size:26.5px;color:#000;font-weight:400;letter-spacing:0px;transform:scaleX(1.05);transform-origin:7.4px 0;">2</div>
<svg style="position:absolute;left:1053.95px;top:1502.10px" width="11" height="21" viewBox="-1 -20 11 21"><path d="M4.75 -19.1 H7.4 V0 H4.75 V-15.7 L1.1 -12.8 L0 -14.9 Z" fill="#000"/></svg><div class="t" style="left:1066.2px;top:1499.1px;font-size:26.5px;color:#000;font-weight:400;letter-spacing:0px;transform:scaleX(1.05);transform-origin:7.4px 0;">8</div>
<div class="t" style="left:1155.0px;top:1499.1px;font-size:26.5px;color:#000;font-weight:400;letter-spacing:0.4px;">parallel</div>
<div class="t" style="left:1356.2px;top:1499.1px;font-size:26.5px;color:#000;font-weight:400;letter-spacing:0.425px;">chain</div>
<div class="t" style="left:1429.2px;top:1499.1px;font-size:26.5px;color:#000;font-weight:400;letter-spacing:0.25px;">'B'</div>
<div class="t" style="left:1465.4px;top:1499.1px;font-size:26.5px;color:#000;font-weight:400;letter-spacing:0.25px;">and</div>
<div class="t" style="left:1517.2px;top:1499.1px;font-size:26.5px;color:#000;font-weight:400;letter-spacing:0.55px;">resid</div>
<div class="t" style="left:1585.1px;top:1499.1px;font-size:26.5px;color:#000;font-weight:400;letter-spacing:0px;transform:scaleX(1.05);transform-origin:7.4px 0;">2</div>
<svg style="position:absolute;left:1600.45px;top:1502.10px" width="11" height="21" viewBox="-1 -20 11 21"><path d="M4.75 -19.1 H7.4 V0 H4.75 V-15.7 L1.1 -12.8 L0 -14.9 Z" fill="#000"/></svg><div class="t" style="left:1612.7px;top:1499.1px;font-size:26.5px;color:#000;font-weight:400;letter-spacing:0px;transform:scaleX(1.05);transform-origin:7.4px 0;">5</div>
<div class="t" style="left:1635.9px;top:1499.1px;font-size:26.5px;color:#000;font-weight:400;letter-spacing:0.25px;">and</div>
<div class="t" style="left:1687.7px;top:1499.1px;font-size:26.5px;color:#000;font-weight:400;letter-spacing:0.333px;">name</div>
<div class="t" style="left:1762.1px;top:1499.1px;font-size:26.5px;color:#000;font-weight:400;letter-spacing:0px;">O</div>
<div class="t" style="left:1856.2px;top:1499.1px;font-size:26.5px;color:#000;font-weight:400;letter-spacing:0.425px;">chain</div>
<div class="t" style="left:1929.2px;top:1499.1px;font-size:26.5px;color:#000;font-weight:400;letter-spacing:0.25px;">'B'</div>
<div class="t" style="left:1965.4px;top:1499.1px;font-size:26.5px;color:#000;font-weight:400;letter-spacing:0.25px;">and</div>
<div class="t" style="left:2017.2px;top:1499.1px;font-size:26.5px;color:#000;font-weight:400;letter-spacing:0.55px;">resid</div>
<svg style="position:absolute;left:2084.85px;top:1502.10px" width="11" height="21" viewBox="-1 -20 11 21"><path d="M4.75 -19.1 H7.4 V0 H4.75 V-15.7 L1.1 -12.8 L0 -14.9 Z" fill="#000"/></svg><div class="t" style="left:2097.2px;top:1499.1px;font-size:26.5px;color:#000;font-weight:400;letter-spacing:0px;transform:scaleX(1.05);transform-origin:7.4px 0;">7</div>
<div class="t" style="left:2112.8px;top:1499.1px;font-size:26.5px;color:#000;font-weight:400;letter-spacing:0px;transform:scaleX(1.05);transform-origin:7.4px 0;">8</div>
<div class="t" style="left:2135.8px;top:1499.1px;font-size:26.5px;color:#000;font-weight:400;letter-spacing:0.25px;">and</div>
<div class="t" style="left:2187.7px;top:1499.1px;font-size:26.5px;color:#000;font-weight:400;letter-spacing:0.333px;">name</div>
<div class="t" style="left:2261.1px;top:1499.1px;font-size:26.5px;color:#000;font-weight:400;letter-spacing:0px;">N</div>
<div class="t" style="left:656.0px;top:1543.1px;font-size:26.5px;color:#000;font-weight:400;letter-spacing:0.425px;">chain</div>
<div class="t" style="left:729.0px;top:1543.1px;font-size:26.5px;color:#000;font-weight:400;letter-spacing:0.25px;">'B'</div>
<div class="t" style="left:765.2px;top:1543.1px;font-size:26.5px;color:#000;font-weight:400;letter-spacing:0.25px;">and</div>
<div class="t" style="left:817.1px;top:1543.1px;font-size:26.5px;color:#000;font-weight:400;letter-spacing:0.55px;">resid</div>
<div class="t" style="left:885.0px;top:1543.1px;font-size:26.5px;color:#000;font-weight:400;letter-spacing:0px;transform:scaleX(1.05);transform-origin:7.4px 0;">2</div>
<div class="t" style="left:900.6px;top:1543.1px;font-size:26.5px;color:#000;font-weight:400;letter-spacing:0px;transform:scaleX(1.05);transform-origin:7.4px 0;">4</div>
<svg style="position:absolute;left:915.85px;top:1546.10px" width="11" height="21" viewBox="-1 -20 11 21"><path d="M4.75 -19.1 H7.4 V0 H4.75 V-15.7 L1.1 -12.8 L0 -14.9 Z" fill="#000"/></svg><div class="t" style="left:936.7px;top:1543.1px;font-size:26.5px;color:#000;font-weight:400;letter-spacing:0.817px;">through</div>
<div class="t" style="left:1038.7px;top:1543.1px;font-size:26.5px;color:#000;font-weight:400;letter-spacing:0px;transform:scaleX(1.05);transform-origin:7.4px 0;">2</div>
<div class="t" style="left:1054.2px;top:1543.1px;font-size:26.5px;color:#000;font-weight:400;letter-spacing:0px;transform:scaleX(1.05);transform-origin:7.4px 0;">4</div>
<div class="t" style="left:1069.8px;top:1543.1px;font-size:26.5px;color:#000;font-weight:400;letter-spacing:0px;transform:scaleX(1.05);transform-origin:7.4px 0;">3</div>
<div class="t" style="left:1156.0px;top:1543.1px;font-size:26.5px;color:#000;font-weight:400;letter-spacing:0.527px;">antiparallel</div>
<div class="t" style="left:1356.2px;top:1543.1px;font-size:26.5px;color:#000;font-weight:400;letter-spacing:0.425px;">chain</div>
<div class="t" style="left:1429.2px;top:1543.1px;font-size:26.5px;color:#000;font-weight:400;letter-spacing:0.25px;">'B'</div>
<div class="t" style="left:1465.4px;top:1543.1px;font-size:26.5px;color:#000;font-weight:400;letter-spacing:0.25px;">and</div>
<div class="t" style="left:1517.2px;top:1543.1px;font-size:26.5px;color:#000;font-weight:400;letter-spacing:0.55px;">resid</div>
<div class="t" style="left:1585.1px;top:1543.1px;font-size:26.5px;color:#000;font-weight:400;letter-spacing:0px;transform:scaleX(1.05);transform-origin:7.4px 0;">2</div>
<div class="t" style="left:1600.7px;top:1543.1px;font-size:26.5px;color:#000;font-weight:400;letter-spacing:0px;transform:scaleX(1.05);transform-origin:7.4px 0;">4</div>
<div class="t" style="left:1616.3px;top:1543.1px;font-size:26.5px;color:#000;font-weight:400;letter-spacing:0px;transform:scaleX(1.05);transform-origin:7.4px 0;">3</div>
<div class="t" style="left:1639.5px;top:1543.1px;font-size:26.5px;color:#000;font-weight:400;letter-spacing:0.25px;">and</div>
<div class="t" style="left:1691.3px;top:1543.1px;font-size:26.5px;color:#000;font-weight:400;letter-spacing:0.333px;">name</div>
<div class="t" style="left:1765.7px;top:1543.1px;font-size:26.5px;color:#000;font-weight:400;letter-spacing:0px;">O</div>
<div class="t" style="left:1856.2px;top:1543.1px;font-size:26.5px;color:#000;font-weight:400;letter-spacing:0.425px;">chain</div>
<div class="t" style="left:1929.2px;top:1543.1px;font-size:26.5px;color:#000;font-weight:400;letter-spacing:0.25px;">'B'</div>
<div class="t" style="left:1965.4px;top:1543.1px;font-size:26.5px;color:#000;font-weight:400;letter-spacing:0.25px;">and</div>
<div class="t" style="left:2017.2px;top:1543.1px;font-size:26.5px;color:#000;font-weight:400;letter-spacing:0.55px;">resid</div>
<div class="t" style="left:2085.2px;top:1543.1px;font-size:26.5px;color:#000;font-weight:400;letter-spacing:0px;transform:scaleX(1.05);transform-origin:7.4px 0;">2</div>
<svg style="position:absolute;left:2100.45px;top:1546.10px" width="11" height="21" viewBox="-1 -20 11 21"><path d="M4.75 -19.1 H7.4 V0 H4.75 V-15.7 L1.1 -12.8 L0 -14.9 Z" fill="#000"/></svg><div class="t" style="left:2112.8px;top:1543.1px;font-size:26.5px;color:#000;font-weight:400;letter-spacing:0px;transform:scaleX(1.05);transform-origin:7.4px 0;">4</div>
<div class="t" style="left:2135.8px;top:1543.1px;font-size:26.5px;color:#000;font-weight:400;letter-spacing:0.25px;">and</div>
<div class="t" style="left:2187.7px;top:1543.1px;font-size:26.5px;color:#000;font-weight:400;letter-spacing:0.333px;">name</div>
<div class="t" style="left:2261.1px;top:1543.1px;font-size:26.5px;color:#000;font-weight:400;letter-spacing:0px;">N</div>
</div></body></html>
